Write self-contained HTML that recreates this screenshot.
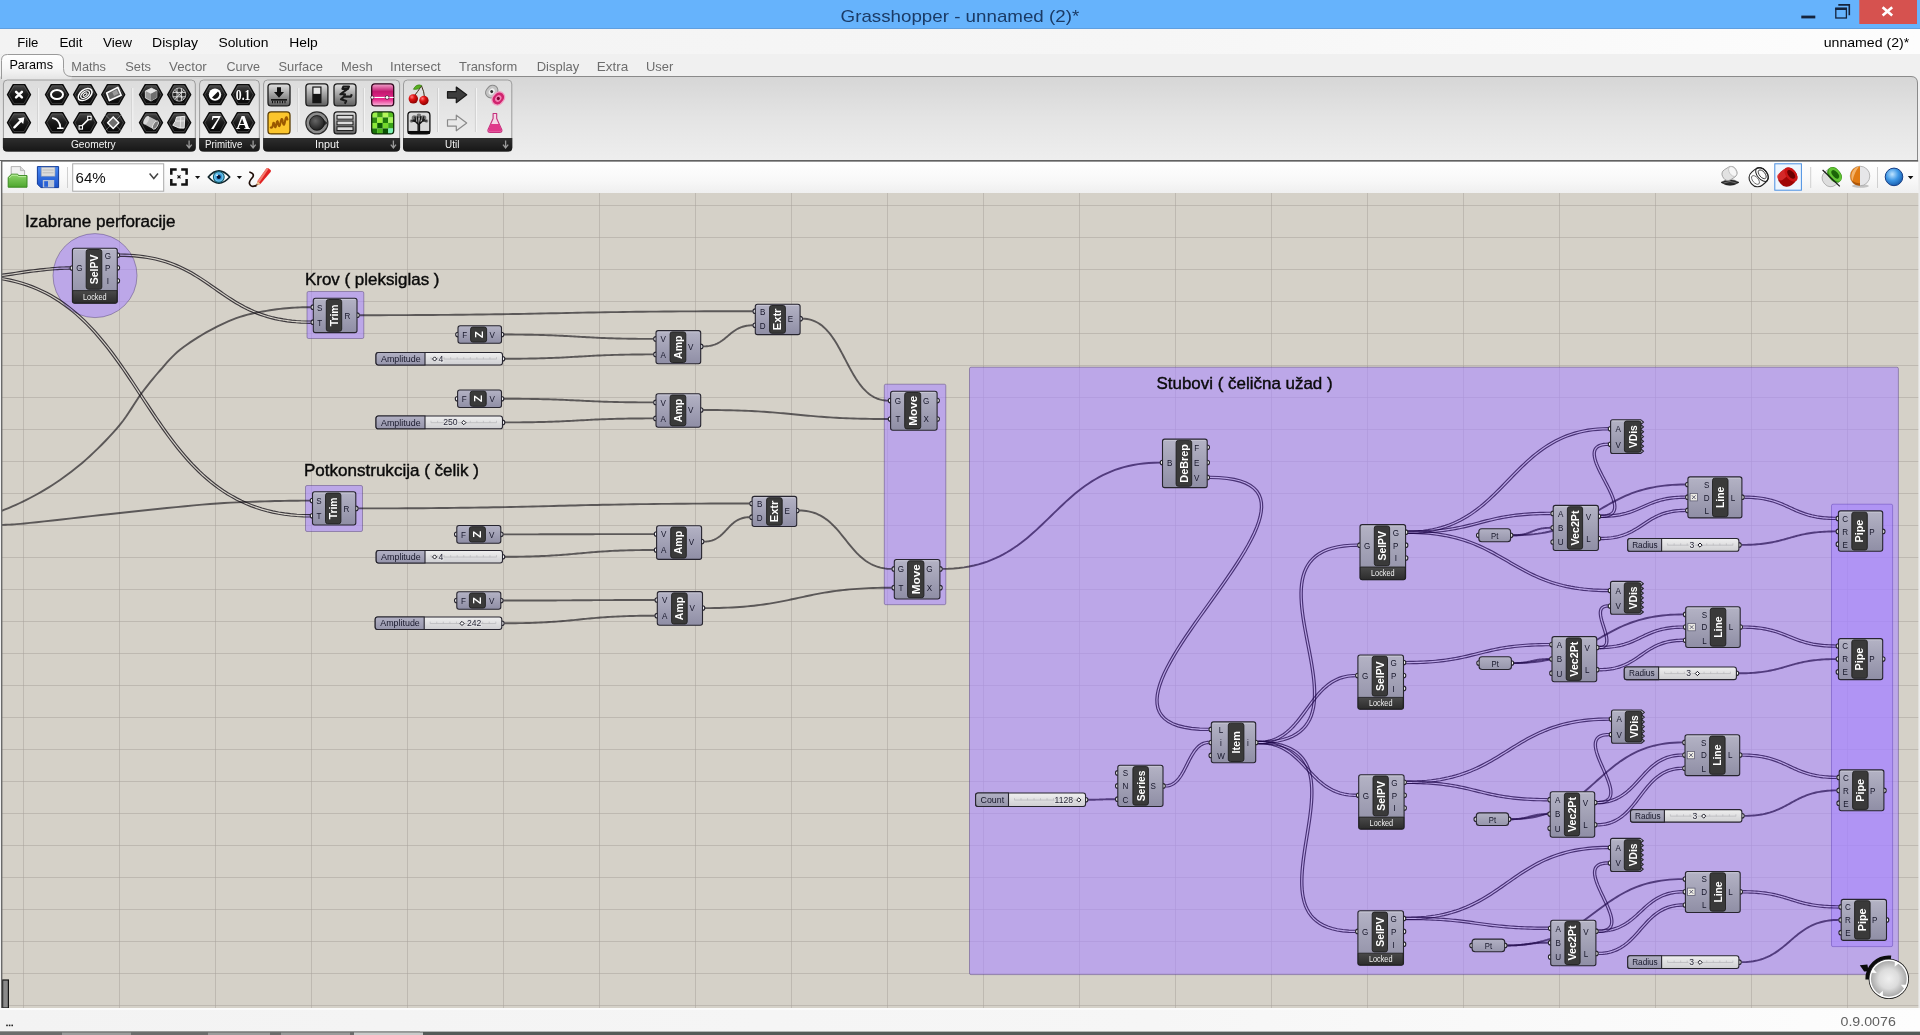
<!DOCTYPE html>
<html><head><meta charset="utf-8"><title>Grasshopper - unnamed (2)*</title>
<style>
html,body{margin:0;padding:0;width:1920px;height:1035px;overflow:hidden;background:#f0f0f0;font-family:"Liberation Sans",sans-serif}
svg text{font-family:"Liberation Sans",sans-serif}
</style></head>
<body>
<svg width="1920" height="1035" viewBox="0 0 1920 1035" style="position:absolute;left:0;top:0;font-family:'Liberation Sans', sans-serif" shape-rendering="auto">
<defs>
<linearGradient id="gComp" x1="0" y1="0" x2="0" y2="1"><stop offset="0" stop-color="#b4b3c5"/><stop offset="1" stop-color="#8f8ea5"/></linearGradient>
<linearGradient id="gLbl" x1="0" y1="0" x2="0" y2="1"><stop offset="0" stop-color="#b2b1c4"/><stop offset="1" stop-color="#9695ab"/></linearGradient>
<linearGradient id="gTrack" x1="0" y1="0" x2="0" y2="1"><stop offset="0" stop-color="#f0f0f0"/><stop offset="1" stop-color="#cfcfd2"/></linearGradient>
<linearGradient id="gLock" x1="0" y1="0" x2="0" y2="1"><stop offset="0" stop-color="#4a4a4a"/><stop offset="1" stop-color="#2c2c2c"/></linearGradient>
<linearGradient id="gRibbon" x1="0" y1="0" x2="0" y2="1"><stop offset="0" stop-color="#d6d6d6"/><stop offset="0.5" stop-color="#e4e4e4"/><stop offset="1" stop-color="#eeeeee"/></linearGradient>
<linearGradient id="gPanel" x1="0" y1="0" x2="0" y2="1"><stop offset="0" stop-color="#dcdcdc"/><stop offset="1" stop-color="#f0f0f0"/></linearGradient>
<linearGradient id="gPanelBar" x1="0" y1="0" x2="0" y2="1"><stop offset="0" stop-color="#2e2e2e"/><stop offset="1" stop-color="#161616"/></linearGradient>
<linearGradient id="gTool" x1="0" y1="0" x2="0" y2="1"><stop offset="0" stop-color="#ffffff"/><stop offset="0.6" stop-color="#f8f8f8"/><stop offset="1" stop-color="#efefef"/></linearGradient>
<linearGradient id="gMenu" x1="0" y1="0" x2="1" y2="0"><stop offset="0" stop-color="#f3f3f3"/><stop offset="0.6" stop-color="#f6f6f6"/><stop offset="1" stop-color="#fdfdfd"/></linearGradient>
<linearGradient id="gHex" x1="0" y1="0" x2="0" y2="1"><stop offset="0" stop-color="#4a4a4a"/><stop offset="0.45" stop-color="#1c1c1c"/><stop offset="1" stop-color="#050505"/></linearGradient>
<linearGradient id="gSq" x1="0" y1="0" x2="0" y2="1"><stop offset="0" stop-color="#e2e2e2"/><stop offset="1" stop-color="#5e5e5e"/></linearGradient>
<linearGradient id="gTab" x1="0" y1="0" x2="0" y2="1"><stop offset="0" stop-color="#ffffff"/><stop offset="0.55" stop-color="#f6f6f6"/><stop offset="1" stop-color="#e3e3e3"/></linearGradient>
<linearGradient id="gPink" x1="0" y1="0" x2="0" y2="1"><stop offset="0" stop-color="#f4a6cf"/><stop offset="0.35" stop-color="#c2186f"/><stop offset="0.7" stop-color="#e8288c"/><stop offset="1" stop-color="#f9b9dd"/></linearGradient>
<radialGradient id="gCompass" cx="0.5" cy="0.5" r="0.5"><stop offset="0" stop-color="#efefef"/><stop offset="0.55" stop-color="#dcdcdc"/><stop offset="1" stop-color="#a9a9a9"/></radialGradient>
<radialGradient id="gCherry" cx="0.35" cy="0.3" r="0.7"><stop offset="0" stop-color="#ff7b7b"/><stop offset="0.4" stop-color="#e01212"/><stop offset="1" stop-color="#8c0000"/></radialGradient>
<radialGradient id="gBlueS" cx="0.4" cy="0.35" r="0.7"><stop offset="0" stop-color="#bfe4ff"/><stop offset="0.5" stop-color="#3f98e6"/><stop offset="1" stop-color="#1458a8"/></radialGradient>
<radialGradient id="gKnob" cx="0.4" cy="0.35" r="0.7"><stop offset="0" stop-color="#666"/><stop offset="1" stop-color="#1a1a1a"/></radialGradient>
<filter id="nf" filterUnits="userSpaceOnUse" x="0" y="0" width="1920" height="1035" color-interpolation-filters="sRGB"><feOffset dx="0" dy="0"/></filter>
<linearGradient id="gWireMix" gradientUnits="userSpaceOnUse" x1="960" y1="0" x2="980" y2="0"><stop offset="0" stop-color="rgb(10,6,14)" stop-opacity="0.6"/><stop offset="1" stop-color="rgb(28,4,72)" stop-opacity="0.66"/></linearGradient>
<clipPath id="clipCanvas"><rect x="0" y="193" width="1920" height="815"/></clipPath>
</defs>
<g filter="url(#nf)">
<rect x="0" y="0" width="1920" height="29" fill="#66b3fc"/>
<rect x="0" y="28" width="1920" height="1" fill="#5f9fe0"/>
<text x="840.6" y="21.7" font-size="17" fill="#1b3b66" text-anchor="start" font-weight="normal" textLength="238.6" lengthAdjust="spacingAndGlyphs" >Grasshopper - unnamed (2)*</text>
<rect x="1801.3" y="15.6" width="14" height="2.8" fill="#15243c"/>
<path d="M1838.3 4.9 H1849.3 V15.2" fill="none" stroke="#15243c" stroke-width="1.6"/>
<rect x="1835.8" y="8.4" width="10.6" height="9.6" fill="none" stroke="#15243c" stroke-width="1.3"/>
<rect x="1835.2" y="7.6" width="11.8" height="2.4" fill="#15243c"/>
<rect x="1859.3" y="0" width="57.7" height="24" fill="#d6524f"/>
<path d="M1882.6 7.2 L1892.2 15.6 M1892.2 7.2 L1882.6 15.6" stroke="#fff" stroke-width="2.6" fill="none"/>
<rect x="0" y="29" width="1920" height="25" fill="url(#gMenu)"/>
<text x="17.25" y="46.6" font-size="13.2" fill="#000" text-anchor="start" font-weight="normal" textLength="21.15" lengthAdjust="spacingAndGlyphs" >File</text>
<text x="59.4" y="46.6" font-size="13.2" fill="#000" text-anchor="start" font-weight="normal" textLength="23.1" lengthAdjust="spacingAndGlyphs" >Edit</text>
<text x="103" y="46.6" font-size="13.2" fill="#000" text-anchor="start" font-weight="normal" textLength="29" lengthAdjust="spacingAndGlyphs" >View</text>
<text x="152" y="46.6" font-size="13.2" fill="#000" text-anchor="start" font-weight="normal" textLength="46" lengthAdjust="spacingAndGlyphs" >Display</text>
<text x="218.4" y="46.6" font-size="13.2" fill="#000" text-anchor="start" font-weight="normal" textLength="50.1" lengthAdjust="spacingAndGlyphs" >Solution</text>
<text x="289.3" y="46.6" font-size="13.2" fill="#000" text-anchor="start" font-weight="normal" textLength="28.5" lengthAdjust="spacingAndGlyphs" >Help</text>
<text x="1823.7" y="46.6" font-size="13.2" fill="#000" text-anchor="start" font-weight="normal" textLength="85.5" lengthAdjust="spacingAndGlyphs" >unnamed (2)*</text>
<rect x="0" y="54" width="1920" height="23" fill="#f0f0f0"/>
<path d="M0 76.5 H1911 Q1917.5 76.5 1917.5 83 V160 H0 Z" fill="url(#gRibbon)"/>
<path d="M62 76.5 H1911 Q1917.5 76.5 1917.5 83 V160" fill="none" stroke="#8a8a8a" stroke-width="1"/>
<rect x="1918" y="77" width="2" height="84" fill="#f0f0f0"/>
<path d="M1.5 80 V60.5 Q1.5 54.5 7.5 54.5 H57 Q63.5 54.5 63.5 61 V68.5 Q63.5 76.5 71.5 76.5 L71.5 80 Z" fill="url(#gTab)"/>
<path d="M1.5 79 V60.5 Q1.5 54.5 7.5 54.5 H57 Q63.5 54.5 63.5 61 V68.5 Q63.5 76.5 71.5 76.5" fill="none" stroke="#9a9a9a" stroke-width="1"/>
<text x="9.4" y="68.75" font-size="12.6" fill="#000" text-anchor="start" font-weight="normal" textLength="43.6" lengthAdjust="spacingAndGlyphs" >Params</text>
<text x="71.25" y="70.9" font-size="12.6" fill="#6d6d6d" text-anchor="start" font-weight="normal" textLength="34.75" lengthAdjust="spacingAndGlyphs" >Maths</text>
<text x="125.25" y="70.9" font-size="12.6" fill="#6d6d6d" text-anchor="start" font-weight="normal" textLength="25.75" lengthAdjust="spacingAndGlyphs" >Sets</text>
<text x="169" y="70.9" font-size="12.6" fill="#6d6d6d" text-anchor="start" font-weight="normal" textLength="37.8" lengthAdjust="spacingAndGlyphs" >Vector</text>
<text x="226.5" y="70.9" font-size="12.6" fill="#6d6d6d" text-anchor="start" font-weight="normal" textLength="33.5" lengthAdjust="spacingAndGlyphs" >Curve</text>
<text x="278.4" y="70.9" font-size="12.6" fill="#6d6d6d" text-anchor="start" font-weight="normal" textLength="44.6" lengthAdjust="spacingAndGlyphs" >Surface</text>
<text x="341" y="70.9" font-size="12.6" fill="#6d6d6d" text-anchor="start" font-weight="normal" textLength="31.7" lengthAdjust="spacingAndGlyphs" >Mesh</text>
<text x="390" y="70.9" font-size="12.6" fill="#6d6d6d" text-anchor="start" font-weight="normal" textLength="50.7" lengthAdjust="spacingAndGlyphs" >Intersect</text>
<text x="459" y="70.9" font-size="12.6" fill="#6d6d6d" text-anchor="start" font-weight="normal" textLength="58.3" lengthAdjust="spacingAndGlyphs" >Transform</text>
<text x="536.7" y="70.9" font-size="12.6" fill="#6d6d6d" text-anchor="start" font-weight="normal" textLength="42.6" lengthAdjust="spacingAndGlyphs" >Display</text>
<text x="596.7" y="70.9" font-size="12.6" fill="#6d6d6d" text-anchor="start" font-weight="normal" textLength="31.6" lengthAdjust="spacingAndGlyphs" >Extra</text>
<text x="646" y="70.9" font-size="12.6" fill="#6d6d6d" text-anchor="start" font-weight="normal" textLength="27.3" lengthAdjust="spacingAndGlyphs" >User</text>
<rect x="3.4" y="80" width="191.9" height="71.5" rx="4" fill="url(#gPanel)" stroke="#9c9c9c" stroke-width="1"/>
<path d="M2.9 138 H195.8 V147.5 Q195.8 151.6 191.8 151.6 H6.9 Q2.9 151.6 2.9 147.5 Z" fill="url(#gPanelBar)"/>
<rect x="37.2" y="88" width="1" height="44" fill="#cfcfcf"/><rect x="38.2" y="88" width="1" height="44" fill="#f6f6f6"/>
<rect x="131.3" y="88" width="1" height="44" fill="#cfcfcf"/><rect x="132.3" y="88" width="1" height="44" fill="#f6f6f6"/>
<text x="70.95" y="148.4" font-size="10.6" fill="#f4f4f4" text-anchor="start" font-weight="normal" textLength="44.7" lengthAdjust="spacingAndGlyphs" >Geometry</text>
<path d="M189.1 140.5 V147.5 M186.5 144.6 L189.1 148 L191.7 144.6" stroke="#9a9a9a" stroke-width="1.3" fill="none"/>
<rect x="199.6" y="80" width="59.7" height="71.5" rx="4" fill="url(#gPanel)" stroke="#9c9c9c" stroke-width="1"/>
<path d="M199.1 138 H259.8 V147.5 Q259.8 151.6 255.8 151.6 H203.1 Q199.1 151.6 199.1 147.5 Z" fill="url(#gPanelBar)"/>
<text x="205.05" y="148.4" font-size="10.6" fill="#f4f4f4" text-anchor="start" font-weight="normal" textLength="37.3" lengthAdjust="spacingAndGlyphs" >Primitive</text>
<path d="M253.1 140.5 V147.5 M250.5 144.6 L253.1 148 L255.7 144.6" stroke="#9a9a9a" stroke-width="1.3" fill="none"/>
<rect x="263.6" y="80" width="136" height="71.5" rx="4" fill="url(#gPanel)" stroke="#9c9c9c" stroke-width="1"/>
<path d="M263.1 138 H400.1 V147.5 Q400.1 151.6 396.1 151.6 H267.1 Q263.1 151.6 263.1 147.5 Z" fill="url(#gPanelBar)"/>
<rect x="297.3" y="88" width="1" height="44" fill="#cfcfcf"/><rect x="298.3" y="88" width="1" height="44" fill="#f6f6f6"/>
<rect x="362.9" y="88" width="1" height="44" fill="#cfcfcf"/><rect x="363.9" y="88" width="1" height="44" fill="#f6f6f6"/>
<text x="315" y="148.4" font-size="10.6" fill="#f4f4f4" text-anchor="start" font-weight="normal" textLength="24" lengthAdjust="spacingAndGlyphs" >Input</text>
<path d="M393.4 140.5 V147.5 M390.8 144.6 L393.4 148 L396 144.6" stroke="#9a9a9a" stroke-width="1.3" fill="none"/>
<rect x="403.5" y="80" width="108.3" height="71.5" rx="4" fill="url(#gPanel)" stroke="#9c9c9c" stroke-width="1"/>
<path d="M403 138 H512.3 V147.5 Q512.3 151.6 508.3 151.6 H407 Q403 151.6 403 147.5 Z" fill="url(#gPanelBar)"/>
<rect x="437.1" y="88" width="1" height="44" fill="#cfcfcf"/><rect x="438.1" y="88" width="1" height="44" fill="#f6f6f6"/>
<rect x="474.9" y="88" width="1" height="44" fill="#cfcfcf"/><rect x="475.9" y="88" width="1" height="44" fill="#f6f6f6"/>
<text x="445.05" y="148.4" font-size="10.6" fill="#f4f4f4" text-anchor="start" font-weight="normal" textLength="14.3" lengthAdjust="spacingAndGlyphs" >Util</text>
<path d="M505.6 140.5 V147.5 M503 144.6 L505.6 148 L508.2 144.6" stroke="#9a9a9a" stroke-width="1.3" fill="none"/>
<polygon points="7.6,94.6 13.3,84.7 24.7,84.7 30.4,94.6 24.7,104.5 13.3,104.5" fill="url(#gHex)" stroke="#0c0c0c" stroke-width="1.6" stroke-linejoin="round"/><polygon points="8.8,94.6 13.9,85.8 24.1,85.8 29.2,94.6 24.1,103.4 13.9,103.4" fill="none" stroke="#8a8a8a" stroke-width="0.7" opacity="0.55"/><g transform="translate(19 94.6)"><path d="M-2.9 -2.8 L2.9 2.8 M2.9 -2.8 L-2.9 2.8" stroke="#fff" fill="none" stroke-linecap="round" stroke-linejoin="round" stroke-width="2.5"/></g>
<polygon points="7.6,122.7 13.3,112.8 24.7,112.8 30.4,122.7 24.7,132.6 13.3,132.6" fill="url(#gHex)" stroke="#0c0c0c" stroke-width="1.6" stroke-linejoin="round"/><polygon points="8.8,122.7 13.9,113.9 24.1,113.9 29.2,122.7 24.1,131.5 13.9,131.5" fill="none" stroke="#8a8a8a" stroke-width="0.7" opacity="0.55"/><g transform="translate(19 122.7)"><path d="M-4.6 4.6 L3 -3" stroke="#fff" fill="none" stroke-linecap="round" stroke-linejoin="round" stroke-width="2.4"/><path d="M5.4 -5.4 L-1.4 -4.2 L4.2 1.4 Z" fill="#fff"/></g>
<polygon points="45.6,94.6 51.3,84.7 62.7,84.7 68.4,94.6 62.7,104.5 51.3,104.5" fill="url(#gHex)" stroke="#0c0c0c" stroke-width="1.6" stroke-linejoin="round"/><polygon points="46.8,94.6 51.9,85.8 62.1,85.8 67.2,94.6 62.1,103.4 51.9,103.4" fill="none" stroke="#8a8a8a" stroke-width="0.7" opacity="0.55"/><g transform="translate(57 94.6)"><ellipse cx="0" cy="0" rx="6" ry="4.5" stroke="#fff" fill="none" stroke-linecap="round" stroke-linejoin="round" stroke-width="2"/></g>
<polygon points="45.6,122.7 51.3,112.8 62.7,112.8 68.4,122.7 62.7,132.6 51.3,132.6" fill="url(#gHex)" stroke="#0c0c0c" stroke-width="1.6" stroke-linejoin="round"/><polygon points="46.8,122.7 51.9,113.9 62.1,113.9 67.2,122.7 62.1,131.5 51.9,131.5" fill="none" stroke="#8a8a8a" stroke-width="0.7" opacity="0.55"/><g transform="translate(57 122.7)"><path d="M-4.2 -4.6 Q2.6 -3.6 3.4 5" stroke="#fff" fill="none" stroke-linecap="round" stroke-linejoin="round" stroke-width="1.8"/><path d="M0.6 5.6 H6" stroke="#fff" fill="none" stroke-linecap="round" stroke-linejoin="round" stroke-width="1.4"/></g>
<polygon points="73.7,94.6 79.4,84.7 90.8,84.7 96.5,94.6 90.8,104.5 79.4,104.5" fill="url(#gHex)" stroke="#0c0c0c" stroke-width="1.6" stroke-linejoin="round"/><polygon points="74.9,94.6 80,85.8 90.2,85.8 95.3,94.6 90.2,103.4 80,103.4" fill="none" stroke="#8a8a8a" stroke-width="0.7" opacity="0.55"/><g transform="translate(85.1 94.6)"><g transform="rotate(-36)"><ellipse rx="7.8" ry="4.8" stroke="#fff" fill="none" stroke-linecap="round" stroke-linejoin="round" stroke-width="1.5"/><ellipse rx="5" ry="2.9" stroke="#fff" fill="none" stroke-linecap="round" stroke-linejoin="round" stroke-width="1.3"/><ellipse rx="2.3" ry="1.2" stroke="#fff" fill="none" stroke-linecap="round" stroke-linejoin="round" stroke-width="1.1"/></g></g>
<polygon points="73.7,122.7 79.4,112.8 90.8,112.8 96.5,122.7 90.8,132.6 79.4,132.6" fill="url(#gHex)" stroke="#0c0c0c" stroke-width="1.6" stroke-linejoin="round"/><polygon points="74.9,122.7 80,113.9 90.2,113.9 95.3,122.7 90.2,131.5 80,131.5" fill="none" stroke="#8a8a8a" stroke-width="0.7" opacity="0.55"/><g transform="translate(85.1 122.7)"><path d="M-3.6 3.6 L3.6 -3.6" stroke="#fff" fill="none" stroke-linecap="round" stroke-linejoin="round" stroke-width="1.5"/><rect x="-6" y="3" width="3.4" height="3.4" fill="#111" stroke="#fff" stroke-width="1.1"/><rect x="2.6" y="-6.4" width="3.4" height="3.4" fill="#111" stroke="#fff" stroke-width="1.1"/></g>
<polygon points="101.8,94.6 107.5,84.7 118.9,84.7 124.6,94.6 118.9,104.5 107.5,104.5" fill="url(#gHex)" stroke="#0c0c0c" stroke-width="1.6" stroke-linejoin="round"/><polygon points="103,94.6 108.1,85.8 118.3,85.8 123.4,94.6 118.3,103.4 108.1,103.4" fill="none" stroke="#8a8a8a" stroke-width="0.7" opacity="0.55"/><g transform="translate(113.2 94.6)"><path d="M-6.6 -1.6 L4.6 -7.2 L8 0.6 L-3.8 6 Z" fill="#6a6a6a" stroke="#fff" stroke-width="1.6" stroke-linejoin="round"/><path d="M-1 -2.6 L3.4 -4.8 L5.2 -0.8 L0.8 1.4 Z" fill="#9c9c9c"/></g>
<polygon points="101.8,122.7 107.5,112.8 118.9,112.8 124.6,122.7 118.9,132.6 107.5,132.6" fill="url(#gHex)" stroke="#0c0c0c" stroke-width="1.6" stroke-linejoin="round"/><polygon points="103,122.7 108.1,113.9 118.3,113.9 123.4,122.7 118.3,131.5 108.1,131.5" fill="none" stroke="#8a8a8a" stroke-width="0.7" opacity="0.55"/><g transform="translate(113.2 122.7)"><path d="M-8.6 -8.6 L8.6 8.6 M-8.6 8.6 L8.6 -8.6" stroke="#bdbdbd" stroke-width="0.9" opacity="0.55"/><path d="M0 -5.8 L5.6 0 L0 5.8 L-5.6 0 Z" fill="#6e6e6e" stroke="#fff" stroke-width="1.5" stroke-linejoin="round"/></g>
<polygon points="139.6,94.6 145.3,84.7 156.7,84.7 162.4,94.6 156.7,104.5 145.3,104.5" fill="url(#gHex)" stroke="#0c0c0c" stroke-width="1.6" stroke-linejoin="round"/><polygon points="140.8,94.6 145.9,85.8 156.1,85.8 161.2,94.6 156.1,103.4 145.9,103.4" fill="none" stroke="#8a8a8a" stroke-width="0.7" opacity="0.55"/><g transform="translate(151 94.6)"><path d="M-5.6 -3.6 L0.4 -6.4 L5.8 -3.8 L5.8 3 L0 6.4 L-5.6 3.4 Z" fill="#9c9c9c" stroke="#e8e8e8" stroke-width="0.8"/><path d="M-5.6 -3.6 L0 -0.8 L5.8 -3.8 L0.4 -6.4 Z" fill="#e4e4e4"/><path d="M0 -0.8 L0 6.4 L5.8 3 L5.8 -3.8 Z" fill="#6e6e6e"/></g>
<polygon points="139.6,122.7 145.3,112.8 156.7,112.8 162.4,122.7 156.7,132.6 145.3,132.6" fill="url(#gHex)" stroke="#0c0c0c" stroke-width="1.6" stroke-linejoin="round"/><polygon points="140.8,122.7 145.9,113.9 156.1,113.9 161.2,122.7 156.1,131.5 145.9,131.5" fill="none" stroke="#8a8a8a" stroke-width="0.7" opacity="0.55"/><g transform="translate(151 122.7)"><g transform="rotate(28)"><rect x="-6" y="-4.6" width="11" height="9.2" rx="2.4" fill="#b8b8b8"/><ellipse cx="5" cy="0" rx="2.2" ry="4.6" fill="#7a7a7a" stroke="#eee" stroke-width="0.8"/><ellipse cx="-5.4" cy="0" rx="2.2" ry="4.6" fill="#d8d8d8"/></g></g>
<polygon points="167.8,94.6 173.5,84.7 184.9,84.7 190.6,94.6 184.9,104.5 173.5,104.5" fill="url(#gHex)" stroke="#0c0c0c" stroke-width="1.6" stroke-linejoin="round"/><polygon points="169,94.6 174.1,85.8 184.3,85.8 189.4,94.6 184.3,103.4 174.1,103.4" fill="none" stroke="#8a8a8a" stroke-width="0.7" opacity="0.55"/><g transform="translate(179.2 94.6)"><circle r="6.6" fill="#2a2a2a" stroke="#cfcfcf" stroke-width="0.8"/><path d="M-6.4 -2.2 H6.4 M-6.4 2.2 H6.4 M-2.2 -6.4 V6.4 M2.2 -6.4 V6.4 M-4.6 -4.6 L4.6 4.6 M4.6 -4.6 L-4.6 4.6" stroke="#e6e6e6" stroke-width="0.9"/></g>
<polygon points="167.8,122.7 173.5,112.8 184.9,112.8 190.6,122.7 184.9,132.6 173.5,132.6" fill="url(#gHex)" stroke="#0c0c0c" stroke-width="1.6" stroke-linejoin="round"/><polygon points="169,122.7 174.1,113.9 184.3,113.9 189.4,122.7 184.3,131.5 174.1,131.5" fill="none" stroke="#8a8a8a" stroke-width="0.7" opacity="0.55"/><g transform="translate(179.2 122.7)"><path d="M-2.6 -5.6 L5.6 -6.4 L5 5.4 Q0 6.4 -6.4 2.6 Q-3.4 -1 -2.6 -5.6 Z" fill="#bdbdbd" stroke="#f4f4f4" stroke-width="0.9"/><path d="M1.6 -5.8 L1 5.6 M-3.4 -1.6 L5.4 -1.8" stroke="#f6f6f6" stroke-width="0.7"/></g>
<polygon points="203.6,94.6 209.3,84.7 220.7,84.7 226.4,94.6 220.7,104.5 209.3,104.5" fill="url(#gHex)" stroke="#0c0c0c" stroke-width="1.6" stroke-linejoin="round"/><polygon points="204.8,94.6 209.9,85.8 220.1,85.8 225.2,94.6 220.1,103.4 209.9,103.4" fill="none" stroke="#8a8a8a" stroke-width="0.7" opacity="0.55"/><g transform="translate(215 94.6)"><circle r="6.2" fill="#fff"/><path d="M-3 3 L3 -3 A4.25 4.25 0 0 1 -3 3 Z" fill="#151515"/></g>
<polygon points="203.6,122.7 209.3,112.8 220.7,112.8 226.4,122.7 220.7,132.6 209.3,132.6" fill="url(#gHex)" stroke="#0c0c0c" stroke-width="1.6" stroke-linejoin="round"/><polygon points="204.8,122.7 209.9,113.9 220.1,113.9 225.2,122.7 220.1,131.5 209.9,131.5" fill="none" stroke="#8a8a8a" stroke-width="0.7" opacity="0.55"/><text x="215" y="129.3" style="font-family:'Liberation Serif',serif" font-weight="bold" font-style="italic" font-size="19.5" fill="#fff" text-anchor="middle">7</text>
<polygon points="231.7,94.6 237.4,84.7 248.8,84.7 254.5,94.6 248.8,104.5 237.4,104.5" fill="url(#gHex)" stroke="#0c0c0c" stroke-width="1.6" stroke-linejoin="round"/><polygon points="232.9,94.6 238,85.8 248.2,85.8 253.3,94.6 248.2,103.4 238,103.4" fill="none" stroke="#8a8a8a" stroke-width="0.7" opacity="0.55"/><text x="243.1" y="99.8" style="font-family:'Liberation Serif',serif" font-weight="bold" font-size="15.4" fill="#fff" text-anchor="middle" textLength="14.6" lengthAdjust="spacingAndGlyphs">0.1</text>
<polygon points="231.7,122.7 237.4,112.8 248.8,112.8 254.5,122.7 248.8,132.6 237.4,132.6" fill="url(#gHex)" stroke="#0c0c0c" stroke-width="1.6" stroke-linejoin="round"/><polygon points="232.9,122.7 238,113.9 248.2,113.9 253.3,122.7 248.2,131.5 238,131.5" fill="none" stroke="#8a8a8a" stroke-width="0.7" opacity="0.55"/><text x="243.1" y="129.3" style="font-family:'Liberation Serif',serif" font-weight="bold" font-size="19.5" fill="#fff" text-anchor="middle">A</text>
<rect x="268" y="83.85" width="22" height="22" rx="3.2" fill="url(#gSq)" stroke="#1a1a1a" stroke-width="1.3"/><g transform="translate(279 94.85)"><path d="M-2 -7.5 H2 V-2.8 H5 L0 2.8 L-5 -2.8 H-2 Z" fill="#111"/><rect x="-8" y="4.2" width="16" height="1.6" fill="#111"/><path d="M-6.5 6 V8.4 M-4 6 V8.4 M-1.5 6 V8.4 M1 6 V8.4 M3.5 6 V8.4 M6 6 V8.4" stroke="#111" stroke-width="1"/></g>
<rect x="268" y="111.95" width="22" height="22" rx="3.2" fill="#fbc52c" stroke="#5a3c00" stroke-width="1.3"/><g transform="translate(279 122.95)"><path d="M-8.2 4.6 Q-6.4 5.4 -5.8 0.6 Q-5.2 -1.6 -4.4 2.4 Q-3.6 6.6 -2.6 1 Q-1.8 -4.4 -0.8 0.6 Q0.4 6.2 1.6 -0.6 Q2.8 -7.2 3.8 -1 Q5 5 6 -1.6 Q7.2 -8.8 8.4 -3.4" fill="none" stroke="#9a5800" stroke-width="2.1" stroke-linecap="round" stroke-linejoin="round"/></g>
<rect x="305.9" y="83.85" width="22" height="22" rx="3.2" fill="url(#gSq)" stroke="#1a1a1a" stroke-width="1.3"/><g transform="translate(316.9 94.85)"><rect x="-4.6" y="-8.4" width="9.2" height="16.8" fill="#151515"/><rect x="-3.4" y="-7.2" width="6.8" height="6.2" fill="#e8e8e8"/></g>
<g transform="translate(316.9 122.95)"><circle r="11" fill="#8c8c8c" stroke="#2a2a2a" stroke-width="1.2"/><path d="M5 -4.6 L10.6 0 L5 4.6 Z" fill="#2a2a2a"/><circle r="7.4" fill="url(#gKnob)" stroke="#111" stroke-width="0.8"/></g>
<rect x="334" y="83.85" width="22" height="22" rx="3.2" fill="url(#gSq)" stroke="#1a1a1a" stroke-width="1.3"/><g transform="translate(345 94.85)"><path d="M-1.6 -8.4 L4 -8.4 L3 -6 L-2.6 -6 Z M2.6 -6 L-4.6 -0.6 L0 -0.6 L-1 1.8 L5.8 1.8 L6.8 -0.6 M-1 1.8 L-4 4.4 L1.2 6.2 L-0.2 8.8" fill="none" stroke="#1a1a1a" stroke-width="2.1" stroke-linejoin="round"/></g>
<rect x="334" y="111.95" width="22" height="22" rx="3.2" fill="url(#gSq)" stroke="#1a1a1a" stroke-width="1.3"/><g transform="translate(345 122.95)"><rect x="-8" y="-7.6" width="16" height="3.8" fill="#dcdcdc" stroke="#1a1a1a" stroke-width="1"/><rect x="-8" y="-1.9" width="16" height="3.8" fill="#dcdcdc" stroke="#1a1a1a" stroke-width="1"/><rect x="-8" y="3.8" width="16" height="3.8" fill="#dcdcdc" stroke="#1a1a1a" stroke-width="1"/></g>
<rect x="371.7" y="83.85" width="22" height="22" rx="3.2" fill="url(#gPink)" stroke="#30061c" stroke-width="1.3"/><g transform="translate(382.7 94.85)"><path d="M-11 2.6 H11" stroke="#fff" stroke-width="1.1"/><circle cx="-10.4" cy="2.6" r="1.6" fill="#fff" stroke="#30061c" stroke-width="0.7"/><circle cx="4.4" cy="2.6" r="1.9" fill="#fff" stroke="#30061c" stroke-width="0.7"/></g>
<clipPath id="ckc"><rect x="371.7" y="111.95" width="22" height="22" rx="3.2"/></clipPath><g clip-path="url(#ckc)"><rect x="371.7" y="111.95" width="5.6" height="5.6" fill="#9af04a"/><rect x="377.2" y="111.95" width="5.6" height="5.6" fill="#3a9a12"/><rect x="382.7" y="111.95" width="5.6" height="5.6" fill="#b4f85a"/><rect x="388.2" y="111.95" width="5.6" height="5.6" fill="#58c020"/><rect x="371.7" y="117.45" width="5.6" height="5.6" fill="#2e8a10"/><rect x="377.2" y="117.45" width="5.6" height="5.6" fill="#9cf03c"/><rect x="382.7" y="117.45" width="5.6" height="5.6" fill="#1e7a0a"/><rect x="388.2" y="117.45" width="5.6" height="5.6" fill="#a6f45c"/><rect x="371.7" y="122.95" width="5.6" height="5.6" fill="#8ae838"/><rect x="377.2" y="122.95" width="5.6" height="5.6" fill="#0c5a04"/><rect x="382.7" y="122.95" width="5.6" height="5.6" fill="#74d82a"/><rect x="388.2" y="122.95" width="5.6" height="5.6" fill="#38a418"/><rect x="371.7" y="128.45" width="5.6" height="5.6" fill="#1a7408"/><rect x="377.2" y="128.45" width="5.6" height="5.6" fill="#4cb81c"/><rect x="382.7" y="128.45" width="5.6" height="5.6" fill="#0a5202"/><rect x="388.2" y="128.45" width="5.6" height="5.6" fill="#7af2b4"/></g><rect x="371.7" y="111.95" width="22" height="22" rx="3.2" fill="none" stroke="#0d2a06" stroke-width="1.3"/>
<g transform="translate(418.9 94.85)"><path d="M2.6 -9 Q-1.4 -3 -5 1.6 M2.6 -9 Q5.4 -3 5.6 2.6" fill="none" stroke="#3a2a14" stroke-width="1"/><path d="M2.8 -9.4 Q-2.4 -11.6 -5.6 -5.6 Q0.2 -4.6 2.8 -9.4 Z" fill="#58b020" stroke="#2c6a0c" stroke-width="0.5"/><circle cx="-5.6" cy="4" r="4.7" fill="url(#gCherry)"/><circle cx="5" cy="5.6" r="4.7" fill="url(#gCherry)"/></g>
<rect x="407.9" y="111.95" width="22" height="22" rx="3.2" fill="#d8d8d8" stroke="#0a0a0a" stroke-width="1.3"/><g transform="translate(418.9 122.95)"><rect x="-11" y="8" width="22" height="3" fill="#0a0a0a"/><path d="M-0.8 8.4 V1.4 L-5.4 -3.4 M-0.8 1.8 L-1.4 -6.6 M0.6 8.4 V1 L5.8 -4 M0.4 1.6 L2 -6.8 M-3.6 -1.4 L-7.6 -2.4 M3.8 -1.8 L8 -2 M-3 -1 L-4 -6.4 M3.4 -1.4 L5 -6.6" stroke="#111" stroke-width="1.3" fill="none"/><circle cx="-4.6" cy="-5" r="2.6" fill="#222" opacity="0.55"/><circle cx="4.6" cy="-5" r="2.8" fill="#222" opacity="0.55"/><circle cx="0" cy="-7" r="2.4" fill="#222" opacity="0.55"/><circle cx="-7.4" cy="-2" r="1.8" fill="#222" opacity="0.5"/><circle cx="7.6" cy="-2" r="1.8" fill="#222" opacity="0.5"/></g>
<g transform="translate(456.9 94.85)"><path d="M-9.4 -3.2 H-0.6 V-7.8 L9.8 0 L-0.6 7.8 V3.2 H-9.4 Z" fill="#3c3c3c" stroke="#1a1a1a" stroke-width="1.2" stroke-linejoin="round"/></g>
<g transform="translate(456.9 122.95)"><path d="M-9.4 -3.2 H-0.6 V-7.8 L9.8 0 L-0.6 7.8 V3.2 H-9.4 Z" fill="#e8e8e8" stroke="#8a8a8a" stroke-width="1.2" stroke-linejoin="round"/></g>
<g transform="translate(494.9 94.85)"><g transform="rotate(-50 -3 -3)"><rect x="-9.6" y="-8.6" width="13.4" height="10.6" rx="5.3" fill="#c4c4c4" stroke="#8a8a8a" stroke-width="1"/><ellipse cx="-2.9" cy="-3.3" rx="3.4" ry="2.6" fill="#efefef"/><circle cx="-2.9" cy="-3.3" r="1.5" fill="#2e2e2e"/></g><g transform="rotate(-50 3.4 3.6)"><rect x="-3.6" y="-1.8" width="14" height="10.8" rx="5.4" fill="#d0246e" stroke="#f0a0c4" stroke-width="1.2"/><ellipse cx="3.4" cy="3.6" rx="3.6" ry="2.8" fill="#f284b4"/><circle cx="3.4" cy="3.6" r="1.6" fill="#7a0434"/></g></g>
<g transform="translate(494.9 122.95)"><path d="M-1.8 -9.4 H1.8 V-4.4 L7 7 Q7.4 9.4 4.6 9.4 H-4.6 Q-7.4 9.4 -7 7 L-1.8 -4.4 Z" fill="#f6d6e6" stroke="#c4307c" stroke-width="1.1" stroke-linejoin="round"/><path d="M-4.2 1 H4.2 L6.6 7 Q7 8.8 4.6 8.8 H-4.6 Q-7 8.8 -6.6 7 Z" fill="#e0388a"/></g>
<rect x="0" y="160" width="1918.4" height="1.8" fill="#626262"/>
<rect x="0" y="161.8" width="1918.4" height="31.2" fill="url(#gTool)"/>
<path d="M11.2 166.6 H20.4 L24.6 170.6 V180 H11.2 Z" fill="#f0f0f0" stroke="#a0a0a0" stroke-width="0.8"/>
<path d="M20.4 166.6 V170.6 H24.6" fill="#d8d8d8" stroke="#a0a0a0" stroke-width="0.6"/>
<linearGradient id="gFold" x1="0" y1="0" x2="0" y2="1"><stop offset="0" stop-color="#8ed66a"/><stop offset="1" stop-color="#4ea62e"/></linearGradient>
<path d="M8.2 177.4 L11.6 174.2 H17.4 L19 175.6 H27 V187.2 H8.2 Z" fill="url(#gFold)" stroke="#3a8a22" stroke-width="1"/>
<path d="M9.2 178 L12 175.2 H17 L18.6 176.6 H26" fill="none" stroke="#c4f0aa" stroke-width="0.9"/>
<linearGradient id="gFlop" x1="0" y1="0" x2="0" y2="1"><stop offset="0" stop-color="#4a8af4"/><stop offset="1" stop-color="#1a50c8"/></linearGradient>
<path d="M37.4 166.6 H58.6 V187.6 H41 L37.4 184.2 Z" fill="url(#gFlop)" stroke="#123c9a" stroke-width="1"/>
<rect x="41.2" y="167.2" width="13.8" height="9" fill="#dcdcdc" stroke="#8e9ab0" stroke-width="0.6"/>
<path d="M42.6 170 H53.6 M42.6 172.8 H53.6" stroke="#b4b4b4" stroke-width="0.8"/>
<rect x="42.8" y="180" width="11.4" height="7.4" fill="#b9c4d6"/><rect x="44.2" y="181.2" width="3.8" height="5.6" fill="#2a62d8"/>
<rect x="67" y="167" width="1" height="21" fill="#d0d0d0"/>
<rect x="72.7" y="163.8" width="91" height="27.4" fill="#fff" stroke="#a9a9a9" stroke-width="1"/>
<text x="75.5" y="182.5" font-size="14.6" fill="#111" textLength="30.2" lengthAdjust="spacingAndGlyphs">64%</text>
<path d="M149.6 173.6 L153.8 178.6 L158 173.6" fill="none" stroke="#444" stroke-width="1.5"/>
<path d="M171.3 174.8 V169.4 H176.7 M181.2 169.4 H186.6 V174.8 M186.6 179 V184.4 H181.2 M176.7 184.4 H171.3 V179" stroke="#111" stroke-width="2.5" fill="none" stroke-linejoin="miter"/>
<path d="M177.5 175.4 L180.5 178.4 M180.5 175.4 L177.5 178.4" stroke="#111" stroke-width="1.3"/>
<path d="M195 175.9 H200.2 L197.6 178.9 Z" fill="#111"/>
<path d="M208.3 177 Q218.9 164.6 229.7 177 Q218.9 189.4 208.3 177 Z" fill="#fbfbfb" stroke="#10242a" stroke-width="1.7" stroke-linejoin="round"/>
<circle cx="218.8" cy="177" r="5.4" fill="#6cc4ee" stroke="#0e5a6e" stroke-width="1.1"/><circle cx="218.8" cy="177" r="3.4" fill="#3a9ad8"/><circle cx="218.8" cy="177" r="2" fill="#06102e"/><circle cx="217" cy="175.2" r="0.9" fill="#e8f8ff"/>
<path d="M236.8 175.9 H242 L239.4 178.9 Z" fill="#111"/>
<path d="M250 172.2 Q254.6 173.6 252.8 177 Q248.6 181.6 249.6 184 Q251 187.8 256 185.6" fill="none" stroke="#1e0c06" stroke-width="1.7" stroke-linecap="round"/>
<path d="M256.2 185.4 L257.6 181 L266.4 168.4 Q267.6 167.4 268.8 168.4 L270.6 170 Q271.4 171 270.6 172 L260.4 184 Z" fill="#e02222"/>
<path d="M257.6 181 L266.4 168.4 Q267.6 167.4 268.8 168.4 L259.4 182.6 Z" fill="#f47c70"/>
<path d="M256.2 185.4 L257.6 181 L260.4 184 Z" fill="#e8c48e"/><path d="M256.2 185.4 L256.7 183.8 L257.8 184.9 Z" fill="#2a1208"/>
<g transform="translate(1730 177)"><path d="M-9 5.4 Q0 0 9 5.4 Q0 11.2 -9 5.4 Z" fill="#2c2c2c" stroke="#111" stroke-width="0.6"/><path d="M-6.4 6 Q0 3 6.4 6" fill="none" stroke="#8a8a8a" stroke-width="0.7"/><g transform="rotate(-32 0 -3)"><rect x="-7.6" y="-9.6" width="15" height="11.8" rx="5" fill="#e2e2e2" stroke="#9a9a9a" stroke-width="0.8"/><ellipse cx="3.6" cy="-3.7" rx="3.4" ry="5.4" fill="#f6f6f6" stroke="#b4b4b4" stroke-width="0.6"/></g></g>
<g transform="translate(1759 177) rotate(-40)"><rect x="-10" y="-8.4" width="19" height="16.8" rx="7.6" fill="#fdfdfd" stroke="#222" stroke-width="1.1"/><ellipse cx="4" cy="0" rx="4.8" ry="8.2" fill="none" stroke="#222" stroke-width="1"/><ellipse cx="4.2" cy="0" rx="2.8" ry="5.2" fill="none" stroke="#222" stroke-width="0.8"/><ellipse cx="-4.6" cy="0" rx="2.8" ry="5.2" fill="none" stroke="#555" stroke-width="0.8"/></g>
<rect x="1774.8" y="163.8" width="26.6" height="26.4" fill="#eef6fe" stroke="#4a90e2" stroke-width="1"/>
<g transform="translate(1788 177) rotate(-40)"><rect x="-10" y="-8.6" width="19" height="17.2" rx="7.8" fill="#a00606"/><rect x="-9" y="-8.6" width="14" height="7.4" rx="4" fill="#e43434" opacity="0.75"/><ellipse cx="4" cy="0" rx="5" ry="8.4" fill="#cc1414"/><ellipse cx="4.2" cy="0" rx="2.9" ry="5.2" fill="#6c0202"/></g>
<rect x="1810.2" y="167" width="1" height="21" fill="#d0d0d0"/>
<g transform="translate(1832 177)"><g transform="rotate(-40)"><rect x="-10" y="-8.4" width="19" height="16.8" rx="7.6" fill="#dedede" stroke="#a0a0a0" stroke-width="0.7"/><rect x="-2.6" y="-8.5" width="11.8" height="17" rx="6.4" fill="#3a981a"/><ellipse cx="4" cy="0" rx="4.8" ry="8.2" fill="#62c434"/><ellipse cx="4.2" cy="0" rx="2.7" ry="5" fill="#1c6408"/></g><path d="M-9.4 -7 L7.8 9.4" stroke="#1a1a1a" stroke-width="1.2"/></g>
<g transform="translate(1860 176)"><ellipse cx="0.4" cy="10" rx="8.4" ry="1.8" fill="#000" opacity="0.2"/><circle r="9.8" fill="#e6e6e8" stroke="#a8a8a8" stroke-width="0.8"/><path d="M0 -9.8 A9.8 9.8 0 0 0 0 9.8 Z" fill="#e07a12"/><path d="M-1 -9.4 A9.8 9.8 0 0 0 -7.4 5 Q-6 -3 -1 -9.4 Z" fill="#f8c080" opacity="0.8"/><path d="M0 9.8 A9.8 9.8 0 0 1 -8.6 4.6 Q-3 8 0 7 Z" fill="#8a3e02" opacity="0.6"/></g>
<rect x="1877" y="167" width="1" height="21" fill="#d0d0d0"/>
<circle cx="1894" cy="176.9" r="8.8" fill="url(#gBlueS)" stroke="#163e86" stroke-width="1"/>
<path d="M1907.8 176 H1913.4 L1910.6 179.2 Z" fill="#111"/>
<g clip-path="url(#clipCanvas)">
<rect x="0" y="193" width="1920" height="815" fill="#d5d1c8"/>
<path d="M23.5 193V1008M119.5 193V1008M215.5 193V1008M311.5 193V1008M407.5 193V1008M503.5 193V1008M599.5 193V1008M695.5 193V1008M791.5 193V1008M887.5 193V1008M983.5 193V1008M1079.5 193V1008M1175.5 193V1008M1271.5 193V1008M1367.5 193V1008M1463.5 193V1008M1559.5 193V1008M1655.5 193V1008M1751.5 193V1008M1847.5 193V1008M0 205.5H1920M0 237.5H1920M0 269.5H1920M0 301.5H1920M0 333.5H1920M0 365.5H1920M0 397.5H1920M0 429.5H1920M0 461.5H1920M0 493.5H1920M0 525.5H1920M0 557.5H1920M0 589.5H1920M0 621.5H1920M0 653.5H1920M0 685.5H1920M0 717.5H1920M0 749.5H1920M0 781.5H1920M0 813.5H1920M0 845.5H1920M0 877.5H1920M0 909.5H1920M0 941.5H1920M0 973.5H1920M0 1005.5H1920" stroke="#a8a39b" stroke-width="1" fill="none" opacity="0.52"/>
<circle cx="95" cy="275.6" r="42" fill="rgba(173,140,252,0.62)" stroke="rgba(70,50,110,0.42)" stroke-width="1"/>
<rect x="307" y="291.5" width="56.8" height="47" rx="1.5" fill="rgba(173,140,252,0.62)" stroke="rgba(70,50,110,0.42)" stroke-width="1"/>
<rect x="305.5" y="485.5" width="57" height="46" rx="1.5" fill="rgba(173,140,252,0.62)" stroke="rgba(70,50,110,0.42)" stroke-width="1"/>
<rect x="884.3" y="384.2" width="61.5" height="220.5" rx="1.5" fill="rgba(173,140,252,0.62)" stroke="rgba(70,50,110,0.42)" stroke-width="1"/>
<rect x="969.5" y="367.2" width="928.9" height="607.4" rx="1.5" fill="rgba(173,140,252,0.62)" stroke="rgba(70,50,110,0.42)" stroke-width="1"/>
<rect x="1831.5" y="504.2" width="61.1" height="442.4" rx="1.5" fill="rgba(164,130,255,0.5)" stroke="rgba(80,50,170,0.4)" stroke-width="1"/>
<path d="M-40.11 278.36 L-36.95 278.06 L-32.68 277.66 L-27.6 277.2 L-21.98 276.67 L-16.14 276.12 L-10.35 275.55 L-4.92 274.99 L-0.13 274.46 L4.11 273.93 L8.16 273.38 L12.03 272.81 L15.76 272.24 L19.38 271.68 L22.92 271.13 L26.4 270.62 L29.85 270.16 L33.29 269.73 L36.7 269.32 L40.05 268.94 L43.31 268.58 L46.46 268.24 L49.46 267.95 L52.28 267.68 L54.91 267.45 L57.38 267.27 L59.75 267.14 L61.97 267.05 L64.03 266.98 L65.89 266.94 L67.52 266.91 L68.88 266.88 L69.97 266.85" fill="none" stroke="rgba(10,6,14,0.74)" stroke-width="1.15"/>
<path d="M-39.89 280.64 L-36.74 280.35 L-32.47 279.95 L-27.38 279.49 L-21.77 278.96 L-15.91 278.41 L-10.12 277.84 L-4.67 277.28 L0.13 276.74 L4.41 276.21 L8.48 275.65 L12.37 275.08 L16.11 274.51 L19.73 273.95 L23.26 273.41 L26.72 272.9 L30.15 272.44 L33.57 272.01 L36.97 271.61 L40.31 271.22 L43.56 270.86 L46.69 270.53 L49.68 270.23 L52.49 269.97 L55.09 269.75 L57.53 269.57 L59.86 269.44 L62.06 269.34 L64.09 269.28 L65.94 269.24 L67.56 269.21 L68.94 269.18 L70.03 269.15" fill="none" stroke="rgba(10,6,14,0.74)" stroke-width="1.15"/>
<path d="M-26.98 275.25 L-20.31 275.36 L-13.8 275.69 L-7.47 276.24 L-1.31 277 L4.67 277.96 L10.49 279.11 L16.15 280.46 L21.65 282 L26.99 283.72 L32.19 285.61 L37.25 287.68 L42.16 289.91 L46.94 292.29 L51.59 294.83 L56.12 297.51 L60.53 300.34 L64.81 303.3 L68.99 306.39 L73.06 309.6 L77.03 312.94 L80.91 316.38 L84.69 319.93 L88.38 323.58 L91.99 327.32 L95.52 331.15 L98.98 335.07 L102.37 339.06 L105.7 343.13 L108.97 347.26 L112.19 351.45 L115.35 355.7 L118.48 360 L121.56 364.34 L124.61 368.72 L127.63 373.13 L130.63 377.56 L133.61 382.02 L136.57 386.5 L139.52 390.98 L142.46 395.47 L145.41 399.96 L148.35 404.44 L151.31 408.9 L154.28 413.35 L157.27 417.78 L160.28 422.18 L163.32 426.54 L166.39 430.86 L169.5 435.14 L172.65 439.36 L175.84 443.52 L179.09 447.63 L182.39 451.66 L185.76 455.62 L189.19 459.5 L192.68 463.3 L196.26 467.01 L199.91 470.62 L203.65 474.12 L207.47 477.52 L211.39 480.81 L215.4 483.98 L219.52 487.03 L223.75 489.95 L228.09 492.73 L232.54 495.37 L237.12 497.87 L241.83 500.22 L246.66 502.41 L251.64 504.44 L256.75 506.3 L262.01 508 L267.43 509.51 L273 510.84 L278.73 511.98 L284.63 512.93 L290.7 513.67 L296.95 514.21 L303.38 514.54 L310.02 514.65" fill="none" stroke="rgba(10,6,14,0.74)" stroke-width="1.15"/>
<path d="M-27.02 277.55 L-20.38 277.66 L-13.95 277.99 L-7.7 278.53 L-1.63 279.27 L4.27 280.22 L10 281.36 L15.57 282.69 L20.99 284.2 L26.25 285.9 L31.36 287.76 L36.34 289.79 L41.17 291.98 L45.88 294.33 L50.46 296.83 L54.91 299.47 L59.25 302.25 L63.48 305.17 L67.6 308.22 L71.61 311.39 L75.53 314.68 L79.35 318.08 L83.09 321.58 L86.74 325.19 L90.32 328.9 L93.81 332.7 L97.24 336.58 L100.61 340.54 L103.91 344.57 L107.16 348.68 L110.35 352.84 L113.5 357.06 L116.61 361.34 L119.68 365.66 L122.72 370.02 L125.73 374.42 L128.72 378.85 L131.69 383.3 L134.65 387.76 L137.59 392.24 L140.54 396.73 L143.48 401.22 L146.43 405.7 L149.39 410.18 L152.37 414.64 L155.37 419.07 L158.39 423.48 L161.44 427.86 L164.52 432.2 L167.65 436.5 L170.81 440.75 L174.03 444.94 L177.3 449.07 L180.63 453.14 L184.02 457.13 L187.48 461.05 L191.01 464.88 L194.62 468.62 L198.31 472.27 L202.09 475.82 L205.97 479.26 L209.94 482.6 L214.01 485.81 L218.19 488.9 L222.47 491.86 L226.88 494.69 L231.41 497.37 L236.06 499.91 L240.84 502.29 L245.75 504.52 L250.81 506.59 L256.01 508.48 L261.35 510.2 L266.85 511.74 L272.51 513.09 L278.33 514.24 L284.31 515.2 L290.47 515.96 L296.8 516.51 L303.31 516.84 L309.98 516.95" fill="none" stroke="rgba(10,6,14,0.74)" stroke-width="1.15"/>
<path d="M-45 528 L-41.43 526.71 L-36.56 524.96 L-30.76 522.89 L-24.38 520.59 L-17.75 518.19 L-11.25 515.8 L-5.21 513.53 L0 511.5 L4.47 509.7 L8.55 508.02 L12.35 506.42 L15.94 504.84 L19.41 503.26 L22.85 501.62 L26.35 499.88 L30 498 L33.75 496.01 L37.5 493.96 L41.25 491.84 L45 489.66 L48.75 487.39 L52.5 485.03 L56.25 482.57 L60 480 L63.75 477.34 L67.5 474.59 L71.25 471.76 L75 468.83 L78.75 465.8 L82.5 462.65 L86.25 459.39 L90 456 L93.81 452.43 L97.71 448.67 L101.65 444.77 L105.56 440.77 L109.41 436.71 L113.13 432.65 L116.68 428.63 L120 424.7 L123.07 420.78 L125.93 416.81 L128.62 412.83 L131.19 408.86 L133.67 404.96 L136.1 401.15 L138.53 397.49 L141 394 L143.46 390.7 L145.87 387.55 L148.23 384.54 L150.56 381.62 L152.89 378.79 L155.23 376.01 L157.59 373.25 L160 370.5 L162.38 367.77 L164.7 365.1 L166.99 362.48 L169.31 359.9 L171.72 357.35 L174.27 354.82 L177.01 352.31 L180 349.8 L183.27 347.26 L186.8 344.7 L190.52 342.13 L194.38 339.59 L198.31 337.11 L202.27 334.72 L206.18 332.44 L210 330.3 L213.75 328.29 L217.5 326.36 L221.25 324.53 L225 322.79 L228.75 321.16 L232.5 319.63 L236.25 318.21 L240 316.9 L243.78 315.72 L247.62 314.68 L251.47 313.76 L255.31 312.93 L259.12 312.19 L262.85 311.52 L266.49 310.89 L270 310.3 L273.43 309.76 L276.82 309.3 L280.15 308.9 L283.39 308.56 L286.52 308.27 L289.51 308.02 L292.35 307.8 L295 307.6 L297.52 307.44 L299.97 307.33 L302.29 307.26 L304.46 307.23 L306.44 307.22 L308.18 307.22 L309.64 307.22 L310.8 307.2" fill="none" stroke="rgba(10,6,14,0.6)" stroke-width="1.9"/>
<path d="M-40 526.4 L-37.57 526.32 L-34.4 526.22 L-30.62 526.1 L-26.4 525.97 L-21.88 525.83 L-17.2 525.68 L-12.53 525.52 L-8 525.35 L-3.77 525.17 L0 525 L3.14 524.85 L5.68 524.75 L7.85 524.67 L9.84 524.58 L11.88 524.48 L14.16 524.34 L16.91 524.13 L20.32 523.83 L24.61 523.43 L30 522.9 L36.57 522.22 L44.16 521.4 L52.59 520.47 L61.68 519.46 L71.25 518.38 L81.12 517.27 L91.11 516.15 L101.04 515.05 L110.73 513.99 L120 513 L129.14 512.04 L138.48 511.04 L147.94 510.04 L157.44 509.04 L166.88 508.06 L176.16 507.11 L185.2 506.22 L193.92 505.39 L202.22 504.64 L210 504 L217.31 503.46 L224.24 503.01 L230.83 502.64 L237.12 502.33 L243.12 502.07 L248.88 501.86 L254.41 501.68 L259.76 501.52 L264.94 501.36 L270 501.2 L274.99 501.05 L279.92 500.93 L284.73 500.84 L289.36 500.77 L293.75 500.73 L297.84 500.69 L301.57 500.67 L304.88 500.65 L307.71 500.63 L310 500.6" fill="none" stroke="rgba(10,6,14,0.6)" stroke-width="1.9"/>
<path d="M119.81 254.05 L124.85 254.11 L129.73 254.3 L134.45 254.61 L138.99 255.03 L143.39 255.57 L147.63 256.21 L151.73 256.95 L155.69 257.79 L159.53 258.72 L163.23 259.74 L166.82 260.85 L170.3 262.03 L173.68 263.28 L176.95 264.61 L180.13 266 L183.22 267.45 L186.24 268.95 L189.18 270.51 L192.05 272.11 L194.87 273.75 L197.63 275.42 L200.34 277.13 L203.01 278.86 L205.64 280.62 L208.25 282.39 L210.83 284.17 L213.4 285.96 L215.96 287.76 L218.52 289.55 L221.08 291.34 L223.65 293.11 L226.24 294.88 L228.86 296.62 L231.5 298.33 L234.18 300.02 L236.91 301.68 L239.68 303.3 L242.52 304.87 L245.41 306.4 L248.38 307.88 L251.42 309.31 L254.54 310.67 L257.76 311.97 L261.07 313.21 L264.48 314.37 L268.01 315.45 L271.65 316.45 L275.42 317.37 L279.31 318.19 L283.35 318.92 L287.52 319.55 L291.85 320.08 L296.34 320.5 L300.98 320.8 L305.8 320.99 L310.81 321.05" fill="none" stroke="rgba(10,6,14,0.74)" stroke-width="1.15"/>
<path d="M119.79 256.35 L124.8 256.41 L129.62 256.6 L134.26 256.9 L138.75 257.32 L143.08 257.85 L147.25 258.48 L151.29 259.21 L155.18 260.03 L158.95 260.95 L162.59 261.95 L166.12 263.03 L169.53 264.19 L172.84 265.43 L176.06 266.73 L179.18 268.09 L182.22 269.52 L185.19 271 L188.08 272.53 L190.92 274.1 L193.69 275.72 L196.42 277.38 L199.1 279.07 L201.74 280.78 L204.36 282.52 L206.95 284.29 L209.52 286.06 L212.08 287.85 L214.64 289.64 L217.2 291.44 L219.77 293.23 L222.35 295.01 L224.96 296.78 L227.59 298.54 L230.26 300.27 L232.97 301.98 L235.73 303.65 L238.55 305.29 L241.42 306.89 L244.36 308.45 L247.38 309.95 L250.47 311.4 L253.65 312.79 L256.92 314.12 L260.3 315.37 L263.78 316.55 L267.37 317.66 L271.07 318.68 L274.91 319.61 L278.87 320.45 L282.97 321.19 L287.21 321.83 L291.61 322.37 L296.15 322.79 L300.87 323.1 L305.75 323.29 L310.79 323.35" fill="none" stroke="rgba(10,6,14,0.74)" stroke-width="1.15"/>
<path d="M359.5 315.2 L369.85 315.2 L379.84 315.19 L389.47 315.17 L398.77 315.14 L407.75 315.11 L416.42 315.07 L424.79 315.03 L432.89 314.98 L440.71 314.92 L448.28 314.86 L455.6 314.8 L462.7 314.73 L469.58 314.65 L476.26 314.57 L482.75 314.49 L489.07 314.41 L495.23 314.32 L501.24 314.23 L507.11 314.13 L512.86 314.03 L518.51 313.93 L524.06 313.83 L529.53 313.73 L534.94 313.63 L540.29 313.52 L545.6 313.41 L550.88 313.31 L556.15 313.2 L561.42 313.09 L566.7 312.99 L572.01 312.88 L577.36 312.77 L582.77 312.67 L588.24 312.57 L593.79 312.47 L599.44 312.37 L605.19 312.27 L611.06 312.17 L617.07 312.08 L623.23 311.99 L629.55 311.91 L636.04 311.82 L642.72 311.75 L649.6 311.67 L656.7 311.6 L664.02 311.54 L671.59 311.48 L679.41 311.42 L687.51 311.37 L695.88 311.33 L704.55 311.29 L713.53 311.26 L722.83 311.23 L732.46 311.21 L742.45 311.2 L752.8 311.2" fill="none" stroke="rgba(10,6,14,0.6)" stroke-width="1.9"/>
<path d="M504 334.55 L507.93 334.55 L511.73 334.57 L515.39 334.59 L518.93 334.61 L522.34 334.65 L525.64 334.69 L528.82 334.74 L531.9 334.79 L534.87 334.85 L537.75 334.92 L540.53 334.99 L543.23 335.06 L545.84 335.14 L548.38 335.23 L550.85 335.32 L553.25 335.41 L555.59 335.51 L557.88 335.61 L560.11 335.71 L562.3 335.82 L564.44 335.93 L566.55 336.04 L568.63 336.15 L570.69 336.26 L572.72 336.38 L574.74 336.49 L576.75 336.61 L578.75 336.73 L580.75 336.84 L582.76 336.96 L584.78 337.07 L586.81 337.19 L588.87 337.3 L590.95 337.41 L593.06 337.52 L595.2 337.63 L597.39 337.74 L599.62 337.84 L601.91 337.94 L604.25 338.04 L606.65 338.13 L609.12 338.22 L611.66 338.31 L614.27 338.39 L616.97 338.46 L619.75 338.53 L622.63 338.6 L625.6 338.66 L628.68 338.71 L631.86 338.76 L635.16 338.8 L638.57 338.84 L642.11 338.86 L645.77 338.88 L649.57 338.9 L653.5 338.9" fill="none" stroke="rgba(10,6,14,0.6)" stroke-width="1.9"/>
<path d="M505 358.75 L508.91 358.75 L512.68 358.73 L516.32 358.71 L519.83 358.69 L523.22 358.65 L526.49 358.61 L529.65 358.56 L532.71 358.51 L535.66 358.45 L538.52 358.38 L541.29 358.31 L543.97 358.24 L546.56 358.16 L549.09 358.07 L551.54 357.98 L553.92 357.89 L556.25 357.79 L558.52 357.69 L560.73 357.59 L562.91 357.48 L565.04 357.37 L567.13 357.26 L569.2 357.15 L571.24 357.04 L573.26 356.92 L575.27 356.81 L577.26 356.69 L579.25 356.57 L581.24 356.46 L583.23 356.34 L585.24 356.23 L587.26 356.11 L589.3 356 L591.37 355.89 L593.46 355.78 L595.59 355.67 L597.77 355.56 L599.98 355.46 L602.25 355.36 L604.58 355.26 L606.96 355.17 L609.41 355.08 L611.94 354.99 L614.53 354.91 L617.21 354.84 L619.98 354.77 L622.84 354.7 L625.79 354.64 L628.85 354.59 L632.01 354.54 L635.28 354.5 L638.67 354.46 L642.18 354.44 L645.82 354.42 L649.59 354.4 L653.5 354.4" fill="none" stroke="rgba(10,6,14,0.6)" stroke-width="1.9"/>
<path d="M703.2 346.4 L704.51 346.38 L705.76 346.32 L706.98 346.22 L708.15 346.09 L709.29 345.93 L710.38 345.73 L711.43 345.49 L712.45 345.23 L713.44 344.94 L714.4 344.62 L715.32 344.28 L716.21 343.91 L717.08 343.52 L717.93 343.1 L718.74 342.67 L719.54 342.22 L720.32 341.75 L721.07 341.26 L721.82 340.76 L722.54 340.25 L723.25 339.72 L723.95 339.19 L724.64 338.65 L725.32 338.1 L726 337.54 L726.67 336.98 L727.34 336.41 L728 335.85 L728.66 335.29 L729.33 334.72 L730 334.16 L730.68 333.6 L731.36 333.05 L732.05 332.51 L732.75 331.98 L733.46 331.45 L734.18 330.94 L734.93 330.44 L735.68 329.95 L736.46 329.48 L737.26 329.03 L738.08 328.6 L738.92 328.18 L739.79 327.79 L740.68 327.42 L741.6 327.08 L742.56 326.76 L743.55 326.47 L744.57 326.21 L745.62 325.97 L746.71 325.77 L747.85 325.61 L749.02 325.48 L750.24 325.38 L751.49 325.32 L752.8 325.3" fill="none" stroke="rgba(10,6,14,0.6)" stroke-width="1.9"/>
<path d="M802.6 318.7 L804.85 318.78 L807.02 319.01 L809.12 319.38 L811.14 319.89 L813.09 320.54 L814.97 321.32 L816.79 322.22 L818.55 323.24 L820.25 324.37 L821.9 325.6 L823.49 326.94 L825.03 328.37 L826.53 329.89 L827.98 331.5 L829.39 333.18 L830.77 334.94 L832.11 336.76 L833.41 338.65 L834.69 340.59 L835.94 342.58 L837.17 344.61 L838.37 346.69 L839.56 348.8 L840.74 350.93 L841.9 353.09 L843.06 355.27 L844.2 357.46 L845.35 359.65 L846.5 361.84 L847.64 364.03 L848.8 366.21 L849.96 368.37 L851.14 370.5 L852.33 372.61 L853.53 374.69 L854.76 376.72 L856.01 378.71 L857.29 380.65 L858.59 382.54 L859.93 384.36 L861.31 386.12 L862.72 387.8 L864.17 389.41 L865.67 390.93 L867.21 392.36 L868.8 393.7 L870.45 394.93 L872.15 396.06 L873.91 397.08 L875.73 397.98 L877.61 398.76 L879.56 399.41 L881.58 399.92 L883.68 400.29 L885.85 400.52 L888.1 400.6" fill="none" stroke="rgba(10,6,14,0.6)" stroke-width="1.9"/>
<path d="M504 398.75 L507.93 398.75 L511.73 398.76 L515.39 398.78 L518.93 398.8 L522.34 398.83 L525.64 398.87 L528.82 398.91 L531.9 398.95 L534.87 399 L537.75 399.06 L540.53 399.12 L543.23 399.18 L545.84 399.25 L548.38 399.32 L550.85 399.4 L553.25 399.47 L555.59 399.55 L557.88 399.64 L560.11 399.73 L562.3 399.81 L564.44 399.9 L566.55 400 L568.63 400.09 L570.69 400.19 L572.72 400.28 L574.74 400.38 L576.75 400.48 L578.75 400.57 L580.75 400.67 L582.76 400.77 L584.78 400.87 L586.81 400.96 L588.87 401.06 L590.95 401.15 L593.06 401.25 L595.2 401.34 L597.39 401.42 L599.62 401.51 L601.91 401.6 L604.25 401.68 L606.65 401.75 L609.12 401.83 L611.66 401.9 L614.27 401.97 L616.97 402.03 L619.75 402.09 L622.63 402.15 L625.6 402.2 L628.68 402.24 L631.86 402.28 L635.16 402.32 L638.57 402.35 L642.11 402.37 L645.77 402.39 L649.57 402.4 L653.5 402.4" fill="none" stroke="rgba(10,6,14,0.6)" stroke-width="1.9"/>
<path d="M505 422.4 L508.91 422.4 L512.68 422.39 L516.32 422.37 L519.83 422.34 L523.22 422.31 L526.49 422.27 L529.65 422.23 L532.71 422.18 L535.66 422.12 L538.52 422.06 L541.29 422 L543.97 421.93 L546.56 421.85 L549.09 421.77 L551.54 421.69 L553.92 421.61 L556.25 421.52 L558.52 421.43 L560.73 421.33 L562.91 421.23 L565.04 421.13 L567.13 421.03 L569.2 420.93 L571.24 420.83 L573.26 420.72 L575.27 420.61 L577.26 420.51 L579.25 420.4 L581.24 420.29 L583.23 420.19 L585.24 420.08 L587.26 419.97 L589.3 419.87 L591.37 419.77 L593.46 419.67 L595.59 419.57 L597.77 419.47 L599.98 419.37 L602.25 419.28 L604.58 419.19 L606.96 419.11 L609.41 419.02 L611.94 418.95 L614.53 418.87 L617.21 418.8 L619.98 418.74 L622.84 418.68 L625.79 418.62 L628.85 418.57 L632.01 418.53 L635.28 418.49 L638.67 418.46 L642.18 418.43 L645.82 418.41 L649.59 418.4 L653.5 418.4" fill="none" stroke="rgba(10,6,14,0.6)" stroke-width="1.9"/>
<path d="M703.2 410 L708.07 410.01 L712.76 410.03 L717.29 410.07 L721.66 410.13 L725.88 410.2 L729.96 410.29 L733.9 410.39 L737.7 410.5 L741.38 410.62 L744.94 410.76 L748.38 410.91 L751.72 411.06 L754.95 411.23 L758.09 411.41 L761.14 411.59 L764.11 411.78 L767.01 411.98 L769.83 412.19 L772.6 412.41 L775.3 412.62 L777.95 412.85 L780.56 413.08 L783.14 413.31 L785.68 413.54 L788.19 413.78 L790.69 414.02 L793.17 414.26 L795.65 414.5 L798.13 414.74 L800.61 414.98 L803.11 415.22 L805.62 415.46 L808.16 415.69 L810.74 415.92 L813.35 416.15 L816 416.38 L818.7 416.59 L821.47 416.81 L824.29 417.02 L827.19 417.22 L830.16 417.41 L833.21 417.59 L836.35 417.77 L839.58 417.94 L842.92 418.09 L846.36 418.24 L849.92 418.38 L853.6 418.5 L857.4 418.61 L861.34 418.71 L865.42 418.8 L869.64 418.87 L874.01 418.93 L878.54 418.97 L883.23 418.99 L888.1 419" fill="none" stroke="rgba(10,6,14,0.6)" stroke-width="1.9"/>
<path d="M358.3 508.4 L368.6 508.4 L378.53 508.38 L388.12 508.36 L397.37 508.33 L406.31 508.29 L414.93 508.24 L423.26 508.19 L431.31 508.13 L439.1 508.06 L446.62 507.99 L453.91 507.91 L460.97 507.82 L467.82 507.73 L474.47 507.63 L480.93 507.53 L487.21 507.43 L493.34 507.32 L499.32 507.21 L505.16 507.09 L510.88 506.97 L516.5 506.85 L522.02 506.73 L527.47 506.6 L532.84 506.47 L538.17 506.34 L543.45 506.21 L548.71 506.08 L553.95 505.95 L559.19 505.82 L564.45 505.69 L569.73 505.56 L575.06 505.43 L580.43 505.3 L585.88 505.17 L591.4 505.05 L597.02 504.93 L602.74 504.81 L608.58 504.69 L614.56 504.58 L620.69 504.47 L626.97 504.37 L633.43 504.27 L640.08 504.17 L646.93 504.08 L653.99 503.99 L661.28 503.91 L668.8 503.84 L676.59 503.77 L684.64 503.71 L692.97 503.66 L701.59 503.61 L710.53 503.57 L719.78 503.54 L729.37 503.52 L739.3 503.5 L749.6 503.5" fill="none" stroke="rgba(10,6,14,0.6)" stroke-width="1.9"/>
<path d="M503.3 534.35 L507.27 534.35 L511.1 534.35 L514.79 534.35 L518.36 534.35 L521.8 534.34 L525.12 534.34 L528.34 534.34 L531.44 534.34 L534.44 534.33 L537.34 534.33 L540.15 534.32 L542.87 534.32 L545.51 534.32 L548.07 534.31 L550.56 534.31 L552.98 534.3 L555.34 534.29 L557.64 534.29 L559.9 534.28 L562.1 534.28 L564.27 534.27 L566.4 534.26 L568.49 534.26 L570.57 534.25 L572.62 534.25 L574.65 534.24 L576.68 534.23 L578.7 534.23 L580.72 534.22 L582.75 534.21 L584.78 534.2 L586.83 534.2 L588.91 534.19 L591 534.19 L593.13 534.18 L595.3 534.17 L597.5 534.17 L599.76 534.16 L602.06 534.16 L604.42 534.15 L606.84 534.14 L609.33 534.14 L611.89 534.13 L614.53 534.13 L617.25 534.13 L620.06 534.12 L622.96 534.12 L625.96 534.11 L629.06 534.11 L632.28 534.11 L635.6 534.11 L639.04 534.1 L642.61 534.1 L646.3 534.1 L650.13 534.1 L654.1 534.1" fill="none" stroke="rgba(10,6,14,0.6)" stroke-width="1.9"/>
<path d="M505 556.75 L508.92 556.74 L512.71 556.72 L516.36 556.69 L519.89 556.65 L523.29 556.6 L526.58 556.53 L529.75 556.46 L532.82 556.38 L535.79 556.28 L538.65 556.18 L541.43 556.07 L544.12 555.95 L546.73 555.83 L549.26 555.7 L551.73 555.56 L554.12 555.41 L556.45 555.26 L558.73 555.11 L560.96 554.95 L563.14 554.78 L565.28 554.61 L567.39 554.44 L569.46 554.27 L571.51 554.09 L573.54 553.92 L575.55 553.74 L577.55 553.56 L579.55 553.38 L581.55 553.19 L583.55 553.01 L585.56 552.83 L587.59 552.66 L589.64 552.48 L591.71 552.31 L593.82 552.14 L595.96 551.97 L598.14 551.8 L600.37 551.64 L602.65 551.49 L604.98 551.34 L607.37 551.19 L609.84 551.05 L612.37 550.92 L614.98 550.8 L617.67 550.68 L620.45 550.57 L623.31 550.47 L626.28 550.37 L629.35 550.29 L632.52 550.22 L635.81 550.15 L639.21 550.1 L642.74 550.06 L646.39 550.03 L650.18 550.01 L654.1 550" fill="none" stroke="rgba(10,6,14,0.6)" stroke-width="1.9"/>
<path d="M704.1 541.6 L705.3 541.58 L706.45 541.51 L707.57 541.4 L708.64 541.24 L709.68 541.05 L710.68 540.82 L711.65 540.55 L712.59 540.25 L713.49 539.91 L714.37 539.54 L715.22 539.15 L716.04 538.72 L716.83 538.27 L717.61 537.79 L718.36 537.29 L719.09 536.76 L719.8 536.22 L720.5 535.66 L721.18 535.08 L721.84 534.49 L722.5 533.88 L723.14 533.26 L723.77 532.63 L724.4 532 L725.01 531.35 L725.63 530.7 L726.24 530.05 L726.85 529.4 L727.46 528.75 L728.07 528.1 L728.69 527.45 L729.3 526.8 L729.93 526.17 L730.56 525.54 L731.2 524.92 L731.86 524.31 L732.52 523.72 L733.2 523.14 L733.9 522.58 L734.61 522.04 L735.34 521.51 L736.09 521.01 L736.87 520.53 L737.66 520.08 L738.48 519.65 L739.33 519.26 L740.21 518.89 L741.11 518.55 L742.05 518.25 L743.02 517.98 L744.02 517.75 L745.06 517.56 L746.13 517.4 L747.25 517.29 L748.4 517.22 L749.6 517.2" fill="none" stroke="rgba(10,6,14,0.6)" stroke-width="1.9"/>
<path d="M799.2 510.5 L801.64 510.56 L803.99 510.72 L806.26 510.98 L808.45 511.35 L810.56 511.81 L812.6 512.37 L814.57 513.01 L816.48 513.73 L818.32 514.54 L820.1 515.42 L821.83 516.37 L823.5 517.4 L825.12 518.48 L826.69 519.62 L828.22 520.83 L829.71 522.08 L831.16 523.38 L832.57 524.72 L833.95 526.11 L835.31 527.53 L836.64 528.98 L837.95 530.46 L839.23 531.96 L840.51 533.49 L841.77 535.03 L843.02 536.58 L844.26 538.14 L845.5 539.7 L846.74 541.26 L847.98 542.82 L849.23 544.37 L850.49 545.91 L851.77 547.44 L853.05 548.94 L854.36 550.42 L855.69 551.87 L857.05 553.29 L858.43 554.68 L859.84 556.02 L861.29 557.32 L862.78 558.57 L864.31 559.77 L865.88 560.92 L867.5 562 L869.17 563.03 L870.9 563.98 L872.68 564.86 L874.52 565.67 L876.43 566.39 L878.4 567.03 L880.44 567.59 L882.55 568.05 L884.74 568.42 L887.01 568.68 L889.36 568.84 L891.8 568.9" fill="none" stroke="rgba(10,6,14,0.6)" stroke-width="1.9"/>
<path d="M503.3 600.55 L507.29 600.55 L511.13 600.55 L514.85 600.55 L518.43 600.54 L521.89 600.54 L525.23 600.53 L528.45 600.53 L531.57 600.52 L534.58 600.51 L537.5 600.5 L540.32 600.49 L543.05 600.49 L545.7 600.47 L548.28 600.46 L550.78 600.45 L553.21 600.44 L555.58 600.43 L557.9 600.42 L560.16 600.4 L562.38 600.39 L564.55 600.38 L566.69 600.36 L568.8 600.35 L570.88 600.33 L572.94 600.32 L574.99 600.3 L577.02 600.29 L579.05 600.27 L581.08 600.26 L583.11 600.25 L585.16 600.23 L587.22 600.22 L589.3 600.2 L591.41 600.19 L593.55 600.17 L595.72 600.16 L597.94 600.15 L600.2 600.13 L602.52 600.12 L604.89 600.11 L607.32 600.1 L609.82 600.09 L612.4 600.08 L615.05 600.06 L617.78 600.06 L620.6 600.05 L623.52 600.04 L626.53 600.03 L629.65 600.02 L632.87 600.02 L636.21 600.01 L639.67 600.01 L643.25 600 L646.97 600 L650.81 600 L654.8 600" fill="none" stroke="rgba(10,6,14,0.6)" stroke-width="1.9"/>
<path d="M504.3 623.25 L508.26 623.24 L512.08 623.22 L515.77 623.19 L519.33 623.14 L522.76 623.08 L526.08 623.01 L529.29 622.93 L532.38 622.83 L535.38 622.73 L538.27 622.61 L541.07 622.49 L543.79 622.36 L546.42 622.22 L548.98 622.07 L551.46 621.92 L553.88 621.75 L556.24 621.59 L558.54 621.41 L560.78 621.23 L562.99 621.05 L565.15 620.86 L567.27 620.67 L569.36 620.48 L571.43 620.28 L573.48 620.08 L575.51 619.88 L577.53 619.68 L579.55 619.48 L581.57 619.27 L583.59 619.07 L585.62 618.87 L587.67 618.67 L589.74 618.47 L591.83 618.28 L593.95 618.09 L596.11 617.9 L598.32 617.72 L600.56 617.54 L602.86 617.36 L605.22 617.2 L607.64 617.03 L610.12 616.88 L612.68 616.73 L615.31 616.59 L618.03 616.46 L620.83 616.34 L623.72 616.22 L626.72 616.12 L629.81 616.02 L633.02 615.94 L636.34 615.87 L639.77 615.81 L643.33 615.76 L647.02 615.73 L650.84 615.71 L654.8 615.7" fill="none" stroke="rgba(10,6,14,0.6)" stroke-width="1.9"/>
<path d="M705 608.1 L709.92 608.08 L714.66 608.02 L719.24 607.93 L723.65 607.8 L727.92 607.64 L732.03 607.45 L736.01 607.22 L739.85 606.97 L743.57 606.69 L747.16 606.38 L750.64 606.05 L754.01 605.69 L757.28 605.31 L760.46 604.91 L763.54 604.49 L766.54 604.06 L769.46 603.6 L772.32 603.13 L775.11 602.65 L777.84 602.15 L780.52 601.65 L783.16 601.13 L785.76 600.6 L788.32 600.07 L790.87 599.53 L793.39 598.99 L795.9 598.45 L798.4 597.9 L800.9 597.35 L803.41 596.81 L805.93 596.27 L808.48 595.73 L811.04 595.2 L813.64 594.67 L816.28 594.15 L818.96 593.65 L821.69 593.15 L824.48 592.67 L827.34 592.2 L830.26 591.74 L833.26 591.31 L836.34 590.89 L839.52 590.49 L842.79 590.11 L846.16 589.75 L849.64 589.42 L853.23 589.11 L856.95 588.83 L860.79 588.58 L864.77 588.35 L868.88 588.16 L873.15 588 L877.56 587.87 L882.14 587.78 L886.88 587.72 L891.8 587.7" fill="none" stroke="rgba(10,6,14,0.6)" stroke-width="1.9"/>
<path d="M942.4 568.9 L948.13 568.8 L953.65 568.5 L958.98 568.02 L964.13 567.35 L969.1 566.51 L973.89 565.5 L978.52 564.33 L983 563.01 L987.33 561.55 L991.52 559.94 L995.57 558.21 L999.5 556.35 L1003.3 554.37 L1007 552.29 L1010.59 550.11 L1014.09 547.83 L1017.49 545.46 L1020.82 543.01 L1024.07 540.49 L1027.25 537.91 L1030.38 535.27 L1033.45 532.57 L1036.47 529.84 L1039.46 527.06 L1042.42 524.26 L1045.36 521.43 L1048.28 518.6 L1051.2 515.75 L1054.12 512.9 L1057.04 510.07 L1059.98 507.24 L1062.94 504.44 L1065.93 501.66 L1068.95 498.93 L1072.03 496.23 L1075.15 493.59 L1078.33 491.01 L1081.58 488.49 L1084.91 486.04 L1088.31 483.67 L1091.81 481.39 L1095.4 479.21 L1099.1 477.13 L1102.9 475.15 L1106.83 473.29 L1110.88 471.56 L1115.07 469.95 L1119.4 468.49 L1123.88 467.17 L1128.51 466 L1133.3 464.99 L1138.27 464.15 L1143.42 463.48 L1148.75 463 L1154.27 462.7 L1160 462.6" fill="none" stroke="url(#gWireMix)" stroke-width="1.9"/>
<path d="M1209.73 476.25 L1218.89 476.49 L1227.1 477.2 L1234.37 478.37 L1240.73 479.97 L1246.22 482.02 L1250.87 484.49 L1254.72 487.37 L1257.79 490.66 L1260.09 494.32 L1261.65 498.32 L1262.5 502.62 L1262.7 507.18 L1262.28 512 L1261.3 517.04 L1259.8 522.31 L1257.82 527.78 L1255.4 533.45 L1252.57 539.29 L1249.38 545.3 L1245.85 551.45 L1242.03 557.74 L1237.96 564.15 L1233.66 570.65 L1229.19 577.24 L1224.56 583.89 L1219.83 590.59 L1215.02 597.32 L1210.18 604.07 L1205.35 610.82 L1200.55 617.54 L1195.82 624.23 L1191.21 630.87 L1186.75 637.43 L1182.47 643.91 L1178.42 650.27 L1174.63 656.52 L1171.14 662.61 L1167.98 668.55 L1165.19 674.31 L1162.82 679.86 L1160.89 685.2 L1159.43 690.29 L1158.5 695.13 L1158.1 699.67 L1158.28 703.92 L1159.06 707.84 L1160.46 711.45 L1162.53 714.74 L1165.31 717.71 L1168.85 720.37 L1173.22 722.68 L1178.45 724.63 L1184.59 726.18 L1191.67 727.32 L1199.73 728.01 L1208.83 728.25" fill="none" stroke="rgba(28,4,72,0.72)" stroke-width="1.15"/>
<path d="M1209.67 478.55 L1218.77 478.79 L1226.83 479.48 L1233.91 480.62 L1240.05 482.17 L1245.28 484.12 L1249.65 486.43 L1253.19 489.09 L1255.97 492.06 L1258.04 495.35 L1259.44 498.96 L1260.22 502.88 L1260.4 507.13 L1260 511.67 L1259.07 516.51 L1257.61 521.6 L1255.68 526.94 L1253.31 532.49 L1250.52 538.25 L1247.36 544.19 L1243.87 550.28 L1240.08 556.53 L1236.03 562.89 L1231.75 569.37 L1227.29 575.93 L1222.68 582.57 L1217.95 589.26 L1213.15 595.98 L1208.32 602.73 L1203.48 609.48 L1198.67 616.21 L1193.94 622.91 L1189.31 629.56 L1184.84 636.15 L1180.54 642.65 L1176.47 649.06 L1172.65 655.35 L1169.12 661.5 L1165.93 667.51 L1163.1 673.35 L1160.68 679.02 L1158.7 684.49 L1157.2 689.76 L1156.22 694.8 L1155.8 699.62 L1156 704.18 L1156.85 708.48 L1158.41 712.48 L1160.71 716.14 L1163.78 719.43 L1167.63 722.31 L1172.28 724.78 L1177.77 726.83 L1184.13 728.43 L1191.4 729.6 L1199.61 730.31 L1208.77 730.55" fill="none" stroke="rgba(28,4,72,0.72)" stroke-width="1.15"/>
<path d="M1088.1 799.75 L1088.82 799.75 L1089.51 799.75 L1090.17 799.75 L1090.82 799.74 L1091.44 799.74 L1092.04 799.73 L1092.62 799.73 L1093.18 799.72 L1093.72 799.71 L1094.24 799.7 L1094.75 799.69 L1095.24 799.69 L1095.71 799.67 L1096.17 799.66 L1096.62 799.65 L1097.06 799.64 L1097.49 799.63 L1097.9 799.62 L1098.31 799.6 L1098.71 799.59 L1099.1 799.58 L1099.48 799.56 L1099.86 799.55 L1100.23 799.53 L1100.6 799.52 L1100.97 799.5 L1101.34 799.49 L1101.7 799.48 L1102.06 799.46 L1102.43 799.45 L1102.8 799.43 L1103.17 799.42 L1103.54 799.4 L1103.92 799.39 L1104.3 799.37 L1104.69 799.36 L1105.09 799.35 L1105.5 799.33 L1105.91 799.32 L1106.34 799.31 L1106.78 799.3 L1107.22 799.29 L1107.69 799.28 L1108.16 799.26 L1108.65 799.26 L1109.16 799.25 L1109.68 799.24 L1110.22 799.23 L1110.78 799.22 L1111.36 799.22 L1111.96 799.21 L1112.58 799.21 L1113.23 799.2 L1113.89 799.2 L1114.58 799.2 L1115.3 799.2" fill="none" stroke="rgba(28,4,72,0.66)" stroke-width="1.9"/>
<path d="M1165.46 784.75 L1166.56 784.71 L1167.57 784.6 L1168.55 784.42 L1169.49 784.17 L1170.4 783.85 L1171.28 783.47 L1172.13 783.03 L1172.95 782.53 L1173.76 781.97 L1174.54 781.36 L1175.3 780.69 L1176.04 779.97 L1176.77 779.2 L1177.47 778.38 L1178.16 777.52 L1178.83 776.62 L1179.49 775.68 L1180.14 774.71 L1180.77 773.7 L1181.39 772.66 L1182.01 771.6 L1182.61 770.52 L1183.2 769.41 L1183.79 768.29 L1184.38 767.15 L1184.96 766 L1185.54 764.85 L1186.12 763.69 L1186.7 762.52 L1187.28 761.36 L1187.87 760.2 L1188.46 759.05 L1189.06 757.91 L1189.67 756.78 L1190.29 755.67 L1190.92 754.57 L1191.57 753.5 L1192.23 752.45 L1192.91 751.42 L1193.6 750.43 L1194.32 749.47 L1195.06 748.55 L1195.83 747.66 L1196.62 746.82 L1197.44 746.02 L1198.29 745.27 L1199.17 744.58 L1200.09 743.94 L1201.05 743.36 L1202.04 742.85 L1203.07 742.4 L1204.14 742.03 L1205.25 741.74 L1206.39 741.52 L1207.58 741.39 L1208.76 741.35" fill="none" stroke="rgba(28,4,72,0.72)" stroke-width="1.15"/>
<path d="M1165.54 787.05 L1166.72 787.01 L1167.91 786.88 L1169.05 786.66 L1170.16 786.37 L1171.23 786 L1172.26 785.55 L1173.25 785.04 L1174.21 784.46 L1175.13 783.82 L1176.01 783.13 L1176.86 782.38 L1177.68 781.58 L1178.47 780.74 L1179.24 779.85 L1179.98 778.93 L1180.7 777.97 L1181.39 776.98 L1182.07 775.95 L1182.73 774.9 L1183.38 773.83 L1184.01 772.73 L1184.63 771.62 L1185.24 770.49 L1185.84 769.35 L1186.43 768.2 L1187.02 767.04 L1187.6 765.88 L1188.18 764.71 L1188.76 763.55 L1189.34 762.4 L1189.92 761.25 L1190.51 760.11 L1191.1 758.99 L1191.69 757.88 L1192.29 756.8 L1192.91 755.74 L1193.53 754.7 L1194.16 753.69 L1194.81 752.72 L1195.47 751.78 L1196.14 750.88 L1196.83 750.02 L1197.53 749.2 L1198.26 748.43 L1199 747.71 L1199.76 747.04 L1200.54 746.43 L1201.35 745.87 L1202.17 745.37 L1203.02 744.93 L1203.9 744.55 L1204.81 744.23 L1205.75 743.98 L1206.73 743.8 L1207.74 743.69 L1208.84 743.65" fill="none" stroke="rgba(28,4,72,0.72)" stroke-width="1.15"/>
<path d="M1258.17 741.35 L1265.22 741.17 L1271.66 740.62 L1277.53 739.73 L1282.85 738.51 L1287.65 736.98 L1291.95 735.16 L1295.77 733.05 L1299.15 730.67 L1302.1 728.04 L1304.65 725.16 L1306.83 722.05 L1308.66 718.7 L1310.17 715.14 L1311.36 711.37 L1312.27 707.4 L1312.9 703.25 L1313.29 698.92 L1313.44 694.44 L1313.38 689.81 L1313.12 685.06 L1312.7 680.19 L1312.12 675.22 L1311.42 670.16 L1310.61 665.03 L1309.72 659.85 L1308.75 654.61 L1307.75 649.35 L1306.72 644.07 L1305.69 638.79 L1304.69 633.51 L1303.72 628.26 L1302.82 623.04 L1302 617.88 L1301.29 612.77 L1300.71 607.74 L1300.28 602.8 L1300.03 597.96 L1299.96 593.24 L1300.12 588.64 L1300.51 584.18 L1301.17 579.87 L1302.12 575.73 L1303.37 571.76 L1304.96 568 L1306.91 564.44 L1309.25 561.11 L1311.98 558.04 L1315.13 555.23 L1318.71 552.7 L1322.75 550.47 L1327.25 548.56 L1332.25 546.97 L1337.75 545.71 L1343.78 544.79 L1350.35 544.24 L1357.47 544.05" fill="none" stroke="rgba(28,4,72,0.72)" stroke-width="1.15"/>
<path d="M1258.23 743.65 L1265.35 743.46 L1271.92 742.91 L1277.95 741.99 L1283.45 740.73 L1288.45 739.14 L1292.95 737.23 L1296.99 735 L1300.57 732.47 L1303.72 729.66 L1306.45 726.59 L1308.79 723.26 L1310.74 719.7 L1312.33 715.94 L1313.58 711.97 L1314.53 707.83 L1315.19 703.52 L1315.58 699.06 L1315.74 694.46 L1315.67 689.74 L1315.42 684.9 L1314.99 679.96 L1314.41 674.93 L1313.7 669.82 L1312.88 664.66 L1311.98 659.44 L1311.01 654.19 L1310.01 648.91 L1308.98 643.63 L1307.95 638.35 L1306.95 633.09 L1305.98 627.85 L1305.09 622.67 L1304.28 617.54 L1303.58 612.48 L1303 607.51 L1302.58 602.64 L1302.32 597.89 L1302.26 593.26 L1302.41 588.78 L1302.8 584.45 L1303.43 580.3 L1304.34 576.33 L1305.53 572.56 L1307.04 569 L1308.87 565.65 L1311.05 562.54 L1313.6 559.66 L1316.55 557.03 L1319.93 554.65 L1323.75 552.54 L1328.05 550.72 L1332.85 549.19 L1338.17 547.97 L1344.04 547.08 L1350.48 546.53 L1357.53 546.35" fill="none" stroke="rgba(28,4,72,0.72)" stroke-width="1.15"/>
<path d="M1408.09 531.05 L1411.84 531.03 L1415.45 530.98 L1418.93 530.89 L1422.29 530.78 L1425.54 530.63 L1428.67 530.45 L1431.69 530.25 L1434.61 530.01 L1437.43 529.75 L1440.16 529.47 L1442.8 529.17 L1445.36 528.84 L1447.85 528.49 L1450.25 528.13 L1452.6 527.74 L1454.87 527.34 L1457.09 526.93 L1459.26 526.49 L1461.38 526.05 L1463.45 525.6 L1465.49 525.13 L1467.5 524.66 L1469.47 524.17 L1471.43 523.69 L1473.36 523.19 L1475.28 522.69 L1477.2 522.19 L1479.11 521.69 L1481.02 521.18 L1482.94 520.68 L1484.86 520.18 L1486.81 519.68 L1488.77 519.19 L1490.77 518.71 L1492.79 518.23 L1494.84 517.76 L1496.94 517.3 L1499.08 516.85 L1501.27 516.42 L1503.52 516 L1505.82 515.59 L1508.19 515.2 L1510.62 514.83 L1513.13 514.48 L1515.72 514.15 L1518.39 513.84 L1521.14 513.56 L1523.99 513.3 L1526.94 513.06 L1529.99 512.85 L1533.15 512.67 L1536.41 512.52 L1539.8 512.41 L1543.3 512.32 L1546.94 512.27 L1550.69 512.25" fill="none" stroke="rgba(28,4,72,0.72)" stroke-width="1.15"/>
<path d="M1408.11 533.35 L1411.86 533.33 L1415.5 533.28 L1419 533.19 L1422.39 533.08 L1425.65 532.93 L1428.81 532.75 L1431.86 532.54 L1434.81 532.3 L1437.66 532.04 L1440.41 531.76 L1443.08 531.45 L1445.67 531.12 L1448.18 530.77 L1450.61 530.4 L1452.98 530.01 L1455.28 529.6 L1457.53 529.18 L1459.72 528.75 L1461.86 528.3 L1463.96 527.84 L1466.01 527.37 L1468.03 526.89 L1470.03 526.41 L1471.99 525.92 L1473.94 525.42 L1475.86 524.92 L1477.78 524.42 L1479.69 523.91 L1481.6 523.41 L1483.52 522.91 L1485.44 522.41 L1487.37 521.91 L1489.33 521.43 L1491.3 520.94 L1493.31 520.47 L1495.35 520 L1497.42 519.55 L1499.54 519.11 L1501.71 518.67 L1503.93 518.26 L1506.2 517.86 L1508.55 517.47 L1510.95 517.11 L1513.44 516.76 L1516 516.43 L1518.64 516.13 L1521.37 515.85 L1524.19 515.59 L1527.11 515.35 L1530.13 515.15 L1533.26 514.97 L1536.51 514.82 L1539.87 514.71 L1543.35 514.62 L1546.96 514.57 L1550.71 514.55" fill="none" stroke="rgba(28,4,72,0.72)" stroke-width="1.15"/>
<path d="M1513.1 535.3 L1514.09 535.29 L1515.04 535.27 L1515.97 535.24 L1516.85 535.19 L1517.71 535.13 L1518.54 535.06 L1519.34 534.98 L1520.12 534.88 L1520.86 534.78 L1521.59 534.67 L1522.29 534.55 L1522.97 534.41 L1523.62 534.28 L1524.26 534.13 L1524.88 533.97 L1525.49 533.81 L1526.08 533.65 L1526.65 533.47 L1527.21 533.3 L1527.76 533.11 L1528.3 532.93 L1528.83 532.74 L1529.36 532.54 L1529.87 532.35 L1530.38 532.15 L1530.89 531.95 L1531.4 531.75 L1531.9 531.55 L1532.4 531.35 L1532.91 531.15 L1533.42 530.95 L1533.93 530.75 L1534.44 530.56 L1534.97 530.36 L1535.5 530.17 L1536.04 529.99 L1536.59 529.8 L1537.15 529.63 L1537.72 529.45 L1538.31 529.29 L1538.92 529.13 L1539.54 528.97 L1540.18 528.82 L1540.83 528.69 L1541.51 528.55 L1542.21 528.43 L1542.94 528.32 L1543.68 528.22 L1544.46 528.12 L1545.26 528.04 L1546.09 527.97 L1546.95 527.91 L1547.83 527.86 L1548.76 527.83 L1549.71 527.81 L1550.7 527.8" fill="none" stroke="rgba(28,4,72,0.66)" stroke-width="1.9"/>
<path d="M1513.1 535.3 L1517.63 535.25 L1522.01 535.11 L1526.23 534.88 L1530.3 534.56 L1534.24 534.16 L1538.04 533.68 L1541.7 533.12 L1545.25 532.49 L1548.68 531.79 L1551.99 531.02 L1555.2 530.19 L1558.31 529.3 L1561.32 528.36 L1564.25 527.36 L1567.1 526.32 L1569.86 525.23 L1572.56 524.1 L1575.19 522.93 L1577.77 521.72 L1580.29 520.49 L1582.76 519.23 L1585.19 517.94 L1587.59 516.63 L1589.96 515.31 L1592.3 513.97 L1594.63 512.62 L1596.94 511.26 L1599.25 509.9 L1601.56 508.54 L1603.87 507.18 L1606.2 505.83 L1608.54 504.49 L1610.91 503.17 L1613.31 501.86 L1615.74 500.57 L1618.21 499.31 L1620.73 498.08 L1623.31 496.87 L1625.94 495.7 L1628.64 494.57 L1631.4 493.48 L1634.25 492.44 L1637.18 491.44 L1640.19 490.5 L1643.3 489.61 L1646.51 488.78 L1649.82 488.01 L1653.25 487.31 L1656.8 486.68 L1660.46 486.12 L1664.26 485.64 L1668.2 485.24 L1672.27 484.92 L1676.49 484.69 L1680.87 484.55 L1685.4 484.5" fill="none" stroke="rgba(28,4,72,0.66)" stroke-width="1.9"/>
<path d="M1600.87 515.15 L1603.12 515.08 L1605.09 514.89 L1606.82 514.58 L1608.31 514.16 L1609.58 513.64 L1610.64 513.04 L1611.5 512.36 L1612.2 511.6 L1612.74 510.77 L1613.15 509.85 L1613.44 508.83 L1613.59 507.7 L1613.63 506.49 L1613.54 505.17 L1613.33 503.77 L1613.02 502.3 L1612.6 500.75 L1612.08 499.14 L1611.48 497.47 L1610.79 495.75 L1610.04 493.98 L1609.22 492.18 L1608.35 490.34 L1607.43 488.47 L1606.47 486.59 L1605.49 484.68 L1604.49 482.76 L1603.48 480.83 L1602.47 478.91 L1601.47 476.98 L1600.48 475.06 L1599.51 473.15 L1598.58 471.26 L1597.7 469.39 L1596.86 467.55 L1596.08 465.73 L1595.37 463.95 L1594.74 462.21 L1594.2 460.5 L1593.75 458.85 L1593.4 457.23 L1593.18 455.67 L1593.07 454.16 L1593.12 452.71 L1593.31 451.31 L1593.68 449.98 L1594.24 448.73 L1594.99 447.58 L1595.94 446.55 L1597.08 445.65 L1598.42 444.88 L1599.95 444.26 L1601.67 443.78 L1603.6 443.43 L1605.74 443.22 L1608.07 443.15" fill="none" stroke="rgba(28,4,72,0.72)" stroke-width="1.15"/>
<path d="M1600.93 517.45 L1603.26 517.38 L1605.4 517.17 L1607.33 516.82 L1609.05 516.34 L1610.58 515.72 L1611.92 514.95 L1613.06 514.05 L1614.01 513.02 L1614.76 511.87 L1615.32 510.62 L1615.69 509.29 L1615.88 507.89 L1615.93 506.44 L1615.82 504.93 L1615.6 503.37 L1615.25 501.75 L1614.8 500.1 L1614.26 498.39 L1613.63 496.65 L1612.92 494.87 L1612.14 493.05 L1611.3 491.21 L1610.42 489.34 L1609.49 487.45 L1608.52 485.54 L1607.53 483.62 L1606.53 481.69 L1605.52 479.77 L1604.51 477.84 L1603.51 475.92 L1602.53 474.01 L1601.57 472.13 L1600.65 470.26 L1599.78 468.42 L1598.96 466.62 L1598.21 464.85 L1597.52 463.13 L1596.92 461.46 L1596.4 459.85 L1595.98 458.3 L1595.67 456.83 L1595.46 455.43 L1595.37 454.11 L1595.41 452.9 L1595.56 451.77 L1595.85 450.75 L1596.26 449.83 L1596.8 449 L1597.5 448.24 L1598.36 447.56 L1599.42 446.96 L1600.69 446.44 L1602.18 446.02 L1603.91 445.71 L1605.88 445.52 L1608.13 445.45" fill="none" stroke="rgba(28,4,72,0.72)" stroke-width="1.15"/>
<path d="M1600.89 515.15 L1603.1 515.13 L1605.23 515.08 L1607.28 514.99 L1609.26 514.87 L1611.17 514.72 L1613.01 514.55 L1614.78 514.34 L1616.5 514.1 L1618.16 513.84 L1619.76 513.56 L1621.31 513.25 L1622.81 512.92 L1624.27 512.57 L1625.69 512.21 L1627.06 511.82 L1628.4 511.42 L1629.7 511 L1630.97 510.56 L1632.22 510.12 L1633.44 509.66 L1634.64 509.19 L1635.82 508.71 L1636.98 508.22 L1638.13 507.73 L1639.28 507.23 L1640.41 506.72 L1641.55 506.21 L1642.68 505.7 L1643.81 505.19 L1644.95 504.68 L1646.09 504.17 L1647.25 503.66 L1648.42 503.16 L1649.61 502.66 L1650.81 502.18 L1652.04 501.69 L1653.29 501.22 L1654.57 500.77 L1655.88 500.32 L1657.22 499.89 L1658.6 499.47 L1660.01 499.07 L1661.47 498.69 L1662.97 498.33 L1664.52 498 L1666.11 497.68 L1667.76 497.39 L1669.47 497.12 L1671.23 496.88 L1673.05 496.67 L1674.93 496.48 L1676.88 496.33 L1678.9 496.21 L1680.99 496.12 L1683.16 496.07 L1685.39 496.05" fill="none" stroke="rgba(28,4,72,0.72)" stroke-width="1.15"/>
<path d="M1600.91 517.45 L1603.14 517.43 L1605.31 517.38 L1607.4 517.29 L1609.42 517.17 L1611.37 517.02 L1613.25 516.83 L1615.07 516.62 L1616.83 516.38 L1618.54 516.11 L1620.19 515.82 L1621.78 515.5 L1623.33 515.17 L1624.83 514.81 L1626.29 514.43 L1627.7 514.03 L1629.08 513.61 L1630.42 513.18 L1631.73 512.73 L1633.01 512.28 L1634.26 511.81 L1635.49 511.32 L1636.69 510.84 L1637.88 510.34 L1639.05 509.84 L1640.21 509.33 L1641.35 508.82 L1642.49 508.31 L1643.62 507.8 L1644.75 507.29 L1645.89 506.78 L1647.02 506.27 L1648.17 505.77 L1649.32 505.28 L1650.48 504.79 L1651.66 504.31 L1652.86 503.84 L1654.08 503.38 L1655.33 502.94 L1656.6 502.5 L1657.9 502.08 L1659.24 501.68 L1660.61 501.29 L1662.03 500.93 L1663.49 500.58 L1664.99 500.25 L1666.54 499.94 L1668.14 499.66 L1669.8 499.4 L1671.52 499.16 L1673.29 498.95 L1675.13 498.78 L1677.04 498.63 L1679.02 498.51 L1681.07 498.42 L1683.2 498.37 L1685.41 498.35" fill="none" stroke="rgba(28,4,72,0.72)" stroke-width="1.15"/>
<path d="M1600.89 537.35 L1603.1 537.32 L1605.21 537.25 L1607.25 537.12 L1609.22 536.95 L1611.12 536.73 L1612.95 536.47 L1614.72 536.16 L1616.42 535.82 L1618.07 535.44 L1619.67 535.02 L1621.21 534.57 L1622.7 534.09 L1624.15 533.58 L1625.56 533.04 L1626.93 532.47 L1628.26 531.88 L1629.56 531.27 L1630.83 530.63 L1632.07 529.98 L1633.28 529.31 L1634.48 528.62 L1635.66 527.91 L1636.82 527.2 L1637.97 526.47 L1639.12 525.73 L1640.25 524.99 L1641.38 524.24 L1642.51 523.49 L1643.65 522.74 L1644.79 521.99 L1645.93 521.24 L1647.09 520.49 L1648.26 519.75 L1649.45 519.02 L1650.66 518.3 L1651.88 517.59 L1653.14 516.9 L1654.42 516.22 L1655.74 515.56 L1657.08 514.93 L1658.47 514.31 L1659.89 513.72 L1661.35 513.16 L1662.86 512.63 L1664.42 512.13 L1666.02 511.66 L1667.68 511.23 L1669.39 510.83 L1671.16 510.48 L1672.99 510.16 L1674.89 509.89 L1676.85 509.67 L1678.87 509.49 L1680.97 509.36 L1683.15 509.28 L1685.39 509.25" fill="none" stroke="rgba(28,4,72,0.72)" stroke-width="1.15"/>
<path d="M1600.91 539.65 L1603.15 539.62 L1605.33 539.54 L1607.43 539.41 L1609.45 539.23 L1611.41 539.01 L1613.31 538.74 L1615.14 538.42 L1616.91 538.07 L1618.62 537.67 L1620.28 537.24 L1621.88 536.77 L1623.44 536.27 L1624.95 535.74 L1626.41 535.18 L1627.83 534.59 L1629.22 533.97 L1630.56 533.34 L1631.88 532.68 L1633.16 532 L1634.42 531.31 L1635.64 530.6 L1636.85 529.88 L1638.04 529.15 L1639.21 528.41 L1640.37 527.66 L1641.51 526.91 L1642.65 526.16 L1643.79 525.41 L1644.92 524.66 L1646.05 523.91 L1647.18 523.17 L1648.33 522.43 L1649.48 521.7 L1650.64 520.99 L1651.82 520.28 L1653.02 519.59 L1654.23 518.92 L1655.47 518.27 L1656.74 517.63 L1658.04 517.02 L1659.37 516.43 L1660.74 515.86 L1662.15 515.32 L1663.6 514.81 L1665.09 514.33 L1666.63 513.88 L1668.23 513.46 L1669.88 513.08 L1671.58 512.74 L1673.35 512.43 L1675.18 512.17 L1677.08 511.95 L1679.05 511.78 L1681.09 511.65 L1683.2 511.58 L1685.41 511.55" fill="none" stroke="rgba(28,4,72,0.72)" stroke-width="1.15"/>
<path d="M1744.41 496.05 L1746.83 496.07 L1749.17 496.13 L1751.43 496.23 L1753.62 496.36 L1755.73 496.53 L1757.77 496.73 L1759.74 496.97 L1761.64 497.24 L1763.49 497.53 L1765.27 497.86 L1767 498.21 L1768.67 498.58 L1770.3 498.98 L1771.87 499.4 L1773.4 499.85 L1774.89 500.31 L1776.35 500.79 L1777.76 501.28 L1779.15 501.79 L1780.5 502.31 L1781.83 502.84 L1783.13 503.39 L1784.42 503.94 L1785.68 504.49 L1786.93 505.06 L1788.17 505.62 L1789.41 506.19 L1790.63 506.76 L1791.86 507.32 L1793.08 507.89 L1794.31 508.45 L1795.55 509.01 L1796.8 509.55 L1798.06 510.1 L1799.34 510.63 L1800.64 511.15 L1801.96 511.66 L1803.31 512.15 L1804.69 512.64 L1806.11 513.1 L1807.55 513.55 L1809.04 513.98 L1810.58 514.39 L1812.15 514.78 L1813.78 515.14 L1815.46 515.48 L1817.2 515.8 L1819 516.09 L1820.86 516.35 L1822.78 516.58 L1824.78 516.78 L1826.84 516.94 L1828.99 517.08 L1831.21 517.17 L1833.51 517.23 L1835.91 517.25" fill="none" stroke="rgba(28,4,72,0.72)" stroke-width="1.15"/>
<path d="M1744.39 498.35 L1746.79 498.37 L1749.09 498.43 L1751.31 498.52 L1753.46 498.66 L1755.52 498.82 L1757.52 499.02 L1759.44 499.25 L1761.3 499.51 L1763.1 499.8 L1764.84 500.12 L1766.52 500.46 L1768.15 500.82 L1769.72 501.21 L1771.26 501.62 L1772.75 502.05 L1774.19 502.5 L1775.61 502.96 L1776.99 503.45 L1778.34 503.94 L1779.66 504.45 L1780.96 504.97 L1782.24 505.5 L1783.5 506.05 L1784.75 506.59 L1785.99 507.15 L1787.22 507.71 L1788.44 508.28 L1789.67 508.84 L1790.89 509.41 L1792.13 509.98 L1793.37 510.54 L1794.62 511.11 L1795.88 511.66 L1797.17 512.21 L1798.47 512.76 L1799.8 513.29 L1801.15 513.81 L1802.54 514.32 L1803.95 514.81 L1805.41 515.29 L1806.9 515.75 L1808.43 516.2 L1810 516.62 L1811.63 517.02 L1813.3 517.39 L1815.03 517.74 L1816.81 518.07 L1818.66 518.36 L1820.56 518.63 L1822.53 518.87 L1824.57 519.07 L1826.68 519.24 L1828.87 519.37 L1831.13 519.47 L1833.47 519.53 L1835.89 519.55" fill="none" stroke="rgba(28,4,72,0.72)" stroke-width="1.15"/>
<path d="M1741.4 544.9 L1743.89 544.89 L1746.29 544.85 L1748.6 544.79 L1750.84 544.7 L1752.99 544.6 L1755.08 544.47 L1757.09 544.32 L1759.03 544.15 L1760.91 543.97 L1762.73 543.76 L1764.49 543.54 L1766.2 543.31 L1767.85 543.06 L1769.45 542.79 L1771.01 542.51 L1772.53 542.22 L1774.01 541.92 L1775.46 541.61 L1776.87 541.29 L1778.25 540.96 L1779.61 540.63 L1780.94 540.29 L1782.25 539.94 L1783.55 539.59 L1784.84 539.23 L1786.11 538.87 L1787.38 538.51 L1788.65 538.15 L1789.92 537.79 L1791.19 537.43 L1792.46 537.07 L1793.75 536.71 L1795.05 536.36 L1796.36 536.01 L1797.69 535.67 L1799.05 535.34 L1800.43 535.01 L1801.84 534.69 L1803.29 534.38 L1804.77 534.08 L1806.29 533.79 L1807.85 533.51 L1809.45 533.24 L1811.1 532.99 L1812.81 532.76 L1814.57 532.54 L1816.39 532.33 L1818.27 532.15 L1820.21 531.98 L1822.22 531.83 L1824.31 531.7 L1826.46 531.6 L1828.7 531.51 L1831.01 531.45 L1833.41 531.41 L1835.9 531.4" fill="none" stroke="rgba(28,4,72,0.66)" stroke-width="1.9"/>
<path d="M1258.17 741.35 L1260.7 741.29 L1263.11 741.11 L1265.43 740.81 L1267.67 740.4 L1269.83 739.88 L1271.91 739.27 L1273.92 738.55 L1275.87 737.74 L1277.75 736.85 L1279.57 735.86 L1281.33 734.8 L1283.05 733.66 L1284.71 732.44 L1286.32 731.16 L1287.9 729.81 L1289.43 728.4 L1290.93 726.94 L1292.39 725.42 L1293.82 723.86 L1295.23 722.25 L1296.61 720.6 L1297.97 718.92 L1299.31 717.21 L1300.64 715.47 L1301.96 713.72 L1303.27 711.95 L1304.57 710.16 L1305.87 708.37 L1307.17 706.58 L1308.48 704.79 L1309.8 703.01 L1311.13 701.24 L1312.47 699.48 L1313.83 697.75 L1315.21 696.04 L1316.62 694.36 L1318.06 692.71 L1319.53 691.1 L1321.04 689.54 L1322.59 688.03 L1324.18 686.57 L1325.81 685.17 L1327.5 683.83 L1329.24 682.56 L1331.03 681.36 L1332.89 680.24 L1334.81 679.2 L1336.8 678.26 L1338.85 677.4 L1340.98 676.65 L1343.18 675.99 L1345.46 675.45 L1347.82 675.02 L1350.26 674.71 L1352.79 674.51 L1355.37 674.45" fill="none" stroke="rgba(28,4,72,0.72)" stroke-width="1.15"/>
<path d="M1258.23 743.65 L1260.81 743.59 L1263.34 743.39 L1265.78 743.08 L1268.14 742.65 L1270.42 742.11 L1272.62 741.45 L1274.75 740.7 L1276.8 739.84 L1278.79 738.9 L1280.71 737.86 L1282.57 736.74 L1284.36 735.54 L1286.1 734.27 L1287.79 732.93 L1289.42 731.53 L1291.01 730.07 L1292.56 728.56 L1294.07 727 L1295.54 725.39 L1296.98 723.74 L1298.39 722.06 L1299.77 720.35 L1301.13 718.62 L1302.47 716.86 L1303.8 715.09 L1305.12 713.31 L1306.43 711.52 L1307.73 709.73 L1309.03 707.94 L1310.33 706.15 L1311.64 704.38 L1312.96 702.63 L1314.29 700.89 L1315.63 699.18 L1316.99 697.5 L1318.37 695.85 L1319.78 694.24 L1321.21 692.68 L1322.67 691.16 L1324.17 689.7 L1325.7 688.29 L1327.28 686.94 L1328.89 685.66 L1330.55 684.44 L1332.27 683.3 L1334.03 682.24 L1335.85 681.25 L1337.73 680.36 L1339.68 679.55 L1341.69 678.83 L1343.77 678.22 L1345.93 677.7 L1348.17 677.29 L1350.49 676.99 L1352.9 676.81 L1355.43 676.75" fill="none" stroke="rgba(28,4,72,0.72)" stroke-width="1.15"/>
<path d="M1405.99 661.45 L1409.77 661.43 L1413.4 661.38 L1416.9 661.3 L1420.29 661.19 L1423.55 661.05 L1426.7 660.88 L1429.74 660.68 L1432.68 660.46 L1435.52 660.21 L1438.27 659.94 L1440.93 659.65 L1443.51 659.33 L1446.01 659 L1448.43 658.65 L1450.79 658.28 L1453.08 657.9 L1455.31 657.5 L1457.5 657.09 L1459.63 656.66 L1461.72 656.23 L1463.77 655.78 L1465.79 655.33 L1467.78 654.87 L1469.74 654.4 L1471.69 653.92 L1473.62 653.45 L1475.55 652.97 L1477.47 652.48 L1479.39 652 L1481.32 651.52 L1483.26 651.04 L1485.22 650.57 L1487.2 650.1 L1489.2 649.63 L1491.24 649.17 L1493.3 648.72 L1495.41 648.28 L1497.57 647.85 L1499.77 647.44 L1502.03 647.04 L1504.35 646.65 L1506.73 646.28 L1509.18 645.92 L1511.7 645.58 L1514.3 645.27 L1516.99 644.97 L1519.76 644.7 L1522.63 644.45 L1525.6 644.23 L1528.66 644.03 L1531.84 643.86 L1535.13 643.71 L1538.53 643.6 L1542.06 643.52 L1545.71 643.47 L1549.49 643.45" fill="none" stroke="rgba(28,4,72,0.72)" stroke-width="1.15"/>
<path d="M1406.01 663.75 L1409.79 663.73 L1413.44 663.68 L1416.97 663.6 L1420.37 663.49 L1423.66 663.34 L1426.84 663.17 L1429.9 662.97 L1432.87 662.75 L1435.74 662.5 L1438.51 662.23 L1441.2 661.93 L1443.8 661.62 L1446.32 661.28 L1448.77 660.92 L1451.15 660.55 L1453.47 660.16 L1455.73 659.76 L1457.93 659.35 L1460.09 658.92 L1462.2 658.48 L1464.26 658.03 L1466.3 657.57 L1468.3 657.1 L1470.28 656.63 L1472.24 656.16 L1474.18 655.68 L1476.11 655.2 L1478.03 654.72 L1479.95 654.23 L1481.88 653.75 L1483.81 653.28 L1485.76 652.8 L1487.72 652.33 L1489.71 651.87 L1491.73 651.42 L1493.78 650.97 L1495.87 650.54 L1498 650.11 L1500.19 649.7 L1502.42 649.3 L1504.71 648.92 L1507.07 648.55 L1509.49 648.2 L1511.99 647.87 L1514.57 647.55 L1517.23 647.26 L1519.98 646.99 L1522.82 646.74 L1525.76 646.52 L1528.8 646.32 L1531.95 646.15 L1535.21 646.01 L1538.6 645.9 L1542.1 645.82 L1545.73 645.77 L1549.51 645.75" fill="none" stroke="rgba(28,4,72,0.72)" stroke-width="1.15"/>
<path d="M1513.9 663.1 L1514.84 663.1 L1515.74 663.08 L1516.61 663.07 L1517.45 663.04 L1518.27 663.01 L1519.05 662.97 L1519.81 662.92 L1520.54 662.87 L1521.25 662.82 L1521.94 662.75 L1522.6 662.69 L1523.24 662.62 L1523.86 662.54 L1524.47 662.46 L1525.06 662.38 L1525.63 662.29 L1526.19 662.2 L1526.73 662.1 L1527.26 662 L1527.78 661.9 L1528.29 661.8 L1528.8 661.7 L1529.29 661.59 L1529.78 661.49 L1530.26 661.38 L1530.74 661.27 L1531.22 661.16 L1531.7 661.05 L1532.18 660.94 L1532.66 660.83 L1533.14 660.72 L1533.62 660.61 L1534.11 660.51 L1534.6 660.4 L1535.11 660.3 L1535.62 660.2 L1536.14 660.1 L1536.67 660 L1537.21 659.9 L1537.77 659.81 L1538.34 659.72 L1538.93 659.64 L1539.54 659.56 L1540.16 659.48 L1540.8 659.41 L1541.46 659.35 L1542.15 659.28 L1542.86 659.23 L1543.59 659.18 L1544.35 659.13 L1545.13 659.09 L1545.95 659.06 L1546.79 659.03 L1547.66 659.02 L1548.56 659 L1549.5 659" fill="none" stroke="rgba(28,4,72,0.66)" stroke-width="1.9"/>
<path d="M1513.9 663.1 L1518.35 663.05 L1522.65 662.92 L1526.8 662.7 L1530.81 662.39 L1534.67 662 L1538.4 661.54 L1542.01 661.01 L1545.49 660.4 L1548.86 659.73 L1552.11 659 L1555.27 658.2 L1558.32 657.35 L1561.29 656.45 L1564.16 655.49 L1566.96 654.49 L1569.68 653.45 L1572.33 652.36 L1574.91 651.24 L1577.44 650.09 L1579.92 648.9 L1582.35 647.69 L1584.74 646.46 L1587.09 645.2 L1589.42 643.93 L1591.72 642.65 L1594.01 641.35 L1596.28 640.05 L1598.55 638.75 L1600.82 637.45 L1603.09 636.15 L1605.38 634.85 L1607.68 633.57 L1610.01 632.3 L1612.36 631.04 L1614.75 629.81 L1617.18 628.6 L1619.66 627.41 L1622.19 626.26 L1624.77 625.14 L1627.42 624.05 L1630.14 623.01 L1632.94 622.01 L1635.81 621.05 L1638.78 620.15 L1641.83 619.3 L1644.99 618.5 L1648.24 617.77 L1651.61 617.1 L1655.09 616.49 L1658.7 615.96 L1662.43 615.5 L1666.29 615.11 L1670.3 614.8 L1674.45 614.58 L1678.75 614.45 L1683.2 614.4" fill="none" stroke="rgba(28,4,72,0.66)" stroke-width="1.9"/>
<path d="M1599.16 646.35 L1600.25 646.31 L1601.18 646.21 L1601.99 646.04 L1602.69 645.82 L1603.29 645.55 L1603.8 645.24 L1604.23 644.88 L1604.59 644.49 L1604.89 644.04 L1605.14 643.55 L1605.35 642.99 L1605.5 642.38 L1605.6 641.7 L1605.65 640.98 L1605.65 640.19 L1605.6 639.36 L1605.51 638.49 L1605.38 637.58 L1605.21 636.63 L1605 635.65 L1604.76 634.65 L1604.49 633.62 L1604.2 632.56 L1603.88 631.5 L1603.55 630.41 L1603.21 629.32 L1602.86 628.21 L1602.5 627.1 L1602.15 625.99 L1601.79 624.88 L1601.45 623.77 L1601.11 622.66 L1600.79 621.57 L1600.49 620.48 L1600.21 619.41 L1599.96 618.35 L1599.74 617.31 L1599.55 616.29 L1599.41 615.29 L1599.3 614.32 L1599.25 613.37 L1599.25 612.44 L1599.32 611.55 L1599.45 610.68 L1599.65 609.84 L1599.94 609.04 L1600.33 608.29 L1600.81 607.59 L1601.38 606.95 L1602.06 606.39 L1602.83 605.92 L1603.69 605.53 L1604.64 605.23 L1605.67 605.02 L1606.79 604.89 L1607.96 604.85" fill="none" stroke="rgba(28,4,72,0.72)" stroke-width="1.15"/>
<path d="M1599.24 648.65 L1600.41 648.61 L1601.53 648.48 L1602.56 648.27 L1603.51 647.97 L1604.37 647.58 L1605.14 647.11 L1605.82 646.55 L1606.39 645.91 L1606.87 645.21 L1607.26 644.46 L1607.55 643.66 L1607.75 642.82 L1607.88 641.95 L1607.95 641.06 L1607.95 640.13 L1607.9 639.18 L1607.79 638.21 L1607.65 637.21 L1607.46 636.19 L1607.24 635.15 L1606.99 634.09 L1606.71 633.02 L1606.41 631.93 L1606.09 630.84 L1605.75 629.73 L1605.41 628.62 L1605.05 627.51 L1604.7 626.4 L1604.34 625.29 L1603.99 624.18 L1603.65 623.09 L1603.32 622 L1603 620.94 L1602.71 619.88 L1602.44 618.85 L1602.2 617.85 L1601.99 616.87 L1601.82 615.92 L1601.69 615.01 L1601.6 614.14 L1601.55 613.31 L1601.55 612.52 L1601.6 611.8 L1601.7 611.12 L1601.85 610.51 L1602.06 609.95 L1602.31 609.46 L1602.61 609.01 L1602.97 608.62 L1603.4 608.26 L1603.91 607.95 L1604.51 607.68 L1605.21 607.46 L1606.02 607.29 L1606.95 607.19 L1608.04 607.15" fill="none" stroke="rgba(28,4,72,0.72)" stroke-width="1.15"/>
<path d="M1599.19 646.35 L1601.39 646.33 L1603.5 646.27 L1605.54 646.18 L1607.5 646.06 L1609.4 645.9 L1611.23 645.71 L1612.99 645.48 L1614.69 645.23 L1616.34 644.96 L1617.93 644.65 L1619.47 644.33 L1620.97 643.97 L1622.41 643.6 L1623.82 643.21 L1625.18 642.8 L1626.51 642.37 L1627.8 641.92 L1629.07 641.46 L1630.3 640.98 L1631.52 640.49 L1632.71 639.99 L1633.88 639.48 L1635.04 638.96 L1636.18 638.43 L1637.32 637.89 L1638.45 637.35 L1639.57 636.81 L1640.7 636.27 L1641.82 635.72 L1642.96 635.17 L1644.1 634.63 L1645.24 634.09 L1646.41 633.55 L1647.59 633.02 L1648.79 632.5 L1650.01 631.98 L1651.25 631.48 L1652.52 630.99 L1653.83 630.51 L1655.16 630.05 L1656.53 629.61 L1657.94 629.18 L1659.39 628.78 L1660.88 628.39 L1662.42 628.03 L1664.01 627.69 L1665.65 627.38 L1667.35 627.09 L1669.1 626.84 L1670.91 626.61 L1672.79 626.41 L1674.73 626.25 L1676.74 626.12 L1678.82 626.03 L1680.97 625.97 L1683.19 625.95" fill="none" stroke="rgba(28,4,72,0.72)" stroke-width="1.15"/>
<path d="M1599.21 648.65 L1601.43 648.63 L1603.58 648.57 L1605.66 648.48 L1607.67 648.35 L1609.61 648.19 L1611.49 647.99 L1613.3 647.76 L1615.05 647.51 L1616.75 647.22 L1618.39 646.91 L1619.98 646.57 L1621.52 646.21 L1623.01 645.82 L1624.46 645.42 L1625.87 644.99 L1627.24 644.55 L1628.57 644.09 L1629.88 643.61 L1631.15 643.12 L1632.39 642.62 L1633.61 642.1 L1634.81 641.58 L1635.99 641.05 L1637.16 640.51 L1638.3 639.97 L1639.44 639.43 L1640.58 638.88 L1641.7 638.33 L1642.83 637.79 L1643.95 637.25 L1645.08 636.71 L1646.22 636.17 L1647.36 635.64 L1648.52 635.12 L1649.69 634.61 L1650.88 634.11 L1652.1 633.62 L1653.33 633.14 L1654.6 632.68 L1655.89 632.23 L1657.22 631.8 L1658.58 631.39 L1659.99 631 L1661.43 630.63 L1662.93 630.27 L1664.47 629.95 L1666.06 629.64 L1667.71 629.37 L1669.41 629.12 L1671.17 628.89 L1673 628.7 L1674.9 628.54 L1676.86 628.42 L1678.9 628.33 L1681.01 628.27 L1683.21 628.25" fill="none" stroke="rgba(28,4,72,0.72)" stroke-width="1.15"/>
<path d="M1599.19 668.55 L1601.38 668.52 L1603.48 668.44 L1605.51 668.31 L1607.47 668.13 L1609.35 667.9 L1611.17 667.63 L1612.92 667.31 L1614.62 666.95 L1616.26 666.55 L1617.84 666.12 L1619.37 665.65 L1620.86 665.14 L1622.3 664.61 L1623.69 664.05 L1625.05 663.45 L1626.37 662.84 L1627.66 662.19 L1628.92 661.53 L1630.16 660.84 L1631.37 660.14 L1632.56 659.42 L1633.73 658.68 L1634.88 657.93 L1636.03 657.17 L1637.16 656.4 L1638.29 655.63 L1639.42 654.84 L1640.54 654.06 L1641.67 653.27 L1642.8 652.48 L1643.94 651.7 L1645.09 650.92 L1646.25 650.14 L1647.43 649.38 L1648.64 648.62 L1649.86 647.88 L1651.11 647.16 L1652.38 646.45 L1653.69 645.76 L1655.03 645.09 L1656.4 644.45 L1657.82 643.83 L1659.27 643.25 L1660.77 642.69 L1662.32 642.16 L1663.92 641.67 L1665.57 641.22 L1667.27 640.81 L1669.03 640.43 L1670.86 640.11 L1672.74 639.82 L1674.69 639.59 L1676.71 639.4 L1678.8 639.26 L1680.96 639.18 L1683.19 639.15" fill="none" stroke="rgba(28,4,72,0.72)" stroke-width="1.15"/>
<path d="M1599.21 670.85 L1601.44 670.82 L1603.6 670.74 L1605.69 670.6 L1607.71 670.41 L1609.66 670.18 L1611.54 669.89 L1613.37 669.57 L1615.13 669.19 L1616.83 668.78 L1618.48 668.33 L1620.08 667.84 L1621.63 667.31 L1623.13 666.75 L1624.58 666.17 L1626 665.55 L1627.37 664.91 L1628.71 664.24 L1630.02 663.55 L1631.29 662.84 L1632.54 662.12 L1633.76 661.38 L1634.97 660.62 L1636.15 659.86 L1637.31 659.08 L1638.46 658.3 L1639.6 657.52 L1640.73 656.73 L1641.86 655.94 L1642.98 655.16 L1644.11 654.37 L1645.24 653.6 L1646.37 652.83 L1647.52 652.07 L1648.67 651.32 L1649.84 650.58 L1651.03 649.86 L1652.24 649.16 L1653.48 648.47 L1654.74 647.81 L1656.03 647.16 L1657.35 646.55 L1658.71 645.95 L1660.1 645.39 L1661.54 644.86 L1663.03 644.35 L1664.56 643.88 L1666.14 643.45 L1667.78 643.05 L1669.48 642.69 L1671.23 642.37 L1673.05 642.1 L1674.93 641.87 L1676.89 641.69 L1678.92 641.56 L1681.02 641.48 L1683.21 641.45" fill="none" stroke="rgba(28,4,72,0.72)" stroke-width="1.15"/>
<path d="M1742.71 625.95 L1745.17 625.97 L1747.55 626.02 L1749.86 626.11 L1752.08 626.23 L1754.22 626.38 L1756.3 626.56 L1758.3 626.77 L1760.24 627.01 L1762.11 627.28 L1763.93 627.57 L1765.69 627.88 L1767.39 628.22 L1769.04 628.57 L1770.64 628.95 L1772.2 629.35 L1773.72 629.76 L1775.19 630.19 L1776.63 630.63 L1778.04 631.09 L1779.42 631.55 L1780.77 632.03 L1782.1 632.52 L1783.4 633.01 L1784.69 633.51 L1785.97 634.01 L1787.23 634.52 L1788.48 635.03 L1789.73 635.53 L1790.98 636.04 L1792.23 636.55 L1793.48 637.05 L1794.75 637.55 L1796.02 638.04 L1797.3 638.53 L1798.61 639.01 L1799.93 639.47 L1801.28 639.93 L1802.66 640.38 L1804.07 640.81 L1805.51 641.23 L1806.99 641.63 L1808.5 642.01 L1810.07 642.38 L1811.68 642.73 L1813.34 643.06 L1815.05 643.36 L1816.83 643.65 L1818.66 643.91 L1820.56 644.14 L1822.52 644.35 L1824.56 644.53 L1826.67 644.68 L1828.85 644.79 L1831.12 644.88 L1833.46 644.93 L1835.91 644.95" fill="none" stroke="rgba(28,4,72,0.72)" stroke-width="1.15"/>
<path d="M1742.69 628.25 L1745.14 628.27 L1747.48 628.32 L1749.75 628.41 L1751.93 628.52 L1754.04 628.67 L1756.08 628.85 L1758.04 629.06 L1759.94 629.29 L1761.77 629.55 L1763.55 629.84 L1765.26 630.14 L1766.92 630.47 L1768.53 630.82 L1770.1 631.19 L1771.61 631.57 L1773.09 631.97 L1774.53 632.39 L1775.94 632.82 L1777.32 633.27 L1778.67 633.73 L1779.99 634.19 L1781.3 634.67 L1782.58 635.16 L1783.85 635.65 L1785.12 636.15 L1786.37 636.65 L1787.62 637.16 L1788.87 637.67 L1790.12 638.17 L1791.37 638.68 L1792.63 639.19 L1793.91 639.69 L1795.2 640.19 L1796.5 640.68 L1797.83 641.17 L1799.18 641.65 L1800.56 642.11 L1801.97 642.57 L1803.41 643.01 L1804.88 643.44 L1806.4 643.85 L1807.96 644.25 L1809.56 644.63 L1811.21 644.98 L1812.91 645.32 L1814.67 645.63 L1816.49 645.92 L1818.36 646.19 L1820.3 646.43 L1822.3 646.64 L1824.38 646.82 L1826.52 646.97 L1828.74 647.09 L1831.05 647.18 L1833.43 647.23 L1835.89 647.25" fill="none" stroke="rgba(28,4,72,0.72)" stroke-width="1.15"/>
<path d="M1738.9 673.3 L1741.45 673.29 L1743.92 673.25 L1746.29 673.18 L1748.59 673.09 L1750.8 672.98 L1752.94 672.85 L1755 672.69 L1757 672.51 L1758.93 672.32 L1760.79 672.1 L1762.6 671.87 L1764.35 671.62 L1766.05 671.36 L1767.7 671.08 L1769.3 670.79 L1770.86 670.48 L1772.37 670.17 L1773.86 669.84 L1775.31 669.51 L1776.72 669.16 L1778.12 668.81 L1779.49 668.45 L1780.84 668.08 L1782.17 667.71 L1783.49 667.34 L1784.8 666.96 L1786.1 666.58 L1787.4 666.2 L1788.7 665.82 L1790 665.44 L1791.31 665.06 L1792.63 664.69 L1793.96 664.32 L1795.31 663.95 L1796.68 663.59 L1798.08 663.24 L1799.49 662.89 L1800.94 662.56 L1802.43 662.23 L1803.94 661.92 L1805.5 661.61 L1807.1 661.32 L1808.75 661.04 L1810.45 660.78 L1812.2 660.53 L1814.01 660.3 L1815.87 660.08 L1817.8 659.89 L1819.8 659.71 L1821.86 659.55 L1824 659.42 L1826.21 659.31 L1828.51 659.22 L1830.88 659.15 L1833.35 659.11 L1835.9 659.1" fill="none" stroke="rgba(28,4,72,0.66)" stroke-width="1.9"/>
<path d="M1258.22 741.35 L1260.82 741.4 L1263.36 741.55 L1265.81 741.8 L1268.17 742.13 L1270.46 742.56 L1272.67 743.07 L1274.8 743.67 L1276.86 744.34 L1278.86 745.08 L1280.79 745.9 L1282.66 746.78 L1284.47 747.73 L1286.22 748.73 L1287.92 749.78 L1289.57 750.89 L1291.17 752.04 L1292.73 753.24 L1294.25 754.47 L1295.74 755.74 L1297.19 757.04 L1298.61 758.37 L1300.01 759.72 L1301.38 761.09 L1302.74 762.48 L1304.08 763.88 L1305.41 765.29 L1306.73 766.7 L1308.04 768.12 L1309.35 769.53 L1310.67 770.94 L1311.99 772.33 L1313.31 773.72 L1314.65 775.09 L1316 776.44 L1317.37 777.76 L1318.76 779.06 L1320.18 780.32 L1321.62 781.56 L1323.09 782.75 L1324.6 783.91 L1326.14 785.02 L1327.73 786.08 L1329.36 787.1 L1331.04 788.06 L1332.77 788.96 L1334.55 789.8 L1336.39 790.58 L1338.29 791.29 L1340.26 791.93 L1342.3 792.5 L1344.41 792.99 L1346.6 793.4 L1348.87 793.72 L1351.22 793.96 L1353.67 794.1 L1356.22 794.15" fill="none" stroke="rgba(28,4,72,0.72)" stroke-width="1.15"/>
<path d="M1258.18 743.65 L1260.73 743.7 L1263.18 743.84 L1265.53 744.08 L1267.8 744.4 L1269.99 744.81 L1272.1 745.3 L1274.14 745.87 L1276.11 746.51 L1278.01 747.22 L1279.85 748 L1281.63 748.84 L1283.36 749.74 L1285.04 750.7 L1286.67 751.72 L1288.26 752.78 L1289.8 753.89 L1291.31 755.05 L1292.78 756.24 L1294.22 757.48 L1295.64 758.74 L1297.03 760.04 L1298.4 761.36 L1299.75 762.71 L1301.09 764.08 L1302.41 765.47 L1303.73 766.86 L1305.05 768.27 L1306.36 769.68 L1307.67 771.1 L1308.99 772.51 L1310.32 773.92 L1311.66 775.32 L1313.02 776.71 L1314.39 778.08 L1315.79 779.43 L1317.21 780.76 L1318.66 782.06 L1320.15 783.33 L1321.67 784.56 L1323.23 785.76 L1324.83 786.91 L1326.48 788.02 L1328.18 789.07 L1329.93 790.07 L1331.74 791.02 L1333.61 791.9 L1335.54 792.72 L1337.54 793.46 L1339.6 794.13 L1341.73 794.73 L1343.94 795.24 L1346.23 795.67 L1348.59 796 L1351.04 796.25 L1353.58 796.4 L1356.18 796.45" fill="none" stroke="rgba(28,4,72,0.72)" stroke-width="1.15"/>
<path d="M1406.61 781.15 L1410.32 781.17 L1413.92 781.22 L1417.38 781.29 L1420.73 781.4 L1423.97 781.54 L1427.09 781.71 L1430.1 781.9 L1433.02 782.12 L1435.84 782.36 L1438.57 782.62 L1441.21 782.91 L1443.77 783.21 L1446.25 783.54 L1448.66 783.88 L1451 784.24 L1453.28 784.62 L1455.5 785.01 L1457.66 785.41 L1459.78 785.82 L1461.86 786.25 L1463.89 786.68 L1465.89 787.12 L1467.86 787.57 L1469.8 788.03 L1471.73 788.49 L1473.64 788.95 L1475.53 789.42 L1477.43 789.88 L1479.32 790.35 L1481.21 790.81 L1483.11 791.27 L1485.03 791.73 L1486.96 792.19 L1488.91 792.63 L1490.9 793.07 L1492.91 793.5 L1494.97 793.92 L1497.07 794.33 L1499.21 794.73 L1501.41 795.12 L1503.66 795.49 L1505.98 795.84 L1508.36 796.18 L1510.82 796.5 L1513.35 796.81 L1515.97 797.09 L1518.67 797.35 L1521.46 797.59 L1524.35 797.81 L1527.35 798 L1530.44 798.16 L1533.65 798.3 L1536.98 798.41 L1540.43 798.49 L1544 798.53 L1547.71 798.55" fill="none" stroke="rgba(28,4,72,0.72)" stroke-width="1.15"/>
<path d="M1406.59 783.45 L1410.3 783.47 L1413.87 783.51 L1417.32 783.59 L1420.65 783.7 L1423.86 783.84 L1426.95 784 L1429.95 784.19 L1432.84 784.41 L1435.63 784.65 L1438.33 784.91 L1440.95 785.19 L1443.48 785.5 L1445.94 785.82 L1448.32 786.16 L1450.64 786.51 L1452.89 786.88 L1455.09 787.27 L1457.23 787.67 L1459.33 788.08 L1461.39 788.5 L1463.4 788.93 L1465.39 789.37 L1467.34 789.81 L1469.27 790.27 L1471.19 790.73 L1473.09 791.19 L1474.98 791.65 L1476.87 792.12 L1478.77 792.58 L1480.66 793.05 L1482.57 793.51 L1484.5 793.97 L1486.44 794.43 L1488.41 794.88 L1490.41 795.32 L1492.44 795.75 L1494.52 796.18 L1496.64 796.59 L1498.8 796.99 L1501.02 797.38 L1503.3 797.76 L1505.64 798.12 L1508.05 798.46 L1510.53 798.79 L1513.09 799.09 L1515.73 799.38 L1518.46 799.64 L1521.28 799.88 L1524.2 800.1 L1527.21 800.29 L1530.33 800.46 L1533.57 800.6 L1536.92 800.71 L1540.38 800.78 L1543.98 800.83 L1547.69 800.85" fill="none" stroke="rgba(28,4,72,0.72)" stroke-width="1.15"/>
<path d="M1511.1 819.2 L1512.06 819.2 L1512.99 819.18 L1513.89 819.16 L1514.75 819.13 L1515.59 819.09 L1516.4 819.04 L1517.18 818.98 L1517.93 818.92 L1518.66 818.85 L1519.36 818.77 L1520.04 818.69 L1520.7 818.6 L1521.34 818.5 L1521.97 818.4 L1522.57 818.3 L1523.16 818.19 L1523.73 818.08 L1524.29 817.96 L1524.84 817.84 L1525.37 817.71 L1525.9 817.59 L1526.41 817.46 L1526.92 817.33 L1527.43 817.19 L1527.92 817.06 L1528.42 816.92 L1528.91 816.79 L1529.4 816.65 L1529.89 816.51 L1530.38 816.38 L1530.88 816.24 L1531.37 816.11 L1531.88 815.97 L1532.39 815.84 L1532.9 815.71 L1533.43 815.59 L1533.96 815.46 L1534.51 815.34 L1535.07 815.22 L1535.64 815.11 L1536.23 815 L1536.83 814.9 L1537.46 814.8 L1538.1 814.7 L1538.76 814.61 L1539.44 814.53 L1540.14 814.45 L1540.87 814.38 L1541.62 814.32 L1542.4 814.26 L1543.21 814.21 L1544.05 814.17 L1544.91 814.14 L1545.81 814.12 L1546.74 814.1 L1547.7 814.1" fill="none" stroke="rgba(28,4,72,0.66)" stroke-width="1.9"/>
<path d="M1511.1 819.2 L1515.61 819.13 L1519.96 818.91 L1524.16 818.56 L1528.22 818.08 L1532.13 817.47 L1535.91 816.74 L1539.56 815.9 L1543.08 814.95 L1546.49 813.89 L1549.79 812.73 L1552.98 811.47 L1556.07 810.13 L1559.07 808.71 L1561.98 807.2 L1564.81 805.62 L1567.57 803.97 L1570.25 802.26 L1572.87 800.5 L1575.43 798.68 L1577.94 796.81 L1580.4 794.9 L1582.82 792.95 L1585.2 790.98 L1587.56 788.97 L1589.89 786.95 L1592.2 784.91 L1594.5 782.86 L1596.8 780.8 L1599.1 778.74 L1601.4 776.69 L1603.71 774.65 L1606.04 772.63 L1608.4 770.62 L1610.78 768.65 L1613.2 766.7 L1615.66 764.79 L1618.17 762.92 L1620.73 761.1 L1623.35 759.34 L1626.03 757.63 L1628.79 755.98 L1631.62 754.4 L1634.53 752.89 L1637.53 751.47 L1640.62 750.13 L1643.81 748.87 L1647.11 747.71 L1650.52 746.65 L1654.04 745.7 L1657.69 744.86 L1661.47 744.13 L1665.38 743.52 L1669.44 743.04 L1673.64 742.69 L1677.99 742.47 L1682.5 742.4" fill="none" stroke="rgba(28,4,72,0.66)" stroke-width="1.9"/>
<path d="M1597.17 801.45 L1599.27 801.39 L1601.12 801.21 L1602.75 800.91 L1604.17 800.52 L1605.39 800.03 L1606.43 799.46 L1607.29 798.81 L1608 798.09 L1608.57 797.3 L1609.02 796.42 L1609.35 795.45 L1609.58 794.39 L1609.7 793.25 L1609.71 792.01 L1609.61 790.7 L1609.43 789.31 L1609.14 787.85 L1608.78 786.33 L1608.33 784.76 L1607.81 783.14 L1607.23 781.48 L1606.6 779.77 L1605.92 778.04 L1605.19 776.28 L1604.43 774.5 L1603.65 772.7 L1602.86 770.89 L1602.05 769.07 L1601.24 767.24 L1600.44 765.42 L1599.65 763.61 L1598.89 761.81 L1598.15 760.02 L1597.45 758.25 L1596.8 756.51 L1596.2 754.79 L1595.67 753.1 L1595.2 751.45 L1594.81 749.84 L1594.51 748.27 L1594.3 746.74 L1594.19 745.26 L1594.21 743.83 L1594.35 742.45 L1594.63 741.13 L1595.07 739.88 L1595.67 738.7 L1596.45 737.62 L1597.4 736.66 L1598.53 735.81 L1599.83 735.09 L1601.3 734.5 L1602.94 734.04 L1604.77 733.71 L1606.79 733.52 L1608.97 733.45" fill="none" stroke="rgba(28,4,72,0.72)" stroke-width="1.15"/>
<path d="M1597.23 803.75 L1599.41 803.68 L1601.43 803.49 L1603.26 803.16 L1604.9 802.7 L1606.37 802.11 L1607.67 801.39 L1608.8 800.54 L1609.75 799.58 L1610.53 798.5 L1611.13 797.32 L1611.57 796.07 L1611.85 794.75 L1611.99 793.37 L1612.01 791.94 L1611.9 790.46 L1611.69 788.93 L1611.39 787.36 L1611 785.75 L1610.53 784.1 L1610 782.41 L1609.4 780.69 L1608.75 778.95 L1608.05 777.18 L1607.31 775.39 L1606.55 773.59 L1605.76 771.78 L1604.96 769.96 L1604.15 768.13 L1603.34 766.31 L1602.55 764.5 L1601.77 762.7 L1601.01 760.92 L1600.28 759.16 L1599.6 757.43 L1598.97 755.72 L1598.39 754.06 L1597.87 752.44 L1597.42 750.87 L1597.06 749.35 L1596.77 747.89 L1596.59 746.5 L1596.49 745.19 L1596.5 743.95 L1596.62 742.81 L1596.85 741.75 L1597.18 740.78 L1597.63 739.9 L1598.2 739.11 L1598.91 738.39 L1599.77 737.74 L1600.81 737.17 L1602.03 736.68 L1603.45 736.29 L1605.08 735.99 L1606.93 735.81 L1609.03 735.75" fill="none" stroke="rgba(28,4,72,0.72)" stroke-width="1.15"/>
<path d="M1597.18 801.45 L1599.4 801.41 L1601.52 801.28 L1603.56 801.06 L1605.52 800.77 L1607.42 800.41 L1609.25 799.97 L1611.02 799.46 L1612.73 798.89 L1614.38 798.25 L1615.97 797.55 L1617.52 796.8 L1619.02 795.99 L1620.47 795.13 L1621.88 794.22 L1623.26 793.27 L1624.6 792.27 L1625.91 791.23 L1627.19 790.16 L1628.44 789.05 L1629.67 787.92 L1630.88 786.75 L1632.07 785.56 L1633.25 784.35 L1634.41 783.12 L1635.56 781.87 L1636.71 780.62 L1637.85 779.35 L1638.99 778.08 L1640.14 776.81 L1641.29 775.54 L1642.44 774.27 L1643.61 773.01 L1644.79 771.76 L1645.99 770.53 L1647.21 769.31 L1648.45 768.11 L1649.71 766.94 L1651.01 765.8 L1652.34 764.68 L1653.7 763.6 L1655.1 762.56 L1656.54 761.57 L1658.02 760.61 L1659.55 759.71 L1661.13 758.86 L1662.76 758.06 L1664.45 757.32 L1666.19 756.65 L1668 756.04 L1669.86 755.51 L1671.79 755.04 L1673.79 754.66 L1675.86 754.35 L1678 754.13 L1680.21 754 L1682.48 753.95" fill="none" stroke="rgba(28,4,72,0.72)" stroke-width="1.15"/>
<path d="M1597.22 803.75 L1599.49 803.7 L1601.7 803.57 L1603.84 803.35 L1605.91 803.04 L1607.91 802.66 L1609.84 802.19 L1611.7 801.66 L1613.51 801.05 L1615.25 800.38 L1616.94 799.64 L1618.57 798.84 L1620.15 797.99 L1621.68 797.09 L1623.16 796.13 L1624.6 795.14 L1626 794.1 L1627.36 793.02 L1628.69 791.9 L1629.99 790.76 L1631.25 789.59 L1632.49 788.39 L1633.71 787.17 L1634.91 785.94 L1636.09 784.69 L1637.26 783.43 L1638.41 782.16 L1639.56 780.89 L1640.71 779.62 L1641.85 778.35 L1642.99 777.08 L1644.14 775.83 L1645.29 774.58 L1646.45 773.35 L1647.63 772.14 L1648.82 770.95 L1650.03 769.78 L1651.26 768.65 L1652.51 767.54 L1653.79 766.47 L1655.1 765.43 L1656.44 764.43 L1657.82 763.48 L1659.23 762.57 L1660.68 761.71 L1662.18 760.9 L1663.73 760.15 L1665.32 759.45 L1666.97 758.81 L1668.68 758.24 L1670.45 757.73 L1672.28 757.29 L1674.18 756.93 L1676.14 756.64 L1678.18 756.42 L1680.3 756.29 L1682.52 756.25" fill="none" stroke="rgba(28,4,72,0.72)" stroke-width="1.15"/>
<path d="M1597.17 823.65 L1599.39 823.6 L1601.5 823.44 L1603.53 823.19 L1605.49 822.85 L1607.38 822.42 L1609.2 821.9 L1610.96 821.29 L1612.66 820.61 L1614.31 819.86 L1615.9 819.03 L1617.44 818.13 L1618.94 817.17 L1620.39 816.15 L1621.81 815.07 L1623.18 813.94 L1624.53 812.75 L1625.84 811.52 L1627.12 810.24 L1628.37 808.92 L1629.6 807.56 L1630.81 806.18 L1632 804.76 L1633.18 803.32 L1634.35 801.85 L1635.5 800.37 L1636.65 798.87 L1637.79 797.37 L1638.93 795.86 L1640.08 794.34 L1641.22 792.83 L1642.38 791.32 L1643.55 789.83 L1644.73 788.34 L1645.92 786.88 L1647.14 785.43 L1648.38 784.01 L1649.64 782.62 L1650.94 781.26 L1652.26 779.93 L1653.62 778.65 L1655.02 777.42 L1656.46 776.23 L1657.95 775.09 L1659.48 774.02 L1661.06 773 L1662.69 772.05 L1664.38 771.18 L1666.13 770.37 L1667.94 769.65 L1669.81 769.01 L1671.75 768.46 L1673.75 768 L1675.83 767.63 L1677.98 767.37 L1680.2 767.2 L1682.47 767.15" fill="none" stroke="rgba(28,4,72,0.72)" stroke-width="1.15"/>
<path d="M1597.23 825.95 L1599.5 825.9 L1601.72 825.73 L1603.87 825.47 L1605.95 825.1 L1607.95 824.64 L1609.89 824.09 L1611.76 823.45 L1613.57 822.73 L1615.32 821.92 L1617.01 821.05 L1618.64 820.1 L1620.22 819.08 L1621.75 818.01 L1623.24 816.87 L1624.68 815.68 L1626.08 814.45 L1627.44 813.17 L1628.76 811.84 L1630.06 810.48 L1631.32 809.09 L1632.56 807.67 L1633.78 806.22 L1634.97 804.76 L1636.15 803.27 L1637.32 801.78 L1638.48 800.27 L1639.62 798.76 L1640.77 797.24 L1641.91 795.73 L1643.05 794.23 L1644.2 792.73 L1645.35 791.25 L1646.52 789.78 L1647.7 788.34 L1648.89 786.92 L1650.1 785.54 L1651.33 784.18 L1652.58 782.86 L1653.86 781.58 L1655.17 780.35 L1656.52 779.16 L1657.89 778.03 L1659.31 776.95 L1660.76 775.93 L1662.26 774.97 L1663.8 774.07 L1665.39 773.24 L1667.04 772.49 L1668.74 771.81 L1670.5 771.2 L1672.32 770.68 L1674.21 770.25 L1676.17 769.91 L1678.2 769.66 L1680.31 769.5 L1682.53 769.45" fill="none" stroke="rgba(28,4,72,0.72)" stroke-width="1.15"/>
<path d="M1742.21 753.95 L1744.71 753.97 L1747.13 754.03 L1749.46 754.14 L1751.72 754.28 L1753.9 754.46 L1756 754.67 L1758.04 754.92 L1760.01 755.2 L1761.91 755.51 L1763.75 755.85 L1765.54 756.22 L1767.26 756.61 L1768.94 757.03 L1770.57 757.48 L1772.15 757.94 L1773.69 758.43 L1775.19 758.93 L1776.65 759.45 L1778.08 759.99 L1779.48 760.53 L1780.85 761.09 L1782.19 761.66 L1783.52 762.24 L1784.83 762.83 L1786.12 763.42 L1787.4 764.02 L1788.67 764.61 L1789.94 765.21 L1791.21 765.81 L1792.47 766.4 L1793.74 766.99 L1795.02 767.58 L1796.31 768.15 L1797.61 768.72 L1798.94 769.28 L1800.28 769.83 L1801.64 770.37 L1803.04 770.89 L1804.46 771.4 L1805.92 771.89 L1807.42 772.36 L1808.96 772.81 L1810.54 773.24 L1812.17 773.65 L1813.85 774.03 L1815.59 774.39 L1817.39 774.72 L1819.24 775.03 L1821.16 775.3 L1823.15 775.54 L1825.21 775.75 L1827.35 775.93 L1829.56 776.07 L1831.85 776.17 L1834.23 776.23 L1836.71 776.25" fill="none" stroke="rgba(28,4,72,0.72)" stroke-width="1.15"/>
<path d="M1742.19 756.25 L1744.67 756.27 L1747.05 756.33 L1749.34 756.43 L1751.55 756.57 L1753.69 756.75 L1755.75 756.96 L1757.74 757.2 L1759.66 757.47 L1761.51 757.78 L1763.31 758.11 L1765.05 758.47 L1766.73 758.85 L1768.36 759.26 L1769.94 759.69 L1771.48 760.14 L1772.98 760.61 L1774.44 761.1 L1775.86 761.61 L1777.26 762.13 L1778.62 762.67 L1779.96 763.22 L1781.29 763.78 L1782.59 764.35 L1783.88 764.92 L1785.16 765.51 L1786.43 766.1 L1787.69 766.69 L1788.96 767.29 L1790.23 767.89 L1791.5 768.48 L1792.78 769.08 L1794.07 769.67 L1795.38 770.26 L1796.71 770.84 L1798.05 771.41 L1799.42 771.97 L1800.82 772.51 L1802.25 773.05 L1803.71 773.57 L1805.21 774.07 L1806.75 774.56 L1808.33 775.02 L1809.96 775.47 L1811.64 775.89 L1813.36 776.28 L1815.15 776.65 L1816.99 776.99 L1818.89 777.3 L1820.86 777.58 L1822.9 777.83 L1825 778.04 L1827.18 778.22 L1829.44 778.36 L1831.77 778.47 L1834.19 778.53 L1836.69 778.55" fill="none" stroke="rgba(28,4,72,0.72)" stroke-width="1.15"/>
<path d="M1744.4 815.85 L1746.83 815.83 L1749.17 815.75 L1751.43 815.64 L1753.62 815.48 L1755.72 815.28 L1757.76 815.04 L1759.72 814.76 L1761.62 814.44 L1763.46 814.09 L1765.23 813.71 L1766.95 813.29 L1768.62 812.84 L1770.23 812.37 L1771.8 811.87 L1773.33 811.35 L1774.81 810.8 L1776.25 810.24 L1777.66 809.65 L1779.04 809.05 L1780.39 808.43 L1781.72 807.8 L1783.02 807.15 L1784.3 806.5 L1785.57 805.83 L1786.83 805.16 L1788.07 804.49 L1789.31 803.81 L1790.55 803.12 L1791.79 802.44 L1793.03 801.76 L1794.27 801.09 L1795.53 800.42 L1796.8 799.75 L1798.08 799.1 L1799.38 798.45 L1800.71 797.82 L1802.06 797.2 L1803.44 796.6 L1804.85 796.01 L1806.29 795.45 L1807.77 794.9 L1809.3 794.38 L1810.87 793.88 L1812.48 793.41 L1814.15 792.96 L1815.87 792.54 L1817.64 792.16 L1819.48 791.81 L1821.38 791.49 L1823.34 791.21 L1825.38 790.97 L1827.48 790.77 L1829.67 790.61 L1831.93 790.5 L1834.27 790.42 L1836.7 790.4" fill="none" stroke="rgba(28,4,72,0.66)" stroke-width="1.9"/>
<path d="M1258.23 741.35 L1264.85 741.53 L1270.97 742.06 L1276.6 742.94 L1281.74 744.15 L1286.42 745.67 L1290.66 747.51 L1294.47 749.64 L1297.87 752.07 L1300.86 754.76 L1303.48 757.7 L1305.73 760.89 L1307.63 764.29 L1309.2 767.9 L1310.47 771.7 L1311.45 775.66 L1312.17 779.79 L1312.65 784.06 L1312.91 788.46 L1312.98 792.99 L1312.86 797.62 L1312.59 802.35 L1312.18 807.17 L1311.65 812.05 L1311.02 817 L1310.32 822 L1309.56 827.02 L1308.76 832.07 L1307.94 837.13 L1307.12 842.19 L1306.32 847.23 L1305.56 852.24 L1304.86 857.2 L1304.24 862.11 L1303.71 866.96 L1303.31 871.71 L1303.04 876.37 L1302.92 880.93 L1302.98 885.36 L1303.24 889.65 L1303.7 893.79 L1304.4 897.76 L1305.34 901.56 L1306.55 905.17 L1308.03 908.59 L1309.82 911.79 L1311.92 914.77 L1314.37 917.52 L1317.17 920.04 L1320.36 922.31 L1323.96 924.33 L1327.99 926.08 L1332.47 927.54 L1337.44 928.7 L1342.9 929.55 L1348.88 930.07 L1355.43 930.25" fill="none" stroke="rgba(28,4,72,0.72)" stroke-width="1.15"/>
<path d="M1258.17 743.65 L1264.72 743.83 L1270.7 744.35 L1276.16 745.2 L1281.13 746.36 L1285.61 747.82 L1289.64 749.57 L1293.24 751.59 L1296.43 753.86 L1299.23 756.38 L1301.68 759.13 L1303.78 762.11 L1305.57 765.31 L1307.05 768.73 L1308.26 772.34 L1309.2 776.14 L1309.9 780.11 L1310.36 784.25 L1310.62 788.54 L1310.68 792.97 L1310.56 797.53 L1310.29 802.19 L1309.89 806.94 L1309.36 811.79 L1308.74 816.7 L1308.04 821.66 L1307.28 826.67 L1306.48 831.71 L1305.66 836.77 L1304.84 841.83 L1304.04 846.88 L1303.28 851.9 L1302.58 856.9 L1301.95 861.85 L1301.42 866.73 L1301.01 871.55 L1300.74 876.28 L1300.62 880.91 L1300.69 885.44 L1300.95 889.84 L1301.43 894.11 L1302.15 898.24 L1303.13 902.2 L1304.4 906 L1305.97 909.61 L1307.87 913.01 L1310.12 916.2 L1312.74 919.14 L1315.73 921.83 L1319.13 924.26 L1322.94 926.39 L1327.18 928.23 L1331.86 929.75 L1337 930.96 L1342.63 931.84 L1348.75 932.37 L1355.37 932.55" fill="none" stroke="rgba(28,4,72,0.72)" stroke-width="1.15"/>
<path d="M1406 917.25 L1409.75 917.26 L1413.36 917.29 L1416.85 917.33 L1420.22 917.39 L1423.48 917.47 L1426.62 917.57 L1429.65 917.68 L1432.58 917.8 L1435.42 917.94 L1438.16 918.09 L1440.82 918.25 L1443.39 918.42 L1445.89 918.61 L1448.31 918.8 L1450.67 919 L1452.96 919.22 L1455.19 919.44 L1457.37 919.67 L1459.5 919.9 L1461.58 920.14 L1463.63 920.39 L1465.64 920.64 L1467.63 920.9 L1469.58 921.16 L1471.52 921.42 L1473.44 921.68 L1475.35 921.95 L1477.26 922.21 L1479.16 922.48 L1481.07 922.74 L1482.99 923 L1484.92 923.26 L1486.87 923.52 L1488.85 923.78 L1490.85 924.03 L1492.89 924.27 L1494.96 924.51 L1497.08 924.75 L1499.24 924.97 L1501.46 925.19 L1503.74 925.4 L1506.08 925.61 L1508.49 925.8 L1510.97 925.98 L1513.53 926.16 L1516.17 926.32 L1518.9 926.47 L1521.72 926.6 L1524.64 926.73 L1527.66 926.83 L1530.79 926.93 L1534.03 927.01 L1537.38 927.07 L1540.86 927.11 L1544.46 927.14 L1548.2 927.15" fill="none" stroke="rgba(28,4,72,0.72)" stroke-width="1.15"/>
<path d="M1406 919.55 L1409.74 919.56 L1413.34 919.59 L1416.82 919.63 L1420.17 919.69 L1423.41 919.77 L1426.54 919.87 L1429.56 919.97 L1432.48 920.1 L1435.3 920.23 L1438.03 920.38 L1440.67 920.54 L1443.23 920.72 L1445.71 920.9 L1448.12 921.09 L1450.46 921.3 L1452.74 921.51 L1454.96 921.73 L1457.12 921.95 L1459.24 922.19 L1461.31 922.43 L1463.35 922.67 L1465.35 922.92 L1467.33 923.18 L1469.28 923.44 L1471.21 923.7 L1473.13 923.96 L1475.04 924.22 L1476.94 924.49 L1478.85 924.75 L1480.76 925.02 L1482.68 925.28 L1484.62 925.54 L1486.57 925.8 L1488.56 926.06 L1490.57 926.31 L1492.62 926.56 L1494.7 926.8 L1496.83 927.03 L1499.01 927.26 L1501.24 927.48 L1503.53 927.7 L1505.89 927.9 L1508.31 928.09 L1510.81 928.28 L1513.38 928.45 L1516.04 928.61 L1518.78 928.76 L1521.62 928.9 L1524.55 929.02 L1527.58 929.13 L1530.72 929.23 L1533.98 929.31 L1537.35 929.37 L1540.84 929.41 L1544.45 929.44 L1548.2 929.45" fill="none" stroke="rgba(28,4,72,0.72)" stroke-width="1.15"/>
<path d="M1507.2 945.45 L1508.28 945.45 L1509.32 945.44 L1510.32 945.43 L1511.29 945.41 L1512.23 945.39 L1513.13 945.36 L1514.01 945.33 L1514.85 945.3 L1515.67 945.26 L1516.45 945.22 L1517.22 945.17 L1517.96 945.13 L1518.68 945.07 L1519.37 945.02 L1520.05 944.96 L1520.71 944.9 L1521.35 944.84 L1521.98 944.78 L1522.59 944.72 L1523.19 944.65 L1523.78 944.58 L1524.35 944.51 L1524.93 944.44 L1525.49 944.37 L1526.05 944.3 L1526.6 944.22 L1527.15 944.15 L1527.7 944.07 L1528.25 944 L1528.8 943.93 L1529.35 943.85 L1529.91 943.78 L1530.47 943.71 L1531.05 943.64 L1531.62 943.57 L1532.21 943.5 L1532.81 943.43 L1533.42 943.37 L1534.05 943.31 L1534.69 943.25 L1535.35 943.19 L1536.03 943.13 L1536.72 943.08 L1537.44 943.02 L1538.18 942.98 L1538.95 942.93 L1539.73 942.89 L1540.55 942.85 L1541.39 942.82 L1542.27 942.79 L1543.17 942.76 L1544.11 942.74 L1545.08 942.72 L1546.08 942.71 L1547.12 942.7 L1548.2 942.7" fill="none" stroke="rgba(28,4,72,0.66)" stroke-width="1.9"/>
<path d="M1507.2 945.45 L1511.82 945.39 L1516.28 945.2 L1520.59 944.9 L1524.74 944.48 L1528.76 943.96 L1532.63 943.33 L1536.37 942.6 L1539.98 941.77 L1543.48 940.86 L1546.86 939.86 L1550.13 938.78 L1553.3 937.62 L1556.38 936.38 L1559.36 935.08 L1562.26 933.72 L1565.08 932.3 L1567.83 930.82 L1570.52 929.29 L1573.14 927.72 L1575.71 926.11 L1578.23 924.46 L1580.72 922.78 L1583.16 921.07 L1585.57 919.34 L1587.96 917.59 L1590.34 915.82 L1592.7 914.05 L1595.05 912.28 L1597.4 910.5 L1599.76 908.73 L1602.14 906.96 L1604.53 905.21 L1606.94 903.48 L1609.38 901.77 L1611.87 900.09 L1614.39 898.44 L1616.96 896.83 L1619.58 895.26 L1622.27 893.73 L1625.02 892.25 L1627.84 890.83 L1630.74 889.47 L1633.72 888.17 L1636.8 886.93 L1639.97 885.77 L1643.24 884.69 L1646.62 883.69 L1650.12 882.78 L1653.73 881.95 L1657.47 881.22 L1661.34 880.59 L1665.36 880.07 L1669.51 879.65 L1673.82 879.35 L1678.28 879.16 L1682.9 879.1" fill="none" stroke="rgba(28,4,72,0.66)" stroke-width="1.9"/>
<path d="M1598.37 930.05 L1600.48 929.99 L1602.32 929.81 L1603.95 929.51 L1605.36 929.12 L1606.57 928.63 L1607.58 928.06 L1608.42 927.41 L1609.1 926.7 L1609.64 925.91 L1610.06 925.03 L1610.37 924.07 L1610.56 923.01 L1610.64 921.86 L1610.61 920.62 L1610.47 919.3 L1610.23 917.9 L1609.9 916.44 L1609.49 914.92 L1608.99 913.34 L1608.41 911.71 L1607.78 910.04 L1607.08 908.34 L1606.34 906.6 L1605.55 904.83 L1604.74 903.04 L1603.89 901.24 L1603.03 899.42 L1602.16 897.59 L1601.29 895.77 L1600.43 893.94 L1599.58 892.12 L1598.75 890.32 L1597.95 888.52 L1597.19 886.75 L1596.48 885 L1595.83 883.28 L1595.23 881.59 L1594.71 879.94 L1594.27 878.32 L1593.91 876.74 L1593.65 875.21 L1593.5 873.73 L1593.46 872.3 L1593.56 870.91 L1593.8 869.59 L1594.2 868.33 L1594.77 867.14 L1595.52 866.05 L1596.45 865.07 L1597.56 864.22 L1598.84 863.5 L1600.3 862.9 L1601.94 862.44 L1603.76 862.12 L1605.78 861.92 L1607.97 861.85" fill="none" stroke="rgba(28,4,72,0.72)" stroke-width="1.15"/>
<path d="M1598.43 932.35 L1600.62 932.28 L1602.64 932.08 L1604.46 931.76 L1606.1 931.3 L1607.56 930.7 L1608.84 929.98 L1609.95 929.13 L1610.88 928.15 L1611.63 927.06 L1612.2 925.87 L1612.6 924.61 L1612.84 923.29 L1612.94 921.9 L1612.9 920.47 L1612.75 918.99 L1612.49 917.46 L1612.13 915.88 L1611.69 914.26 L1611.17 912.61 L1610.57 910.92 L1609.92 909.2 L1609.21 907.45 L1608.45 905.68 L1607.65 903.88 L1606.82 902.08 L1605.97 900.26 L1605.11 898.43 L1604.24 896.61 L1603.37 894.78 L1602.51 892.96 L1601.66 891.16 L1600.85 889.37 L1600.06 887.6 L1599.32 885.86 L1598.62 884.16 L1597.99 882.49 L1597.41 880.86 L1596.91 879.28 L1596.5 877.76 L1596.17 876.3 L1595.93 874.9 L1595.79 873.58 L1595.76 872.34 L1595.84 871.19 L1596.03 870.13 L1596.34 869.17 L1596.76 868.29 L1597.3 867.5 L1597.98 866.79 L1598.82 866.14 L1599.83 865.57 L1601.04 865.08 L1602.45 864.69 L1604.08 864.39 L1605.92 864.21 L1608.03 864.15" fill="none" stroke="rgba(28,4,72,0.72)" stroke-width="1.15"/>
<path d="M1598.38 930.05 L1600.58 930.01 L1602.69 929.91 L1604.72 929.73 L1606.68 929.49 L1608.56 929.18 L1610.38 928.82 L1612.14 928.39 L1613.83 927.92 L1615.47 927.39 L1617.06 926.81 L1618.59 926.18 L1620.08 925.51 L1621.52 924.79 L1622.92 924.04 L1624.29 923.25 L1625.62 922.42 L1626.91 921.56 L1628.18 920.67 L1629.42 919.75 L1630.64 918.81 L1631.83 917.85 L1633.01 916.86 L1634.17 915.85 L1635.33 914.84 L1636.47 913.8 L1637.6 912.76 L1638.73 911.71 L1639.87 910.66 L1641 909.6 L1642.14 908.55 L1643.28 907.5 L1644.44 906.45 L1645.61 905.41 L1646.8 904.39 L1648.01 903.38 L1649.24 902.38 L1650.49 901.41 L1651.78 900.46 L1653.09 899.54 L1654.44 898.64 L1655.83 897.78 L1657.25 896.95 L1658.72 896.16 L1660.24 895.41 L1661.8 894.71 L1663.41 894.05 L1665.08 893.44 L1666.8 892.88 L1668.58 892.38 L1670.42 891.94 L1672.33 891.55 L1674.3 891.24 L1676.34 890.98 L1678.45 890.8 L1680.64 890.69 L1682.88 890.65" fill="none" stroke="rgba(28,4,72,0.72)" stroke-width="1.15"/>
<path d="M1598.42 932.35 L1600.66 932.31 L1602.85 932.2 L1604.96 932.02 L1607 931.76 L1608.97 931.45 L1610.88 931.06 L1612.72 930.62 L1614.5 930.12 L1616.22 929.56 L1617.89 928.95 L1619.5 928.29 L1621.06 927.59 L1622.58 926.84 L1624.05 926.05 L1625.47 925.22 L1626.86 924.36 L1628.21 923.46 L1629.52 922.54 L1630.81 921.59 L1632.06 920.62 L1633.29 919.62 L1634.5 918.61 L1635.69 917.59 L1636.86 916.55 L1638.02 915.5 L1639.16 914.45 L1640.3 913.4 L1641.43 912.34 L1642.57 911.29 L1643.7 910.24 L1644.83 909.2 L1645.97 908.16 L1647.13 907.15 L1648.29 906.14 L1649.47 905.15 L1650.66 904.19 L1651.88 903.25 L1653.12 902.33 L1654.39 901.44 L1655.68 900.58 L1657.01 899.75 L1658.38 898.96 L1659.78 898.21 L1661.22 897.49 L1662.71 896.82 L1664.24 896.19 L1665.83 895.61 L1667.47 895.08 L1669.16 894.61 L1670.92 894.18 L1672.74 893.82 L1674.62 893.51 L1676.58 893.27 L1678.61 893.09 L1680.72 892.99 L1682.92 892.95" fill="none" stroke="rgba(28,4,72,0.72)" stroke-width="1.15"/>
<path d="M1598.38 952.25 L1600.58 952.21 L1602.67 952.07 L1604.69 951.86 L1606.64 951.56 L1608.52 951.19 L1610.33 950.74 L1612.08 950.23 L1613.77 949.64 L1615.4 948.99 L1616.98 948.28 L1618.51 947.51 L1619.99 946.69 L1621.43 945.81 L1622.83 944.89 L1624.2 943.92 L1625.53 942.9 L1626.82 941.85 L1628.09 940.75 L1629.33 939.62 L1630.55 938.46 L1631.75 937.28 L1632.93 936.06 L1634.09 934.83 L1635.24 933.58 L1636.38 932.31 L1637.52 931.03 L1638.65 929.74 L1639.78 928.44 L1640.92 927.15 L1642.06 925.85 L1643.2 924.56 L1644.36 923.28 L1645.53 922 L1646.71 920.75 L1647.92 919.5 L1649.15 918.29 L1650.4 917.09 L1651.69 915.93 L1653 914.79 L1654.35 913.69 L1655.74 912.63 L1657.16 911.61 L1658.63 910.64 L1660.15 909.72 L1661.72 908.85 L1663.33 908.04 L1665 907.29 L1666.73 906.6 L1668.52 905.98 L1670.37 905.44 L1672.28 904.97 L1674.26 904.57 L1676.31 904.26 L1678.43 904.03 L1680.63 903.9 L1682.88 903.85" fill="none" stroke="rgba(28,4,72,0.72)" stroke-width="1.15"/>
<path d="M1598.42 954.55 L1600.67 954.5 L1602.87 954.37 L1604.99 954.14 L1607.04 953.83 L1609.02 953.43 L1610.93 952.96 L1612.78 952.42 L1614.57 951.8 L1616.3 951.11 L1617.97 950.36 L1619.58 949.55 L1621.15 948.68 L1622.67 947.76 L1624.14 946.79 L1625.56 945.77 L1626.95 944.71 L1628.3 943.61 L1629.61 942.47 L1630.9 941.31 L1632.15 940.11 L1633.38 938.9 L1634.59 937.65 L1635.77 936.4 L1636.94 935.12 L1638.1 933.84 L1639.24 932.55 L1640.38 931.25 L1641.52 929.96 L1642.65 928.66 L1643.78 927.37 L1644.92 926.09 L1646.06 924.82 L1647.21 923.57 L1648.37 922.34 L1649.55 921.12 L1650.75 919.94 L1651.97 918.78 L1653.21 917.65 L1654.48 916.55 L1655.77 915.5 L1657.1 914.48 L1658.47 913.51 L1659.87 912.59 L1661.31 911.71 L1662.79 910.89 L1664.32 910.12 L1665.9 909.41 L1667.53 908.76 L1669.22 908.17 L1670.97 907.66 L1672.78 907.21 L1674.66 906.84 L1676.61 906.54 L1678.63 906.33 L1680.72 906.19 L1682.92 906.15" fill="none" stroke="rgba(28,4,72,0.72)" stroke-width="1.15"/>
<path d="M1742.71 890.65 L1745.24 890.66 L1747.69 890.71 L1750.06 890.78 L1752.34 890.87 L1754.55 890.99 L1756.68 891.14 L1758.74 891.3 L1760.73 891.49 L1762.65 891.7 L1764.52 891.93 L1766.32 892.18 L1768.07 892.45 L1769.77 892.73 L1771.41 893.03 L1773.01 893.34 L1774.57 893.67 L1776.09 894.01 L1777.57 894.36 L1779.01 894.72 L1780.43 895.09 L1781.82 895.47 L1783.18 895.85 L1784.53 896.25 L1785.85 896.64 L1787.17 897.04 L1788.47 897.44 L1789.76 897.85 L1791.04 898.25 L1792.33 898.66 L1793.62 899.06 L1794.91 899.46 L1796.21 899.86 L1797.52 900.25 L1798.85 900.63 L1800.19 901.01 L1801.56 901.39 L1802.95 901.75 L1804.38 902.11 L1805.83 902.45 L1807.32 902.78 L1808.84 903.1 L1810.41 903.41 L1812.03 903.7 L1813.69 903.98 L1815.41 904.24 L1817.18 904.49 L1819.01 904.71 L1820.9 904.92 L1822.86 905.11 L1824.89 905.27 L1826.99 905.41 L1829.17 905.53 L1831.42 905.63 L1833.76 905.69 L1836.19 905.74 L1838.71 905.75" fill="none" stroke="rgba(28,4,72,0.72)" stroke-width="1.15"/>
<path d="M1742.69 892.95 L1745.21 892.96 L1747.64 893.01 L1749.98 893.07 L1752.23 893.17 L1754.41 893.29 L1756.51 893.43 L1758.54 893.59 L1760.5 893.78 L1762.39 893.99 L1764.22 894.21 L1765.99 894.46 L1767.71 894.72 L1769.37 895 L1770.99 895.29 L1772.56 895.6 L1774.08 895.92 L1775.57 896.25 L1777.02 896.59 L1778.45 896.95 L1779.84 897.31 L1781.21 897.69 L1782.55 898.07 L1783.88 898.45 L1785.19 898.84 L1786.49 899.24 L1787.78 899.64 L1789.07 900.04 L1790.36 900.45 L1791.64 900.85 L1792.93 901.26 L1794.23 901.66 L1795.55 902.06 L1796.87 902.45 L1798.22 902.85 L1799.58 903.23 L1800.97 903.61 L1802.39 903.98 L1803.83 904.34 L1805.31 904.69 L1806.83 905.03 L1808.39 905.36 L1809.99 905.67 L1811.63 905.97 L1813.33 906.25 L1815.08 906.52 L1816.88 906.77 L1818.75 907 L1820.67 907.21 L1822.66 907.4 L1824.72 907.56 L1826.85 907.71 L1829.06 907.83 L1831.34 907.92 L1833.71 907.99 L1836.16 908.04 L1838.69 908.05" fill="none" stroke="rgba(28,4,72,0.72)" stroke-width="1.15"/>
<path d="M1741.4 962.15 L1743.96 962.11 L1746.43 961.99 L1748.81 961.8 L1751.12 961.53 L1753.34 961.2 L1755.48 960.8 L1757.55 960.33 L1759.56 959.81 L1761.49 959.23 L1763.36 958.59 L1765.17 957.9 L1766.93 957.16 L1768.63 956.38 L1770.29 955.55 L1771.89 954.68 L1773.46 953.77 L1774.98 952.83 L1776.46 951.86 L1777.92 950.86 L1779.34 949.83 L1780.74 948.78 L1782.11 947.71 L1783.47 946.62 L1784.8 945.52 L1786.13 944.41 L1787.44 943.28 L1788.75 942.16 L1790.05 941.02 L1791.35 939.89 L1792.66 938.77 L1793.97 937.64 L1795.3 936.53 L1796.63 935.43 L1797.99 934.34 L1799.36 933.27 L1800.76 932.22 L1802.18 931.19 L1803.64 930.19 L1805.12 929.22 L1806.64 928.28 L1808.21 927.37 L1809.81 926.5 L1811.47 925.67 L1813.17 924.89 L1814.93 924.15 L1816.74 923.46 L1818.61 922.82 L1820.54 922.24 L1822.55 921.72 L1824.62 921.25 L1826.76 920.85 L1828.98 920.52 L1831.29 920.25 L1833.67 920.06 L1836.14 919.94 L1838.7 919.9" fill="none" stroke="rgba(28,4,72,0.66)" stroke-width="1.9"/>
<path d="M1408.08 531.05 L1413.32 530.95 L1418.35 530.67 L1423.21 530.2 L1427.89 529.56 L1432.41 528.75 L1436.77 527.78 L1440.98 526.65 L1445.05 525.38 L1448.99 523.97 L1452.79 522.43 L1456.47 520.76 L1460.04 518.97 L1463.51 517.07 L1466.87 515.07 L1470.14 512.96 L1473.32 510.76 L1476.43 508.48 L1479.46 506.12 L1482.42 503.69 L1485.33 501.19 L1488.18 498.63 L1490.99 496.03 L1493.76 493.38 L1496.5 490.69 L1499.22 487.97 L1501.91 485.23 L1504.59 482.47 L1507.27 479.7 L1509.95 476.93 L1512.64 474.17 L1515.35 471.41 L1518.08 468.68 L1520.83 465.97 L1523.63 463.3 L1526.47 460.67 L1529.35 458.08 L1532.3 455.55 L1535.31 453.08 L1538.39 450.68 L1541.54 448.36 L1544.79 446.12 L1548.12 443.98 L1551.55 441.93 L1555.09 439.99 L1558.74 438.16 L1562.5 436.46 L1566.39 434.88 L1570.42 433.44 L1574.58 432.14 L1578.88 430.99 L1583.34 430 L1587.95 429.17 L1592.73 428.52 L1597.67 428.04 L1602.79 427.75 L1608.08 427.65" fill="none" stroke="rgba(28,4,72,0.72)" stroke-width="1.15"/>
<path d="M1408.12 533.35 L1413.41 533.25 L1418.53 532.96 L1423.47 532.48 L1428.25 531.83 L1432.86 531 L1437.32 530.01 L1441.62 528.86 L1445.78 527.56 L1449.81 526.12 L1453.7 524.54 L1457.46 522.84 L1461.11 521.01 L1464.65 519.07 L1468.08 517.02 L1471.41 514.88 L1474.66 512.64 L1477.81 510.32 L1480.89 507.92 L1483.9 505.45 L1486.85 502.92 L1489.73 500.33 L1492.57 497.7 L1495.37 495.03 L1498.12 492.32 L1500.85 489.59 L1503.56 486.83 L1506.25 484.07 L1508.93 481.3 L1511.61 478.53 L1514.29 475.77 L1516.98 473.03 L1519.7 470.31 L1522.44 467.62 L1525.21 464.97 L1528.02 462.37 L1530.87 459.81 L1533.78 457.31 L1536.74 454.88 L1539.77 452.52 L1542.88 450.24 L1546.06 448.04 L1549.33 445.93 L1552.69 443.93 L1556.16 442.03 L1559.73 440.24 L1563.41 438.57 L1567.21 437.03 L1571.15 435.62 L1575.22 434.35 L1579.43 433.22 L1583.79 432.25 L1588.31 431.44 L1592.99 430.8 L1597.85 430.33 L1602.88 430.05 L1608.12 429.95" fill="none" stroke="rgba(28,4,72,0.72)" stroke-width="1.15"/>
<path d="M1408.11 531.05 L1413.38 531.11 L1418.48 531.27 L1423.41 531.54 L1428.16 531.9 L1432.75 532.37 L1437.19 532.93 L1441.47 533.57 L1445.61 534.3 L1449.62 535.11 L1453.49 536 L1457.24 536.95 L1460.88 537.98 L1464.4 539.07 L1467.82 540.22 L1471.15 541.43 L1474.39 542.69 L1477.54 544 L1480.61 545.35 L1483.62 546.74 L1486.56 548.17 L1489.44 549.62 L1492.28 551.11 L1495.07 552.62 L1497.83 554.14 L1500.56 555.68 L1503.26 557.24 L1505.95 558.79 L1508.63 560.36 L1511.31 561.92 L1513.99 563.47 L1516.68 565.02 L1519.39 566.55 L1522.13 568.07 L1524.9 569.56 L1527.71 571.03 L1530.56 572.47 L1533.47 573.88 L1536.43 575.25 L1539.47 576.59 L1542.57 577.87 L1545.76 579.12 L1549.03 580.31 L1552.4 581.44 L1555.87 582.51 L1559.45 583.52 L1563.15 584.47 L1566.97 585.34 L1570.91 586.14 L1575 586.86 L1579.23 587.5 L1583.61 588.05 L1588.14 588.5 L1592.84 588.87 L1597.71 589.13 L1602.76 589.3 L1608.01 589.35" fill="none" stroke="rgba(28,4,72,0.72)" stroke-width="1.15"/>
<path d="M1408.09 533.35 L1413.34 533.4 L1418.39 533.57 L1423.26 533.83 L1427.96 534.2 L1432.49 534.65 L1436.87 535.2 L1441.1 535.84 L1445.19 536.56 L1449.13 537.36 L1452.95 538.23 L1456.65 539.18 L1460.23 540.19 L1463.7 541.26 L1467.07 542.39 L1470.34 543.58 L1473.53 544.83 L1476.63 546.11 L1479.67 547.45 L1482.63 548.82 L1485.54 550.23 L1488.39 551.67 L1491.2 553.14 L1493.97 554.63 L1496.71 556.15 L1499.42 557.68 L1502.11 559.23 L1504.79 560.78 L1507.47 562.34 L1510.15 563.91 L1512.84 565.46 L1515.54 567.02 L1518.27 568.56 L1521.03 570.08 L1523.82 571.59 L1526.66 573.08 L1529.54 574.53 L1532.48 575.96 L1535.49 577.35 L1538.56 578.7 L1541.71 580.01 L1544.95 581.27 L1548.28 582.48 L1551.7 583.63 L1555.22 584.72 L1558.86 585.75 L1562.61 586.7 L1566.48 587.59 L1570.49 588.4 L1574.63 589.13 L1578.91 589.77 L1583.35 590.33 L1587.94 590.8 L1592.69 591.16 L1597.62 591.43 L1602.72 591.59 L1607.99 591.65" fill="none" stroke="rgba(28,4,72,0.72)" stroke-width="1.15"/>
<path d="M1406.59 781.15 L1411.9 781.09 L1417.01 780.92 L1421.94 780.63 L1426.7 780.23 L1431.29 779.74 L1435.72 779.14 L1440 778.45 L1444.14 777.67 L1448.13 776.81 L1452 775.86 L1455.74 774.84 L1459.36 773.74 L1462.87 772.58 L1466.28 771.35 L1469.6 770.06 L1472.83 768.71 L1475.97 767.32 L1479.04 765.87 L1482.04 764.39 L1484.99 762.86 L1487.88 761.3 L1490.72 759.7 L1493.52 758.08 L1496.29 756.44 L1499.04 754.78 L1501.77 753.1 L1504.48 751.42 L1507.19 749.72 L1509.9 748.03 L1512.63 746.34 L1515.36 744.66 L1518.13 742.99 L1520.92 741.33 L1523.74 739.7 L1526.62 738.09 L1529.54 736.51 L1532.52 734.96 L1535.56 733.46 L1538.67 731.99 L1541.87 730.57 L1545.14 729.21 L1548.51 727.9 L1551.97 726.65 L1555.54 725.47 L1559.23 724.35 L1563.03 723.31 L1566.95 722.35 L1571.01 721.47 L1575.2 720.68 L1579.54 719.98 L1584.03 719.38 L1588.68 718.88 L1593.5 718.48 L1598.48 718.19 L1603.65 718.01 L1608.99 717.95" fill="none" stroke="rgba(28,4,72,0.72)" stroke-width="1.15"/>
<path d="M1406.61 783.45 L1411.95 783.39 L1417.12 783.21 L1422.1 782.92 L1426.92 782.52 L1431.57 782.02 L1436.06 781.42 L1440.4 780.72 L1444.59 779.93 L1448.65 779.05 L1452.57 778.09 L1456.37 777.05 L1460.06 775.93 L1463.63 774.75 L1467.09 773.5 L1470.46 772.19 L1473.73 770.83 L1476.93 769.41 L1480.04 767.94 L1483.08 766.44 L1486.06 764.89 L1488.98 763.31 L1491.86 761.7 L1494.68 760.07 L1497.47 758.41 L1500.24 756.74 L1502.97 755.06 L1505.7 753.37 L1508.41 751.68 L1511.12 749.98 L1513.83 748.3 L1516.56 746.62 L1519.31 744.96 L1522.08 743.32 L1524.88 741.7 L1527.72 740.1 L1530.61 738.54 L1533.56 737.01 L1536.56 735.53 L1539.63 734.08 L1542.77 732.69 L1546 731.34 L1549.32 730.05 L1552.73 728.82 L1556.24 727.66 L1559.86 726.56 L1563.6 725.54 L1567.47 724.59 L1571.46 723.73 L1575.6 722.95 L1579.88 722.26 L1584.31 721.66 L1588.9 721.17 L1593.66 720.77 L1598.59 720.48 L1603.7 720.31 L1609.01 720.25" fill="none" stroke="rgba(28,4,72,0.72)" stroke-width="1.15"/>
<path d="M1405.99 917.25 L1411.29 917.18 L1416.38 916.99 L1421.3 916.66 L1426.05 916.22 L1430.63 915.67 L1435.05 915 L1439.31 914.23 L1443.44 913.35 L1447.42 912.38 L1451.27 911.32 L1455 910.17 L1458.62 908.95 L1462.12 907.64 L1465.52 906.26 L1468.83 904.82 L1472.05 903.31 L1475.18 901.74 L1478.25 900.12 L1481.24 898.45 L1484.18 896.74 L1487.06 894.99 L1489.9 893.2 L1492.7 891.38 L1495.46 889.54 L1498.2 887.68 L1500.92 885.8 L1503.63 883.91 L1506.34 882.01 L1509.05 880.11 L1511.76 878.21 L1514.5 876.33 L1517.25 874.45 L1520.04 872.59 L1522.86 870.76 L1525.73 868.96 L1528.64 867.18 L1531.62 865.45 L1534.66 863.76 L1537.76 862.11 L1540.95 860.52 L1544.22 858.99 L1547.59 857.52 L1551.05 856.12 L1554.61 854.79 L1558.29 853.54 L1562.08 852.37 L1566 851.29 L1570.05 850.31 L1574.24 849.42 L1578.58 848.63 L1583.06 847.96 L1587.71 847.39 L1592.52 846.94 L1597.5 846.62 L1602.66 846.42 L1607.99 846.35" fill="none" stroke="rgba(28,4,72,0.72)" stroke-width="1.15"/>
<path d="M1406.01 919.55 L1411.34 919.48 L1416.5 919.28 L1421.48 918.96 L1426.29 918.51 L1430.94 917.94 L1435.42 917.27 L1439.76 916.48 L1443.95 915.59 L1448 914.61 L1451.92 913.53 L1455.71 912.36 L1459.39 911.11 L1462.95 909.78 L1466.41 908.38 L1469.78 906.91 L1473.05 905.38 L1476.24 903.79 L1479.34 902.14 L1482.38 900.45 L1485.36 898.72 L1488.27 896.94 L1491.14 895.14 L1493.96 893.31 L1496.75 891.45 L1499.5 889.57 L1502.24 887.69 L1504.95 885.79 L1507.66 883.89 L1510.37 881.99 L1513.08 880.1 L1515.8 878.22 L1518.54 876.36 L1521.3 874.52 L1524.1 872.7 L1526.94 870.91 L1529.82 869.16 L1532.76 867.45 L1535.75 865.78 L1538.82 864.16 L1541.95 862.59 L1545.17 861.08 L1548.48 859.64 L1551.88 858.26 L1555.38 856.95 L1559 855.73 L1562.73 854.58 L1566.58 853.52 L1570.56 852.55 L1574.69 851.67 L1578.95 850.9 L1583.37 850.23 L1587.95 849.68 L1592.7 849.24 L1597.62 848.91 L1602.71 848.72 L1608.01 848.65" fill="none" stroke="rgba(28,4,72,0.72)" stroke-width="1.15"/>
<circle cx="72.4" cy="268" r="2.3" fill="#fff" stroke="#27252f" stroke-width="1.1"/><circle cx="117.3" cy="255.2" r="2.3" fill="#fff" stroke="#27252f" stroke-width="1.1"/><circle cx="117.3" cy="267.8" r="2.3" fill="#fff" stroke="#27252f" stroke-width="1.1"/><circle cx="117.3" cy="280.8" r="2.3" fill="#fff" stroke="#27252f" stroke-width="1.1"/><rect x="72.4" y="248.2" width="44.9" height="55.1" rx="2.2" fill="url(#gComp)" stroke="#27252f" stroke-width="1.1"/><path d="M72.7 290.6 H117 V301.3 Q117 303.1 115.1 303.1 H74.6 Q72.7 303.1 72.7 301.3 Z" fill="url(#gLock)" stroke="#1c1c1c" stroke-width="0.8"/><text x="94.85" y="299.7" text-anchor="middle" font-size="8.6" fill="#f2f2f2" textLength="23.6" lengthAdjust="spacingAndGlyphs">Locked</text><rect x="73.9" y="249" width="41.9" height="1" fill="#fff" opacity="0.25"/><rect x="86.2" y="249.5" width="15.6" height="39.8" rx="2.2" fill="#3a3a3a" stroke="#1f1f1f" stroke-width="0.9"/><text transform="translate(97.91 269.4) rotate(-90)" text-anchor="middle" font-weight="bold" font-size="11" fill="#fff" textLength="29.5" lengthAdjust="spacingAndGlyphs">SelPV</text><text transform="translate(79.4 271.38) scale(0.86 1)" text-anchor="middle" font-size="9.4" fill="#17172a">G</text><text transform="translate(107.8 258.58) scale(0.86 1)" text-anchor="middle" font-size="9.4" fill="#17172a">G</text><text transform="translate(107.8 271.18) scale(0.86 1)" text-anchor="middle" font-size="9.4" fill="#17172a">P</text><text transform="translate(107.8 284.18) scale(0.86 1)" text-anchor="middle" font-size="9.4" fill="#17172a">I</text>
<circle cx="313.3" cy="307.2" r="2.3" fill="#fff" stroke="#27252f" stroke-width="1.1"/><circle cx="313.3" cy="322.2" r="2.3" fill="#fff" stroke="#27252f" stroke-width="1.1"/><circle cx="357" cy="315.2" r="2.3" fill="#fff" stroke="#27252f" stroke-width="1.1"/><rect x="313.3" y="298.2" width="43.7" height="34.4" rx="2.2" fill="url(#gComp)" stroke="#27252f" stroke-width="1.1"/><rect x="314.8" y="299" width="40.7" height="1" fill="#fff" opacity="0.25"/><rect x="326.3" y="299.5" width="15.4" height="31.8" rx="2.2" fill="#3a3a3a" stroke="#1f1f1f" stroke-width="0.9"/><text transform="translate(337.9 315.4) rotate(-90)" text-anchor="middle" font-weight="bold" font-size="11" fill="#fff" textLength="21.8" lengthAdjust="spacingAndGlyphs">Trim</text><text transform="translate(319.8 310.58) scale(0.86 1)" text-anchor="middle" font-size="9.4" fill="#17172a">S</text><text transform="translate(319.8 325.58) scale(0.86 1)" text-anchor="middle" font-size="9.4" fill="#17172a">T</text><text transform="translate(347.4 318.58) scale(0.86 1)" text-anchor="middle" font-size="9.4" fill="#17172a">R</text>
<circle cx="312.5" cy="500.6" r="2.3" fill="#fff" stroke="#27252f" stroke-width="1.1"/><circle cx="312.5" cy="515.8" r="2.3" fill="#fff" stroke="#27252f" stroke-width="1.1"/><circle cx="355.8" cy="508.4" r="2.3" fill="#fff" stroke="#27252f" stroke-width="1.1"/><rect x="312.5" y="491.8" width="43.3" height="33.2" rx="2.2" fill="url(#gComp)" stroke="#27252f" stroke-width="1.1"/><rect x="314" y="492.6" width="40.3" height="1" fill="#fff" opacity="0.25"/><rect x="325.5" y="493.1" width="15.4" height="30.6" rx="2.2" fill="#3a3a3a" stroke="#1f1f1f" stroke-width="0.9"/><text transform="translate(337.1 508.4) rotate(-90)" text-anchor="middle" font-weight="bold" font-size="11" fill="#fff" textLength="21.8" lengthAdjust="spacingAndGlyphs">Trim</text><text transform="translate(319 503.98) scale(0.86 1)" text-anchor="middle" font-size="9.4" fill="#17172a">S</text><text transform="translate(319 519.18) scale(0.86 1)" text-anchor="middle" font-size="9.4" fill="#17172a">T</text><text transform="translate(346.4 511.78) scale(0.86 1)" text-anchor="middle" font-size="9.4" fill="#17172a">R</text>
<circle cx="458" cy="334.55" r="2.3" fill="#fff" stroke="#27252f" stroke-width="1.1"/><circle cx="501.5" cy="334.55" r="2.3" fill="#fff" stroke="#27252f" stroke-width="1.1"/><rect x="458" y="325.8" width="43.5" height="17.5" rx="2.2" fill="url(#gComp)" stroke="#27252f" stroke-width="1.1"/><rect x="470.6" y="327" width="16" height="15.1" rx="2.2" fill="#3a3a3a" stroke="#1f1f1f" stroke-width="0.9"/><text transform="translate(482.5 334.55) rotate(-90)" text-anchor="middle" font-weight="bold" font-size="11" fill="#fff">Z</text><text transform="translate(464.6 337.93) scale(0.86 1)" text-anchor="middle" font-size="9.4" fill="#17172a">F</text><text transform="translate(492.3 337.93) scale(0.86 1)" text-anchor="middle" font-size="9.4" fill="#17172a">V</text>
<circle cx="457.6" cy="398.75" r="2.3" fill="#fff" stroke="#27252f" stroke-width="1.1"/><circle cx="501.5" cy="398.75" r="2.3" fill="#fff" stroke="#27252f" stroke-width="1.1"/><rect x="457.6" y="390" width="43.9" height="17.5" rx="2.2" fill="url(#gComp)" stroke="#27252f" stroke-width="1.1"/><rect x="470.2" y="391.2" width="16" height="15.1" rx="2.2" fill="#3a3a3a" stroke="#1f1f1f" stroke-width="0.9"/><text transform="translate(482.1 398.75) rotate(-90)" text-anchor="middle" font-weight="bold" font-size="11" fill="#fff">Z</text><text transform="translate(464.2 402.13) scale(0.86 1)" text-anchor="middle" font-size="9.4" fill="#17172a">F</text><text transform="translate(492.3 402.13) scale(0.86 1)" text-anchor="middle" font-size="9.4" fill="#17172a">V</text>
<circle cx="456.8" cy="534.35" r="2.3" fill="#fff" stroke="#27252f" stroke-width="1.1"/><circle cx="500.8" cy="534.35" r="2.3" fill="#fff" stroke="#27252f" stroke-width="1.1"/><rect x="456.8" y="525.5" width="44" height="17.7" rx="2.2" fill="url(#gComp)" stroke="#27252f" stroke-width="1.1"/><rect x="469.4" y="526.7" width="16" height="15.3" rx="2.2" fill="#3a3a3a" stroke="#1f1f1f" stroke-width="0.9"/><text transform="translate(481.3 534.35) rotate(-90)" text-anchor="middle" font-weight="bold" font-size="11" fill="#fff">Z</text><text transform="translate(463.4 537.73) scale(0.86 1)" text-anchor="middle" font-size="9.4" fill="#17172a">F</text><text transform="translate(491.6 537.73) scale(0.86 1)" text-anchor="middle" font-size="9.4" fill="#17172a">V</text>
<circle cx="456.8" cy="600.55" r="2.3" fill="#fff" stroke="#27252f" stroke-width="1.1"/><circle cx="500.8" cy="600.55" r="2.3" fill="#fff" stroke="#27252f" stroke-width="1.1"/><rect x="456.8" y="591.8" width="44" height="17.5" rx="2.2" fill="url(#gComp)" stroke="#27252f" stroke-width="1.1"/><rect x="469.4" y="593" width="16" height="15.1" rx="2.2" fill="#3a3a3a" stroke="#1f1f1f" stroke-width="0.9"/><text transform="translate(481.3 600.55) rotate(-90)" text-anchor="middle" font-weight="bold" font-size="11" fill="#fff">Z</text><text transform="translate(463.4 603.93) scale(0.86 1)" text-anchor="middle" font-size="9.4" fill="#17172a">F</text><text transform="translate(491.6 603.93) scale(0.86 1)" text-anchor="middle" font-size="9.4" fill="#17172a">V</text>
<circle cx="502.5" cy="358.75" r="2.3" fill="#fff" stroke="#27252f" stroke-width="1.1"/><rect x="376" y="352.5" width="126.5" height="12.5" rx="2.4" fill="url(#gTrack)" stroke="#27252f" stroke-width="1.1"/><path d="M378.4 352.5 H425 V365 H378.4 Q376 365 376 362.6 V354.9 Q376 352.5 378.4 352.5 Z" fill="url(#gLbl)" stroke="#27252f" stroke-width="1.1"/><text x="400.8" y="361.85" text-anchor="middle" font-size="9.2" fill="#17172a" textLength="39.6" lengthAdjust="spacingAndGlyphs">Amplitude</text><path d="M431 359.05 H496.5" stroke="#b9b9bd" stroke-width="0.8"/><path d="M431 357.15 V359.15M437.55 357.15 V359.15M444.1 357.15 V359.15M450.65 357.15 V359.15M457.2 357.15 V359.15M463.75 357.15 V359.15M470.3 357.15 V359.15M476.85 357.15 V359.15M483.4 357.15 V359.15M489.95 357.15 V359.15M496.5 357.15 V359.15" stroke="#b9b9bd" stroke-width="0.7"/><text x="441" y="361.75" text-anchor="middle" font-size="8.6" fill="#2a2a3a" stroke="#e2e2e4" stroke-width="2" paint-order="stroke">4</text><path d="M432.5 358.95 l2.1 -2.1 l2.1 2.1 l-2.1 2.1 Z" fill="#fff" stroke="#15151f" stroke-width="1"/>
<circle cx="502.5" cy="422.4" r="2.3" fill="#fff" stroke="#27252f" stroke-width="1.1"/><rect x="376" y="416" width="126.5" height="12.8" rx="2.4" fill="url(#gTrack)" stroke="#27252f" stroke-width="1.1"/><path d="M378.4 416 H425 V428.8 H378.4 Q376 428.8 376 426.4 V418.4 Q376 416 378.4 416 Z" fill="url(#gLbl)" stroke="#27252f" stroke-width="1.1"/><text x="400.8" y="425.5" text-anchor="middle" font-size="9.2" fill="#17172a" textLength="39.6" lengthAdjust="spacingAndGlyphs">Amplitude</text><path d="M431 422.7 H496.5" stroke="#b9b9bd" stroke-width="0.8"/><path d="M431 420.8 V422.8M437.55 420.8 V422.8M444.1 420.8 V422.8M450.65 420.8 V422.8M457.2 420.8 V422.8M463.75 420.8 V422.8M470.3 420.8 V422.8M476.85 420.8 V422.8M483.4 420.8 V422.8M489.95 420.8 V422.8M496.5 420.8 V422.8" stroke="#b9b9bd" stroke-width="0.7"/><text x="450.4" y="425.4" text-anchor="middle" font-size="8.6" fill="#2a2a3a" stroke="#e2e2e4" stroke-width="2" paint-order="stroke">250</text><path d="M461.7 422.6 l2.1 -2.1 l2.1 2.1 l-2.1 2.1 Z" fill="#fff" stroke="#15151f" stroke-width="1"/>
<circle cx="502.5" cy="556.75" r="2.3" fill="#fff" stroke="#27252f" stroke-width="1.1"/><rect x="376.2" y="550.5" width="126.3" height="12.5" rx="2.4" fill="url(#gTrack)" stroke="#27252f" stroke-width="1.1"/><path d="M378.6 550.5 H425 V563 H378.6 Q376.2 563 376.2 560.6 V552.9 Q376.2 550.5 378.6 550.5 Z" fill="url(#gLbl)" stroke="#27252f" stroke-width="1.1"/><text x="400.9" y="559.85" text-anchor="middle" font-size="9.2" fill="#17172a" textLength="39.6" lengthAdjust="spacingAndGlyphs">Amplitude</text><path d="M431 557.05 H496.5" stroke="#b9b9bd" stroke-width="0.8"/><path d="M431 555.15 V557.15M437.55 555.15 V557.15M444.1 555.15 V557.15M450.65 555.15 V557.15M457.2 555.15 V557.15M463.75 555.15 V557.15M470.3 555.15 V557.15M476.85 555.15 V557.15M483.4 555.15 V557.15M489.95 555.15 V557.15M496.5 555.15 V557.15" stroke="#b9b9bd" stroke-width="0.7"/><text x="441" y="559.75" text-anchor="middle" font-size="8.6" fill="#2a2a3a" stroke="#e2e2e4" stroke-width="2" paint-order="stroke">4</text><path d="M432.5 556.95 l2.1 -2.1 l2.1 2.1 l-2.1 2.1 Z" fill="#fff" stroke="#15151f" stroke-width="1"/>
<circle cx="501.8" cy="623.25" r="2.3" fill="#fff" stroke="#27252f" stroke-width="1.1"/><rect x="375.2" y="617" width="126.6" height="12.5" rx="2.4" fill="url(#gTrack)" stroke="#27252f" stroke-width="1.1"/><path d="M377.6 617 H424.2 V629.5 H377.6 Q375.2 629.5 375.2 627.1 V619.4 Q375.2 617 377.6 617 Z" fill="url(#gLbl)" stroke="#27252f" stroke-width="1.1"/><text x="400" y="626.35" text-anchor="middle" font-size="9.2" fill="#17172a" textLength="39.6" lengthAdjust="spacingAndGlyphs">Amplitude</text><path d="M430.2 623.55 H495.8" stroke="#b9b9bd" stroke-width="0.8"/><path d="M430.2 621.65 V623.65M436.76 621.65 V623.65M443.32 621.65 V623.65M449.88 621.65 V623.65M456.44 621.65 V623.65M463 621.65 V623.65M469.56 621.65 V623.65M476.12 621.65 V623.65M482.68 621.65 V623.65M489.24 621.65 V623.65M495.8 621.65 V623.65" stroke="#b9b9bd" stroke-width="0.7"/><text x="474.2" y="626.25" text-anchor="middle" font-size="8.6" fill="#2a2a3a" stroke="#e2e2e4" stroke-width="2" paint-order="stroke">242</text><path d="M459.9 623.45 l2.1 -2.1 l2.1 2.1 l-2.1 2.1 Z" fill="#fff" stroke="#15151f" stroke-width="1"/>
<circle cx="656" cy="338.9" r="2.3" fill="#fff" stroke="#27252f" stroke-width="1.1"/><circle cx="656" cy="354.4" r="2.3" fill="#fff" stroke="#27252f" stroke-width="1.1"/><circle cx="700.7" cy="346.4" r="2.3" fill="#fff" stroke="#27252f" stroke-width="1.1"/><rect x="656" y="330.6" width="44.7" height="33.2" rx="2.2" fill="url(#gComp)" stroke="#27252f" stroke-width="1.1"/><rect x="657.5" y="331.4" width="41.7" height="1" fill="#fff" opacity="0.25"/><rect x="670.1" y="331.9" width="15.7" height="30.6" rx="2.2" fill="#3a3a3a" stroke="#1f1f1f" stroke-width="0.9"/><text transform="translate(681.86 347.2) rotate(-90)" text-anchor="middle" font-weight="bold" font-size="11" fill="#fff" textLength="23.4" lengthAdjust="spacingAndGlyphs">Amp</text><text transform="translate(663.2 342.28) scale(0.86 1)" text-anchor="middle" font-size="9.4" fill="#17172a">V</text><text transform="translate(663.2 357.78) scale(0.86 1)" text-anchor="middle" font-size="9.4" fill="#17172a">A</text><text transform="translate(690.6 349.78) scale(0.86 1)" text-anchor="middle" font-size="9.4" fill="#17172a">V</text>
<circle cx="656" cy="402.4" r="2.3" fill="#fff" stroke="#27252f" stroke-width="1.1"/><circle cx="656" cy="418.4" r="2.3" fill="#fff" stroke="#27252f" stroke-width="1.1"/><circle cx="700.7" cy="410" r="2.3" fill="#fff" stroke="#27252f" stroke-width="1.1"/><rect x="656" y="393.7" width="44.7" height="33.5" rx="2.2" fill="url(#gComp)" stroke="#27252f" stroke-width="1.1"/><rect x="657.5" y="394.5" width="41.7" height="1" fill="#fff" opacity="0.25"/><rect x="670.1" y="395" width="15.7" height="30.9" rx="2.2" fill="#3a3a3a" stroke="#1f1f1f" stroke-width="0.9"/><text transform="translate(681.86 410.45) rotate(-90)" text-anchor="middle" font-weight="bold" font-size="11" fill="#fff" textLength="23.4" lengthAdjust="spacingAndGlyphs">Amp</text><text transform="translate(663.2 405.78) scale(0.86 1)" text-anchor="middle" font-size="9.4" fill="#17172a">V</text><text transform="translate(663.2 421.78) scale(0.86 1)" text-anchor="middle" font-size="9.4" fill="#17172a">A</text><text transform="translate(690.6 413.38) scale(0.86 1)" text-anchor="middle" font-size="9.4" fill="#17172a">V</text>
<circle cx="656.6" cy="534.1" r="2.3" fill="#fff" stroke="#27252f" stroke-width="1.1"/><circle cx="656.6" cy="550" r="2.3" fill="#fff" stroke="#27252f" stroke-width="1.1"/><circle cx="701.6" cy="541.6" r="2.3" fill="#fff" stroke="#27252f" stroke-width="1.1"/><rect x="656.6" y="525.7" width="45" height="33.7" rx="2.2" fill="url(#gComp)" stroke="#27252f" stroke-width="1.1"/><rect x="658.1" y="526.5" width="42" height="1" fill="#fff" opacity="0.25"/><rect x="670.7" y="527" width="15.6" height="31.1" rx="2.2" fill="#3a3a3a" stroke="#1f1f1f" stroke-width="0.9"/><text transform="translate(682.4 542.55) rotate(-90)" text-anchor="middle" font-weight="bold" font-size="11" fill="#fff" textLength="23.4" lengthAdjust="spacingAndGlyphs">Amp</text><text transform="translate(663.8 537.48) scale(0.86 1)" text-anchor="middle" font-size="9.4" fill="#17172a">V</text><text transform="translate(663.8 553.38) scale(0.86 1)" text-anchor="middle" font-size="9.4" fill="#17172a">A</text><text transform="translate(691.4 544.98) scale(0.86 1)" text-anchor="middle" font-size="9.4" fill="#17172a">V</text>
<circle cx="657.3" cy="600" r="2.3" fill="#fff" stroke="#27252f" stroke-width="1.1"/><circle cx="657.3" cy="615.7" r="2.3" fill="#fff" stroke="#27252f" stroke-width="1.1"/><circle cx="702.5" cy="608.1" r="2.3" fill="#fff" stroke="#27252f" stroke-width="1.1"/><rect x="657.3" y="591.6" width="45.2" height="33.7" rx="2.2" fill="url(#gComp)" stroke="#27252f" stroke-width="1.1"/><rect x="658.8" y="592.4" width="42.2" height="1" fill="#fff" opacity="0.25"/><rect x="671.6" y="592.9" width="15.6" height="31.1" rx="2.2" fill="#3a3a3a" stroke="#1f1f1f" stroke-width="0.9"/><text transform="translate(683.31 608.45) rotate(-90)" text-anchor="middle" font-weight="bold" font-size="11" fill="#fff" textLength="23.4" lengthAdjust="spacingAndGlyphs">Amp</text><text transform="translate(664.6 603.38) scale(0.86 1)" text-anchor="middle" font-size="9.4" fill="#17172a">V</text><text transform="translate(664.6 619.08) scale(0.86 1)" text-anchor="middle" font-size="9.4" fill="#17172a">A</text><text transform="translate(692.2 611.48) scale(0.86 1)" text-anchor="middle" font-size="9.4" fill="#17172a">V</text>
<circle cx="755.3" cy="311.2" r="2.3" fill="#fff" stroke="#27252f" stroke-width="1.1"/><circle cx="755.3" cy="325.3" r="2.3" fill="#fff" stroke="#27252f" stroke-width="1.1"/><circle cx="800.1" cy="318.7" r="2.3" fill="#fff" stroke="#27252f" stroke-width="1.1"/><rect x="755.3" y="304.2" width="44.8" height="30.4" rx="2.2" fill="url(#gComp)" stroke="#27252f" stroke-width="1.1"/><rect x="756.8" y="305" width="41.8" height="1" fill="#fff" opacity="0.25"/><rect x="769.6" y="305.5" width="15.8" height="27.8" rx="2.2" fill="#3a3a3a" stroke="#1f1f1f" stroke-width="0.9"/><text transform="translate(781.4 319.4) rotate(-90)" text-anchor="middle" font-weight="bold" font-size="11" fill="#fff" textLength="21.6" lengthAdjust="spacingAndGlyphs">Extr</text><text transform="translate(762.6 314.58) scale(0.86 1)" text-anchor="middle" font-size="9.4" fill="#17172a">B</text><text transform="translate(762.6 328.68) scale(0.86 1)" text-anchor="middle" font-size="9.4" fill="#17172a">D</text><text transform="translate(790.4 322.08) scale(0.86 1)" text-anchor="middle" font-size="9.4" fill="#17172a">E</text>
<circle cx="752.1" cy="503.5" r="2.3" fill="#fff" stroke="#27252f" stroke-width="1.1"/><circle cx="752.1" cy="517.2" r="2.3" fill="#fff" stroke="#27252f" stroke-width="1.1"/><circle cx="796.7" cy="510.5" r="2.3" fill="#fff" stroke="#27252f" stroke-width="1.1"/><rect x="752.1" y="496.4" width="44.6" height="30.1" rx="2.2" fill="url(#gComp)" stroke="#27252f" stroke-width="1.1"/><rect x="753.6" y="497.2" width="41.6" height="1" fill="#fff" opacity="0.25"/><rect x="766.6" y="497.7" width="15.6" height="27.5" rx="2.2" fill="#3a3a3a" stroke="#1f1f1f" stroke-width="0.9"/><text transform="translate(778.31 511.45) rotate(-90)" text-anchor="middle" font-weight="bold" font-size="11" fill="#fff" textLength="21.6" lengthAdjust="spacingAndGlyphs">Extr</text><text transform="translate(759.6 506.88) scale(0.86 1)" text-anchor="middle" font-size="9.4" fill="#17172a">B</text><text transform="translate(759.6 520.58) scale(0.86 1)" text-anchor="middle" font-size="9.4" fill="#17172a">D</text><text transform="translate(787.2 513.88) scale(0.86 1)" text-anchor="middle" font-size="9.4" fill="#17172a">E</text>
<circle cx="890.6" cy="400.6" r="2.3" fill="#fff" stroke="#27252f" stroke-width="1.1"/><circle cx="890.6" cy="419" r="2.3" fill="#fff" stroke="#27252f" stroke-width="1.1"/><circle cx="937.1" cy="400.6" r="2.3" fill="#fff" stroke="#27252f" stroke-width="1.1"/><circle cx="937.1" cy="419" r="2.3" fill="#fff" stroke="#27252f" stroke-width="1.1"/><rect x="890.6" y="391.2" width="46.5" height="39" rx="2.2" fill="url(#gComp)" stroke="#27252f" stroke-width="1.1"/><rect x="892.1" y="392" width="43.5" height="1" fill="#fff" opacity="0.25"/><rect x="904.7" y="392.5" width="16" height="36.4" rx="2.2" fill="#3a3a3a" stroke="#1f1f1f" stroke-width="0.9"/><text transform="translate(916.61 410.7) rotate(-90)" text-anchor="middle" font-weight="bold" font-size="11" fill="#fff" textLength="30" lengthAdjust="spacingAndGlyphs">Move</text><text transform="translate(898 403.98) scale(0.86 1)" text-anchor="middle" font-size="9.4" fill="#17172a">G</text><text transform="translate(898 422.38) scale(0.86 1)" text-anchor="middle" font-size="9.4" fill="#17172a">T</text><text transform="translate(926.2 403.98) scale(0.86 1)" text-anchor="middle" font-size="9.4" fill="#17172a">G</text><text transform="translate(926.2 422.38) scale(0.86 1)" text-anchor="middle" font-size="9.4" fill="#17172a">X</text>
<circle cx="894.3" cy="568.9" r="2.3" fill="#fff" stroke="#27252f" stroke-width="1.1"/><circle cx="894.3" cy="587.7" r="2.3" fill="#fff" stroke="#27252f" stroke-width="1.1"/><circle cx="939.9" cy="568.9" r="2.3" fill="#fff" stroke="#27252f" stroke-width="1.1"/><circle cx="939.9" cy="587.7" r="2.3" fill="#fff" stroke="#27252f" stroke-width="1.1"/><rect x="894.3" y="559.5" width="45.6" height="39.5" rx="2.2" fill="url(#gComp)" stroke="#27252f" stroke-width="1.1"/><rect x="895.8" y="560.3" width="42.6" height="1" fill="#fff" opacity="0.25"/><rect x="907.6" y="560.8" width="16.3" height="36.9" rx="2.2" fill="#3a3a3a" stroke="#1f1f1f" stroke-width="0.9"/><text transform="translate(919.65 579.25) rotate(-90)" text-anchor="middle" font-weight="bold" font-size="11" fill="#fff" textLength="30" lengthAdjust="spacingAndGlyphs">Move</text><text transform="translate(901 572.28) scale(0.86 1)" text-anchor="middle" font-size="9.4" fill="#17172a">G</text><text transform="translate(901 591.08) scale(0.86 1)" text-anchor="middle" font-size="9.4" fill="#17172a">T</text><text transform="translate(929.4 572.28) scale(0.86 1)" text-anchor="middle" font-size="9.4" fill="#17172a">G</text><text transform="translate(929.4 591.08) scale(0.86 1)" text-anchor="middle" font-size="9.4" fill="#17172a">X</text>
<circle cx="1162.5" cy="462.6" r="2.3" fill="#fff" stroke="#27252f" stroke-width="1.1"/><circle cx="1207.2" cy="447.3" r="2.3" fill="#fff" stroke="#27252f" stroke-width="1.1"/><circle cx="1207.2" cy="462.6" r="2.3" fill="#fff" stroke="#27252f" stroke-width="1.1"/><circle cx="1207.2" cy="477.4" r="2.3" fill="#fff" stroke="#27252f" stroke-width="1.1"/><rect x="1162.5" y="439.1" width="44.7" height="48.5" rx="2.2" fill="url(#gComp)" stroke="#27252f" stroke-width="1.1"/><rect x="1164" y="439.9" width="41.7" height="1" fill="#fff" opacity="0.25"/><rect x="1176.1" y="440.4" width="15.6" height="45.9" rx="2.2" fill="#3a3a3a" stroke="#1f1f1f" stroke-width="0.9"/><text transform="translate(1187.81 463.35) rotate(-90)" text-anchor="middle" font-weight="bold" font-size="11" fill="#fff" textLength="38.6" lengthAdjust="spacingAndGlyphs">DeBrep</text><text transform="translate(1169.8 465.98) scale(0.86 1)" text-anchor="middle" font-size="9.4" fill="#17172a">B</text><text transform="translate(1196.8 450.68) scale(0.86 1)" text-anchor="middle" font-size="9.4" fill="#17172a">F</text><text transform="translate(1196.8 465.98) scale(0.86 1)" text-anchor="middle" font-size="9.4" fill="#17172a">E</text><text transform="translate(1196.8 480.78) scale(0.86 1)" text-anchor="middle" font-size="9.4" fill="#17172a">V</text>
<circle cx="1085.6" cy="799.75" r="2.3" fill="#fff" stroke="#27252f" stroke-width="1.1"/><rect x="975.6" y="793" width="110" height="13.5" rx="2.4" fill="url(#gTrack)" stroke="#27252f" stroke-width="1.1"/><path d="M978 793 H1008.5 V806.5 H978 Q975.6 806.5 975.6 804.1 V795.4 Q975.6 793 978 793 Z" fill="url(#gLbl)" stroke="#27252f" stroke-width="1.1"/><text x="992.35" y="802.85" text-anchor="middle" font-size="9.2" fill="#17172a" textLength="23.6" lengthAdjust="spacingAndGlyphs">Count</text><path d="M1014.5 800.05 H1079.6" stroke="#b9b9bd" stroke-width="0.8"/><path d="M1014.5 798.15 V800.15M1021.01 798.15 V800.15M1027.52 798.15 V800.15M1034.03 798.15 V800.15M1040.54 798.15 V800.15M1047.05 798.15 V800.15M1053.56 798.15 V800.15M1060.07 798.15 V800.15M1066.58 798.15 V800.15M1073.09 798.15 V800.15M1079.6 798.15 V800.15" stroke="#b9b9bd" stroke-width="0.7"/><text x="1063.8" y="802.75" text-anchor="middle" font-size="8.6" fill="#2a2a3a" stroke="#e2e2e4" stroke-width="2" paint-order="stroke">1128</text><path d="M1076.7 799.95 l2.1 -2.1 l2.1 2.1 l-2.1 2.1 Z" fill="#fff" stroke="#15151f" stroke-width="1"/>
<circle cx="1117.8" cy="772.9" r="2.3" fill="#fff" stroke="#27252f" stroke-width="1.1"/><circle cx="1117.8" cy="785.9" r="2.3" fill="#fff" stroke="#27252f" stroke-width="1.1"/><circle cx="1117.8" cy="799.2" r="2.3" fill="#fff" stroke="#27252f" stroke-width="1.1"/><circle cx="1163" cy="785.9" r="2.3" fill="#fff" stroke="#27252f" stroke-width="1.1"/><rect x="1117.8" y="765.3" width="45.2" height="41.2" rx="2.2" fill="url(#gComp)" stroke="#27252f" stroke-width="1.1"/><rect x="1119.3" y="766.1" width="42.2" height="1" fill="#fff" opacity="0.25"/><rect x="1132.9" y="766.6" width="15.5" height="38.6" rx="2.2" fill="#3a3a3a" stroke="#1f1f1f" stroke-width="0.9"/><text transform="translate(1144.56 785.9) rotate(-90)" text-anchor="middle" font-weight="bold" font-size="11" fill="#fff" textLength="30.8" lengthAdjust="spacingAndGlyphs">Series</text><text transform="translate(1125.4 776.28) scale(0.86 1)" text-anchor="middle" font-size="9.4" fill="#17172a">S</text><text transform="translate(1125.4 789.28) scale(0.86 1)" text-anchor="middle" font-size="9.4" fill="#17172a">N</text><text transform="translate(1125.4 802.58) scale(0.86 1)" text-anchor="middle" font-size="9.4" fill="#17172a">C</text><text transform="translate(1153.2 789.28) scale(0.86 1)" text-anchor="middle" font-size="9.4" fill="#17172a">S</text>
<circle cx="1211.3" cy="729.4" r="2.3" fill="#fff" stroke="#27252f" stroke-width="1.1"/><circle cx="1211.3" cy="742.5" r="2.3" fill="#fff" stroke="#27252f" stroke-width="1.1"/><circle cx="1211.3" cy="755.4" r="2.3" fill="#fff" stroke="#27252f" stroke-width="1.1"/><circle cx="1255.7" cy="742.5" r="2.3" fill="#fff" stroke="#27252f" stroke-width="1.1"/><rect x="1211.3" y="721.9" width="44.4" height="40.9" rx="2.2" fill="url(#gComp)" stroke="#27252f" stroke-width="1.1"/><rect x="1212.8" y="722.7" width="41.4" height="1" fill="#fff" opacity="0.25"/><rect x="1228.3" y="723.2" width="15.6" height="38.3" rx="2.2" fill="#3a3a3a" stroke="#1f1f1f" stroke-width="0.9"/><text transform="translate(1240 742.35) rotate(-90)" text-anchor="middle" font-weight="bold" font-size="11" fill="#fff" textLength="22.4" lengthAdjust="spacingAndGlyphs">Item</text><text transform="translate(1221 732.78) scale(0.86 1)" text-anchor="middle" font-size="9.4" fill="#17172a">L</text><text transform="translate(1221 745.88) scale(0.86 1)" text-anchor="middle" font-size="9.4" fill="#17172a">i</text><text transform="translate(1221 758.78) scale(0.86 1)" text-anchor="middle" font-size="9.4" fill="#17172a">W</text><text transform="translate(1247.8 745.88) scale(0.86 1)" text-anchor="middle" font-size="9.4" fill="#17172a">i</text>
<circle cx="1360" cy="545.2" r="2.3" fill="#fff" stroke="#27252f" stroke-width="1.1"/><circle cx="1405.6" cy="532.2" r="2.3" fill="#fff" stroke="#27252f" stroke-width="1.1"/><circle cx="1405.6" cy="545.2" r="2.3" fill="#fff" stroke="#27252f" stroke-width="1.1"/><circle cx="1405.6" cy="558" r="2.3" fill="#fff" stroke="#27252f" stroke-width="1.1"/><rect x="1360" y="524.6" width="45.6" height="55.2" rx="2.2" fill="url(#gComp)" stroke="#27252f" stroke-width="1.1"/><path d="M1360.3 567 H1405.3 V577.8 Q1405.3 579.6 1403.4 579.6 H1362.2 Q1360.3 579.6 1360.3 577.8 Z" fill="url(#gLock)" stroke="#1c1c1c" stroke-width="0.8"/><text x="1382.8" y="576.2" text-anchor="middle" font-size="8.6" fill="#f2f2f2" textLength="23.6" lengthAdjust="spacingAndGlyphs">Locked</text><rect x="1361.5" y="525.4" width="42.6" height="1" fill="#fff" opacity="0.25"/><rect x="1374.3" y="525.9" width="15.3" height="39.8" rx="2.2" fill="#3a3a3a" stroke="#1f1f1f" stroke-width="0.9"/><text transform="translate(1385.85 545.8) rotate(-90)" text-anchor="middle" font-weight="bold" font-size="11" fill="#fff" textLength="29.5" lengthAdjust="spacingAndGlyphs">SelPV</text><text transform="translate(1367.2 548.58) scale(0.86 1)" text-anchor="middle" font-size="9.4" fill="#17172a">G</text><text transform="translate(1395.8 535.58) scale(0.86 1)" text-anchor="middle" font-size="9.4" fill="#17172a">G</text><text transform="translate(1395.8 548.58) scale(0.86 1)" text-anchor="middle" font-size="9.4" fill="#17172a">P</text><text transform="translate(1395.8 561.38) scale(0.86 1)" text-anchor="middle" font-size="9.4" fill="#17172a">I</text>
<circle cx="1478.8" cy="535.3" r="2.3" fill="#fff" stroke="#27252f" stroke-width="1.1"/><circle cx="1510.6" cy="535.3" r="2.3" fill="#fff" stroke="#27252f" stroke-width="1.1"/><rect x="1478.8" y="528.8" width="31.8" height="13" rx="3" fill="url(#gLbl)" stroke="#27252f" stroke-width="1.1"/><text transform="translate(1494.7 538.74) scale(0.86 1)" text-anchor="middle" font-size="9" fill="#17172a">Pt</text>
<circle cx="1553.2" cy="513.4" r="2.3" fill="#fff" stroke="#27252f" stroke-width="1.1"/><circle cx="1553.2" cy="527.8" r="2.3" fill="#fff" stroke="#27252f" stroke-width="1.1"/><circle cx="1553.2" cy="542" r="2.3" fill="#fff" stroke="#27252f" stroke-width="1.1"/><circle cx="1598.4" cy="516.3" r="2.3" fill="#fff" stroke="#27252f" stroke-width="1.1"/><circle cx="1598.4" cy="538.5" r="2.3" fill="#fff" stroke="#27252f" stroke-width="1.1"/><rect x="1553.2" y="505.4" width="45.2" height="45.1" rx="2.2" fill="url(#gComp)" stroke="#27252f" stroke-width="1.1"/><rect x="1554.7" y="506.2" width="42.2" height="1" fill="#fff" opacity="0.25"/><rect x="1567.4" y="506.7" width="15.2" height="42.5" rx="2.2" fill="#3a3a3a" stroke="#1f1f1f" stroke-width="0.9"/><text transform="translate(1578.9 527.95) rotate(-90)" text-anchor="middle" font-weight="bold" font-size="11" fill="#fff" textLength="35" lengthAdjust="spacingAndGlyphs">Vec2Pt</text><text transform="translate(1560.7 516.78) scale(0.86 1)" text-anchor="middle" font-size="9.4" fill="#17172a">A</text><text transform="translate(1560.7 531.18) scale(0.86 1)" text-anchor="middle" font-size="9.4" fill="#17172a">B</text><text transform="translate(1560.7 545.38) scale(0.86 1)" text-anchor="middle" font-size="9.4" fill="#17172a">U</text><text transform="translate(1588.4 519.68) scale(0.86 1)" text-anchor="middle" font-size="9.4" fill="#17172a">V</text><text transform="translate(1588.4 541.88) scale(0.86 1)" text-anchor="middle" font-size="9.4" fill="#17172a">L</text>
<circle cx="1610.6" cy="428.8" r="2.3" fill="#fff" stroke="#27252f" stroke-width="1.1"/><circle cx="1610.6" cy="444.3" r="2.3" fill="#fff" stroke="#27252f" stroke-width="1.1"/><path d="M1612.6 419.7 H1640.6 L1643.6 422.11 L1640.6 424.53 L1643.6 426.94 L1640.6 429.36 L1643.6 431.77 L1640.6 434.19 L1643.6 436.6 L1640.6 439.01 L1643.6 441.43 L1640.6 443.84 L1643.6 446.26 L1640.6 448.67 L1643.6 451.09 L1640.6 453.5 H1612.6 Q1610.6 453.5 1610.6 451.5 V421.7 Q1610.6 419.7 1612.6 419.7 Z" fill="url(#gComp)" stroke="#27252f" stroke-width="1.1" stroke-linejoin="round"/><rect x="1612.1" y="420.5" width="30" height="1" fill="#fff" opacity="0.25"/><rect x="1624.4" y="421" width="16.6" height="31.2" rx="2.2" fill="#3a3a3a" stroke="#1f1f1f" stroke-width="0.9"/><text transform="translate(1636.6 436.6) rotate(-90)" text-anchor="middle" font-weight="bold" font-size="11" fill="#fff" textLength="22.8" lengthAdjust="spacingAndGlyphs">VDis</text><text transform="translate(1618.2 432.18) scale(0.86 1)" text-anchor="middle" font-size="9.4" fill="#17172a">A</text><text transform="translate(1618.2 447.68) scale(0.86 1)" text-anchor="middle" font-size="9.4" fill="#17172a">V</text>
<circle cx="1687.9" cy="484.5" r="2.3" fill="#fff" stroke="#27252f" stroke-width="1.1"/><circle cx="1687.9" cy="497.2" r="2.3" fill="#fff" stroke="#27252f" stroke-width="1.1"/><circle cx="1687.9" cy="510.4" r="2.3" fill="#fff" stroke="#27252f" stroke-width="1.1"/><circle cx="1741.9" cy="497.2" r="2.3" fill="#fff" stroke="#27252f" stroke-width="1.1"/><rect x="1687.9" y="476.9" width="54" height="41" rx="2.2" fill="url(#gComp)" stroke="#27252f" stroke-width="1.1"/><rect x="1689.4" y="477.7" width="51" height="1" fill="#fff" opacity="0.25"/><rect x="1712.5" y="478.2" width="15.5" height="38.4" rx="2.2" fill="#3a3a3a" stroke="#1f1f1f" stroke-width="0.9"/><text transform="translate(1724.15 497.4) rotate(-90)" text-anchor="middle" font-weight="bold" font-size="11" fill="#fff" textLength="21.2" lengthAdjust="spacingAndGlyphs">Line</text><text transform="translate(1706.7 487.88) scale(0.86 1)" text-anchor="middle" font-size="9.4" fill="#17172a">S</text><text transform="translate(1706.7 500.58) scale(0.86 1)" text-anchor="middle" font-size="9.4" fill="#17172a">D</text><text transform="translate(1706.7 513.78) scale(0.86 1)" text-anchor="middle" font-size="9.4" fill="#17172a">L</text><text transform="translate(1733.1 500.58) scale(0.86 1)" text-anchor="middle" font-size="9.4" fill="#17172a">L</text>
<rect x="1690.1" y="493.5" width="7.4" height="7.4" fill="#ecebe4" stroke="#55536a" stroke-width="0.7"/><path d="M1692 495.4 l3.6 3.6 m0 -3.6 l-3.6 3.6" stroke="#55536a" stroke-width="0.9"/>
<circle cx="1738.9" cy="544.9" r="2.3" fill="#fff" stroke="#27252f" stroke-width="1.1"/><rect x="1627.7" y="538.5" width="111.2" height="12.8" rx="2.4" fill="url(#gTrack)" stroke="#27252f" stroke-width="1.1"/><path d="M1630.1 538.5 H1661.6 V551.3 H1630.1 Q1627.7 551.3 1627.7 548.9 V540.9 Q1627.7 538.5 1630.1 538.5 Z" fill="url(#gLbl)" stroke="#27252f" stroke-width="1.1"/><text x="1644.95" y="548" text-anchor="middle" font-size="9.2" fill="#17172a" textLength="25.6" lengthAdjust="spacingAndGlyphs">Radius</text><path d="M1667.6 545.2 H1732.9" stroke="#b9b9bd" stroke-width="0.8"/><path d="M1667.6 543.3 V545.3M1674.13 543.3 V545.3M1680.66 543.3 V545.3M1687.19 543.3 V545.3M1693.72 543.3 V545.3M1700.25 543.3 V545.3M1706.78 543.3 V545.3M1713.31 543.3 V545.3M1719.84 543.3 V545.3M1726.37 543.3 V545.3M1732.9 543.3 V545.3" stroke="#b9b9bd" stroke-width="0.7"/><text x="1692" y="547.9" text-anchor="middle" font-size="8.6" fill="#2a2a3a" stroke="#e2e2e4" stroke-width="2" paint-order="stroke">3</text><path d="M1697.9 545.1 l2.1 -2.1 l2.1 2.1 l-2.1 2.1 Z" fill="#fff" stroke="#15151f" stroke-width="1"/>
<circle cx="1838.4" cy="518.4" r="2.3" fill="#fff" stroke="#27252f" stroke-width="1.1"/><circle cx="1838.4" cy="531.4" r="2.3" fill="#fff" stroke="#27252f" stroke-width="1.1"/><circle cx="1838.4" cy="544.2" r="2.3" fill="#fff" stroke="#27252f" stroke-width="1.1"/><circle cx="1882.7" cy="531.4" r="2.3" fill="#fff" stroke="#27252f" stroke-width="1.1"/><rect x="1838.4" y="510.9" width="44.3" height="40.4" rx="2.2" fill="url(#gComp)" stroke="#27252f" stroke-width="1.1"/><rect x="1839.9" y="511.7" width="41.3" height="1" fill="#fff" opacity="0.25"/><rect x="1851.8" y="512.2" width="15.5" height="37.8" rx="2.2" fill="#3a3a3a" stroke="#1f1f1f" stroke-width="0.9"/><text transform="translate(1863.46 531.1) rotate(-90)" text-anchor="middle" font-weight="bold" font-size="11" fill="#fff" textLength="22.8" lengthAdjust="spacingAndGlyphs">Pipe</text><text transform="translate(1845.2 521.78) scale(0.86 1)" text-anchor="middle" font-size="9.4" fill="#17172a">C</text><text transform="translate(1845.2 534.78) scale(0.86 1)" text-anchor="middle" font-size="9.4" fill="#17172a">R</text><text transform="translate(1845.2 547.58) scale(0.86 1)" text-anchor="middle" font-size="9.4" fill="#17172a">E</text><text transform="translate(1872 534.78) scale(0.86 1)" text-anchor="middle" font-size="9.4" fill="#17172a">P</text>
<circle cx="1357.9" cy="675.6" r="2.3" fill="#fff" stroke="#27252f" stroke-width="1.1"/><circle cx="1403.5" cy="662.6" r="2.3" fill="#fff" stroke="#27252f" stroke-width="1.1"/><circle cx="1403.5" cy="675.6" r="2.3" fill="#fff" stroke="#27252f" stroke-width="1.1"/><circle cx="1403.5" cy="688.4" r="2.3" fill="#fff" stroke="#27252f" stroke-width="1.1"/><rect x="1357.9" y="655" width="45.6" height="54.3" rx="2.2" fill="url(#gComp)" stroke="#27252f" stroke-width="1.1"/><path d="M1358.2 697.4 H1403.2 V707.3 Q1403.2 709.1 1401.3 709.1 H1360.1 Q1358.2 709.1 1358.2 707.3 Z" fill="url(#gLock)" stroke="#1c1c1c" stroke-width="0.8"/><text x="1380.7" y="705.7" text-anchor="middle" font-size="8.6" fill="#f2f2f2" textLength="23.6" lengthAdjust="spacingAndGlyphs">Locked</text><rect x="1359.4" y="655.8" width="42.6" height="1" fill="#fff" opacity="0.25"/><rect x="1372.2" y="656.3" width="15.3" height="39.8" rx="2.2" fill="#3a3a3a" stroke="#1f1f1f" stroke-width="0.9"/><text transform="translate(1383.75 676.2) rotate(-90)" text-anchor="middle" font-weight="bold" font-size="11" fill="#fff" textLength="29.5" lengthAdjust="spacingAndGlyphs">SelPV</text><text transform="translate(1365.1 678.98) scale(0.86 1)" text-anchor="middle" font-size="9.4" fill="#17172a">G</text><text transform="translate(1393.7 665.98) scale(0.86 1)" text-anchor="middle" font-size="9.4" fill="#17172a">G</text><text transform="translate(1393.7 678.98) scale(0.86 1)" text-anchor="middle" font-size="9.4" fill="#17172a">P</text><text transform="translate(1393.7 691.78) scale(0.86 1)" text-anchor="middle" font-size="9.4" fill="#17172a">I</text>
<circle cx="1479.1" cy="663.1" r="2.3" fill="#fff" stroke="#27252f" stroke-width="1.1"/><circle cx="1511.4" cy="663.1" r="2.3" fill="#fff" stroke="#27252f" stroke-width="1.1"/><rect x="1479.1" y="656.7" width="32.3" height="12.8" rx="3" fill="url(#gLbl)" stroke="#27252f" stroke-width="1.1"/><text transform="translate(1495.25 666.54) scale(0.86 1)" text-anchor="middle" font-size="9" fill="#17172a">Pt</text>
<circle cx="1552" cy="644.6" r="2.3" fill="#fff" stroke="#27252f" stroke-width="1.1"/><circle cx="1552" cy="659" r="2.3" fill="#fff" stroke="#27252f" stroke-width="1.1"/><circle cx="1552" cy="673.2" r="2.3" fill="#fff" stroke="#27252f" stroke-width="1.1"/><circle cx="1596.7" cy="647.5" r="2.3" fill="#fff" stroke="#27252f" stroke-width="1.1"/><circle cx="1596.7" cy="669.7" r="2.3" fill="#fff" stroke="#27252f" stroke-width="1.1"/><rect x="1552" y="636.6" width="44.7" height="45.1" rx="2.2" fill="url(#gComp)" stroke="#27252f" stroke-width="1.1"/><rect x="1553.5" y="637.4" width="41.7" height="1" fill="#fff" opacity="0.25"/><rect x="1566.2" y="637.9" width="15.2" height="42.5" rx="2.2" fill="#3a3a3a" stroke="#1f1f1f" stroke-width="0.9"/><text transform="translate(1577.71 659.15) rotate(-90)" text-anchor="middle" font-weight="bold" font-size="11" fill="#fff" textLength="35" lengthAdjust="spacingAndGlyphs">Vec2Pt</text><text transform="translate(1559.5 647.98) scale(0.86 1)" text-anchor="middle" font-size="9.4" fill="#17172a">A</text><text transform="translate(1559.5 662.38) scale(0.86 1)" text-anchor="middle" font-size="9.4" fill="#17172a">B</text><text transform="translate(1559.5 676.58) scale(0.86 1)" text-anchor="middle" font-size="9.4" fill="#17172a">U</text><text transform="translate(1587.2 650.88) scale(0.86 1)" text-anchor="middle" font-size="9.4" fill="#17172a">V</text><text transform="translate(1587.2 673.08) scale(0.86 1)" text-anchor="middle" font-size="9.4" fill="#17172a">L</text>
<circle cx="1610.5" cy="590.5" r="2.3" fill="#fff" stroke="#27252f" stroke-width="1.1"/><circle cx="1610.5" cy="606" r="2.3" fill="#fff" stroke="#27252f" stroke-width="1.1"/><path d="M1612.5 581.4 H1640.4 L1643.4 583.75 L1640.4 586.1 L1643.4 588.45 L1640.4 590.8 L1643.4 593.15 L1640.4 595.5 L1643.4 597.85 L1640.4 600.2 L1643.4 602.55 L1640.4 604.9 L1643.4 607.25 L1640.4 609.6 L1643.4 611.95 L1640.4 614.3 H1612.5 Q1610.5 614.3 1610.5 612.3 V583.4 Q1610.5 581.4 1612.5 581.4 Z" fill="url(#gComp)" stroke="#27252f" stroke-width="1.1" stroke-linejoin="round"/><rect x="1612" y="582.2" width="29.9" height="1" fill="#fff" opacity="0.25"/><rect x="1624.3" y="582.7" width="16.6" height="30.3" rx="2.2" fill="#3a3a3a" stroke="#1f1f1f" stroke-width="0.9"/><text transform="translate(1636.5 597.85) rotate(-90)" text-anchor="middle" font-weight="bold" font-size="11" fill="#fff" textLength="22.8" lengthAdjust="spacingAndGlyphs">VDis</text><text transform="translate(1618.1 593.88) scale(0.86 1)" text-anchor="middle" font-size="9.4" fill="#17172a">A</text><text transform="translate(1618.1 609.38) scale(0.86 1)" text-anchor="middle" font-size="9.4" fill="#17172a">V</text>
<circle cx="1685.7" cy="614.4" r="2.3" fill="#fff" stroke="#27252f" stroke-width="1.1"/><circle cx="1685.7" cy="627.1" r="2.3" fill="#fff" stroke="#27252f" stroke-width="1.1"/><circle cx="1685.7" cy="640.3" r="2.3" fill="#fff" stroke="#27252f" stroke-width="1.1"/><circle cx="1740.2" cy="627.1" r="2.3" fill="#fff" stroke="#27252f" stroke-width="1.1"/><rect x="1685.7" y="606.8" width="54.5" height="40.7" rx="2.2" fill="url(#gComp)" stroke="#27252f" stroke-width="1.1"/><rect x="1687.2" y="607.6" width="51.5" height="1" fill="#fff" opacity="0.25"/><rect x="1710.3" y="608.1" width="15.5" height="38.1" rx="2.2" fill="#3a3a3a" stroke="#1f1f1f" stroke-width="0.9"/><text transform="translate(1721.95 627.15) rotate(-90)" text-anchor="middle" font-weight="bold" font-size="11" fill="#fff" textLength="21.2" lengthAdjust="spacingAndGlyphs">Line</text><text transform="translate(1704.5 617.78) scale(0.86 1)" text-anchor="middle" font-size="9.4" fill="#17172a">S</text><text transform="translate(1704.5 630.48) scale(0.86 1)" text-anchor="middle" font-size="9.4" fill="#17172a">D</text><text transform="translate(1704.5 643.68) scale(0.86 1)" text-anchor="middle" font-size="9.4" fill="#17172a">L</text><text transform="translate(1730.9 630.48) scale(0.86 1)" text-anchor="middle" font-size="9.4" fill="#17172a">L</text>
<rect x="1687.9" y="623.4" width="7.4" height="7.4" fill="#ecebe4" stroke="#55536a" stroke-width="0.7"/><path d="M1689.8 625.3 l3.6 3.6 m0 -3.6 l-3.6 3.6" stroke="#55536a" stroke-width="0.9"/>
<circle cx="1736.4" cy="673.3" r="2.3" fill="#fff" stroke="#27252f" stroke-width="1.1"/><rect x="1624.3" y="667" width="112.1" height="12.6" rx="2.4" fill="url(#gTrack)" stroke="#27252f" stroke-width="1.1"/><path d="M1626.7 667 H1658.6 V679.6 H1626.7 Q1624.3 679.6 1624.3 677.2 V669.4 Q1624.3 667 1626.7 667 Z" fill="url(#gLbl)" stroke="#27252f" stroke-width="1.1"/><text x="1641.75" y="676.4" text-anchor="middle" font-size="9.2" fill="#17172a" textLength="25.6" lengthAdjust="spacingAndGlyphs">Radius</text><path d="M1664.6 673.6 H1730.4" stroke="#b9b9bd" stroke-width="0.8"/><path d="M1664.6 671.7 V673.7M1671.18 671.7 V673.7M1677.76 671.7 V673.7M1684.34 671.7 V673.7M1690.92 671.7 V673.7M1697.5 671.7 V673.7M1704.08 671.7 V673.7M1710.66 671.7 V673.7M1717.24 671.7 V673.7M1723.82 671.7 V673.7M1730.4 671.7 V673.7" stroke="#b9b9bd" stroke-width="0.7"/><text x="1688.7" y="676.3" text-anchor="middle" font-size="8.6" fill="#2a2a3a" stroke="#e2e2e4" stroke-width="2" paint-order="stroke">3</text><path d="M1695.3 673.5 l2.1 -2.1 l2.1 2.1 l-2.1 2.1 Z" fill="#fff" stroke="#15151f" stroke-width="1"/>
<circle cx="1838.4" cy="646.1" r="2.3" fill="#fff" stroke="#27252f" stroke-width="1.1"/><circle cx="1838.4" cy="659.1" r="2.3" fill="#fff" stroke="#27252f" stroke-width="1.1"/><circle cx="1838.4" cy="671.9" r="2.3" fill="#fff" stroke="#27252f" stroke-width="1.1"/><circle cx="1882.7" cy="659.1" r="2.3" fill="#fff" stroke="#27252f" stroke-width="1.1"/><rect x="1838.4" y="638.6" width="44.3" height="41" rx="2.2" fill="url(#gComp)" stroke="#27252f" stroke-width="1.1"/><rect x="1839.9" y="639.4" width="41.3" height="1" fill="#fff" opacity="0.25"/><rect x="1851.8" y="639.9" width="15.5" height="38.4" rx="2.2" fill="#3a3a3a" stroke="#1f1f1f" stroke-width="0.9"/><text transform="translate(1863.46 659.1) rotate(-90)" text-anchor="middle" font-weight="bold" font-size="11" fill="#fff" textLength="22.8" lengthAdjust="spacingAndGlyphs">Pipe</text><text transform="translate(1845.2 649.48) scale(0.86 1)" text-anchor="middle" font-size="9.4" fill="#17172a">C</text><text transform="translate(1845.2 662.48) scale(0.86 1)" text-anchor="middle" font-size="9.4" fill="#17172a">R</text><text transform="translate(1845.2 675.28) scale(0.86 1)" text-anchor="middle" font-size="9.4" fill="#17172a">E</text><text transform="translate(1872 662.48) scale(0.86 1)" text-anchor="middle" font-size="9.4" fill="#17172a">P</text>
<circle cx="1358.7" cy="795.3" r="2.3" fill="#fff" stroke="#27252f" stroke-width="1.1"/><circle cx="1404.1" cy="782.3" r="2.3" fill="#fff" stroke="#27252f" stroke-width="1.1"/><circle cx="1404.1" cy="795.3" r="2.3" fill="#fff" stroke="#27252f" stroke-width="1.1"/><circle cx="1404.1" cy="808.1" r="2.3" fill="#fff" stroke="#27252f" stroke-width="1.1"/><rect x="1358.7" y="774.7" width="45.4" height="54.4" rx="2.2" fill="url(#gComp)" stroke="#27252f" stroke-width="1.1"/><path d="M1359 817.1 H1403.8 V827.1 Q1403.8 828.9 1401.9 828.9 H1360.9 Q1359 828.9 1359 827.1 Z" fill="url(#gLock)" stroke="#1c1c1c" stroke-width="0.8"/><text x="1381.4" y="825.5" text-anchor="middle" font-size="8.6" fill="#f2f2f2" textLength="23.6" lengthAdjust="spacingAndGlyphs">Locked</text><rect x="1360.2" y="775.5" width="42.4" height="1" fill="#fff" opacity="0.25"/><rect x="1373" y="776" width="15.3" height="39.8" rx="2.2" fill="#3a3a3a" stroke="#1f1f1f" stroke-width="0.9"/><text transform="translate(1384.56 795.9) rotate(-90)" text-anchor="middle" font-weight="bold" font-size="11" fill="#fff" textLength="29.5" lengthAdjust="spacingAndGlyphs">SelPV</text><text transform="translate(1365.9 798.68) scale(0.86 1)" text-anchor="middle" font-size="9.4" fill="#17172a">G</text><text transform="translate(1394.5 785.68) scale(0.86 1)" text-anchor="middle" font-size="9.4" fill="#17172a">G</text><text transform="translate(1394.5 798.68) scale(0.86 1)" text-anchor="middle" font-size="9.4" fill="#17172a">P</text><text transform="translate(1394.5 811.48) scale(0.86 1)" text-anchor="middle" font-size="9.4" fill="#17172a">I</text>
<circle cx="1476.3" cy="819.2" r="2.3" fill="#fff" stroke="#27252f" stroke-width="1.1"/><circle cx="1508.6" cy="819.2" r="2.3" fill="#fff" stroke="#27252f" stroke-width="1.1"/><rect x="1476.3" y="812.9" width="32.3" height="12.6" rx="3" fill="url(#gLbl)" stroke="#27252f" stroke-width="1.1"/><text transform="translate(1492.45 822.64) scale(0.86 1)" text-anchor="middle" font-size="9" fill="#17172a">Pt</text>
<circle cx="1550.2" cy="799.7" r="2.3" fill="#fff" stroke="#27252f" stroke-width="1.1"/><circle cx="1550.2" cy="814.1" r="2.3" fill="#fff" stroke="#27252f" stroke-width="1.1"/><circle cx="1550.2" cy="828.3" r="2.3" fill="#fff" stroke="#27252f" stroke-width="1.1"/><circle cx="1594.7" cy="802.6" r="2.3" fill="#fff" stroke="#27252f" stroke-width="1.1"/><circle cx="1594.7" cy="824.8" r="2.3" fill="#fff" stroke="#27252f" stroke-width="1.1"/><rect x="1550.2" y="791.7" width="44.5" height="45.5" rx="2.2" fill="url(#gComp)" stroke="#27252f" stroke-width="1.1"/><rect x="1551.7" y="792.5" width="41.5" height="1" fill="#fff" opacity="0.25"/><rect x="1564.4" y="793" width="15.2" height="42.9" rx="2.2" fill="#3a3a3a" stroke="#1f1f1f" stroke-width="0.9"/><text transform="translate(1575.9 814.45) rotate(-90)" text-anchor="middle" font-weight="bold" font-size="11" fill="#fff" textLength="35" lengthAdjust="spacingAndGlyphs">Vec2Pt</text><text transform="translate(1557.7 803.08) scale(0.86 1)" text-anchor="middle" font-size="9.4" fill="#17172a">A</text><text transform="translate(1557.7 817.48) scale(0.86 1)" text-anchor="middle" font-size="9.4" fill="#17172a">B</text><text transform="translate(1557.7 831.68) scale(0.86 1)" text-anchor="middle" font-size="9.4" fill="#17172a">U</text><text transform="translate(1585.4 805.98) scale(0.86 1)" text-anchor="middle" font-size="9.4" fill="#17172a">V</text><text transform="translate(1585.4 828.18) scale(0.86 1)" text-anchor="middle" font-size="9.4" fill="#17172a">L</text>
<circle cx="1611.5" cy="719.1" r="2.3" fill="#fff" stroke="#27252f" stroke-width="1.1"/><circle cx="1611.5" cy="734.6" r="2.3" fill="#fff" stroke="#27252f" stroke-width="1.1"/><path d="M1613.5 710 H1641.4 L1644.4 712.37 L1641.4 714.74 L1644.4 717.11 L1641.4 719.49 L1644.4 721.86 L1641.4 724.23 L1644.4 726.6 L1641.4 728.97 L1644.4 731.34 L1641.4 733.71 L1644.4 736.09 L1641.4 738.46 L1644.4 740.83 L1641.4 743.2 H1613.5 Q1611.5 743.2 1611.5 741.2 V712 Q1611.5 710 1613.5 710 Z" fill="url(#gComp)" stroke="#27252f" stroke-width="1.1" stroke-linejoin="round"/><rect x="1613" y="710.8" width="29.9" height="1" fill="#fff" opacity="0.25"/><rect x="1625.3" y="711.3" width="16.6" height="30.6" rx="2.2" fill="#3a3a3a" stroke="#1f1f1f" stroke-width="0.9"/><text transform="translate(1637.5 726.6) rotate(-90)" text-anchor="middle" font-weight="bold" font-size="11" fill="#fff" textLength="22.8" lengthAdjust="spacingAndGlyphs">VDis</text><text transform="translate(1619.1 722.48) scale(0.86 1)" text-anchor="middle" font-size="9.4" fill="#17172a">A</text><text transform="translate(1619.1 737.98) scale(0.86 1)" text-anchor="middle" font-size="9.4" fill="#17172a">V</text>
<circle cx="1685" cy="742.4" r="2.3" fill="#fff" stroke="#27252f" stroke-width="1.1"/><circle cx="1685" cy="755.1" r="2.3" fill="#fff" stroke="#27252f" stroke-width="1.1"/><circle cx="1685" cy="768.3" r="2.3" fill="#fff" stroke="#27252f" stroke-width="1.1"/><circle cx="1739.7" cy="755.1" r="2.3" fill="#fff" stroke="#27252f" stroke-width="1.1"/><rect x="1685" y="734.8" width="54.7" height="40.8" rx="2.2" fill="url(#gComp)" stroke="#27252f" stroke-width="1.1"/><rect x="1686.5" y="735.6" width="51.7" height="1" fill="#fff" opacity="0.25"/><rect x="1709.6" y="736.1" width="15.5" height="38.2" rx="2.2" fill="#3a3a3a" stroke="#1f1f1f" stroke-width="0.9"/><text transform="translate(1721.25 755.2) rotate(-90)" text-anchor="middle" font-weight="bold" font-size="11" fill="#fff" textLength="21.2" lengthAdjust="spacingAndGlyphs">Line</text><text transform="translate(1703.8 745.78) scale(0.86 1)" text-anchor="middle" font-size="9.4" fill="#17172a">S</text><text transform="translate(1703.8 758.48) scale(0.86 1)" text-anchor="middle" font-size="9.4" fill="#17172a">D</text><text transform="translate(1703.8 771.68) scale(0.86 1)" text-anchor="middle" font-size="9.4" fill="#17172a">L</text><text transform="translate(1730.2 758.48) scale(0.86 1)" text-anchor="middle" font-size="9.4" fill="#17172a">L</text>
<rect x="1687.2" y="751.4" width="7.4" height="7.4" fill="#ecebe4" stroke="#55536a" stroke-width="0.7"/><path d="M1689.1 753.3 l3.6 3.6 m0 -3.6 l-3.6 3.6" stroke="#55536a" stroke-width="0.9"/>
<circle cx="1741.9" cy="815.85" r="2.3" fill="#fff" stroke="#27252f" stroke-width="1.1"/><rect x="1630.5" y="809.6" width="111.4" height="12.5" rx="2.4" fill="url(#gTrack)" stroke="#27252f" stroke-width="1.1"/><path d="M1632.9 809.6 H1664.4 V822.1 H1632.9 Q1630.5 822.1 1630.5 819.7 V812 Q1630.5 809.6 1632.9 809.6 Z" fill="url(#gLbl)" stroke="#27252f" stroke-width="1.1"/><text x="1647.75" y="818.95" text-anchor="middle" font-size="9.2" fill="#17172a" textLength="25.6" lengthAdjust="spacingAndGlyphs">Radius</text><path d="M1670.4 816.15 H1735.9" stroke="#b9b9bd" stroke-width="0.8"/><path d="M1670.4 814.25 V816.25M1676.95 814.25 V816.25M1683.5 814.25 V816.25M1690.05 814.25 V816.25M1696.6 814.25 V816.25M1703.15 814.25 V816.25M1709.7 814.25 V816.25M1716.25 814.25 V816.25M1722.8 814.25 V816.25M1729.35 814.25 V816.25M1735.9 814.25 V816.25" stroke="#b9b9bd" stroke-width="0.7"/><text x="1695" y="818.85" text-anchor="middle" font-size="8.6" fill="#2a2a3a" stroke="#e2e2e4" stroke-width="2" paint-order="stroke">3</text><path d="M1701.6 816.05 l2.1 -2.1 l2.1 2.1 l-2.1 2.1 Z" fill="#fff" stroke="#15151f" stroke-width="1"/>
<circle cx="1839.2" cy="777.4" r="2.3" fill="#fff" stroke="#27252f" stroke-width="1.1"/><circle cx="1839.2" cy="790.4" r="2.3" fill="#fff" stroke="#27252f" stroke-width="1.1"/><circle cx="1839.2" cy="803.2" r="2.3" fill="#fff" stroke="#27252f" stroke-width="1.1"/><circle cx="1883.9" cy="790.4" r="2.3" fill="#fff" stroke="#27252f" stroke-width="1.1"/><rect x="1839.2" y="769.9" width="44.7" height="40.8" rx="2.2" fill="url(#gComp)" stroke="#27252f" stroke-width="1.1"/><rect x="1840.7" y="770.7" width="41.7" height="1" fill="#fff" opacity="0.25"/><rect x="1852.6" y="771.2" width="15.5" height="38.2" rx="2.2" fill="#3a3a3a" stroke="#1f1f1f" stroke-width="0.9"/><text transform="translate(1864.26 790.3) rotate(-90)" text-anchor="middle" font-weight="bold" font-size="11" fill="#fff" textLength="22.8" lengthAdjust="spacingAndGlyphs">Pipe</text><text transform="translate(1846 780.78) scale(0.86 1)" text-anchor="middle" font-size="9.4" fill="#17172a">C</text><text transform="translate(1846 793.78) scale(0.86 1)" text-anchor="middle" font-size="9.4" fill="#17172a">R</text><text transform="translate(1846 806.58) scale(0.86 1)" text-anchor="middle" font-size="9.4" fill="#17172a">E</text><text transform="translate(1872.8 793.78) scale(0.86 1)" text-anchor="middle" font-size="9.4" fill="#17172a">P</text>
<circle cx="1357.9" cy="931.4" r="2.3" fill="#fff" stroke="#27252f" stroke-width="1.1"/><circle cx="1403.5" cy="918.4" r="2.3" fill="#fff" stroke="#27252f" stroke-width="1.1"/><circle cx="1403.5" cy="931.4" r="2.3" fill="#fff" stroke="#27252f" stroke-width="1.1"/><circle cx="1403.5" cy="944.2" r="2.3" fill="#fff" stroke="#27252f" stroke-width="1.1"/><rect x="1357.9" y="910.8" width="45.6" height="54.4" rx="2.2" fill="url(#gComp)" stroke="#27252f" stroke-width="1.1"/><path d="M1358.2 953.2 H1403.2 V963.2 Q1403.2 965 1401.3 965 H1360.1 Q1358.2 965 1358.2 963.2 Z" fill="url(#gLock)" stroke="#1c1c1c" stroke-width="0.8"/><text x="1380.7" y="961.6" text-anchor="middle" font-size="8.6" fill="#f2f2f2" textLength="23.6" lengthAdjust="spacingAndGlyphs">Locked</text><rect x="1359.4" y="911.6" width="42.6" height="1" fill="#fff" opacity="0.25"/><rect x="1372.2" y="912.1" width="15.3" height="39.8" rx="2.2" fill="#3a3a3a" stroke="#1f1f1f" stroke-width="0.9"/><text transform="translate(1383.75 932) rotate(-90)" text-anchor="middle" font-weight="bold" font-size="11" fill="#fff" textLength="29.5" lengthAdjust="spacingAndGlyphs">SelPV</text><text transform="translate(1365.1 934.78) scale(0.86 1)" text-anchor="middle" font-size="9.4" fill="#17172a">G</text><text transform="translate(1393.7 921.78) scale(0.86 1)" text-anchor="middle" font-size="9.4" fill="#17172a">G</text><text transform="translate(1393.7 934.78) scale(0.86 1)" text-anchor="middle" font-size="9.4" fill="#17172a">P</text><text transform="translate(1393.7 947.58) scale(0.86 1)" text-anchor="middle" font-size="9.4" fill="#17172a">I</text>
<circle cx="1472.1" cy="945.45" r="2.3" fill="#fff" stroke="#27252f" stroke-width="1.1"/><circle cx="1504.7" cy="945.45" r="2.3" fill="#fff" stroke="#27252f" stroke-width="1.1"/><rect x="1472.1" y="939.1" width="32.6" height="12.7" rx="3" fill="url(#gLbl)" stroke="#27252f" stroke-width="1.1"/><text transform="translate(1488.4 948.89) scale(0.86 1)" text-anchor="middle" font-size="9" fill="#17172a">Pt</text>
<circle cx="1550.7" cy="928.3" r="2.3" fill="#fff" stroke="#27252f" stroke-width="1.1"/><circle cx="1550.7" cy="942.7" r="2.3" fill="#fff" stroke="#27252f" stroke-width="1.1"/><circle cx="1550.7" cy="956.9" r="2.3" fill="#fff" stroke="#27252f" stroke-width="1.1"/><circle cx="1595.9" cy="931.2" r="2.3" fill="#fff" stroke="#27252f" stroke-width="1.1"/><circle cx="1595.9" cy="953.4" r="2.3" fill="#fff" stroke="#27252f" stroke-width="1.1"/><rect x="1550.7" y="920.3" width="45.2" height="45.5" rx="2.2" fill="url(#gComp)" stroke="#27252f" stroke-width="1.1"/><rect x="1552.2" y="921.1" width="42.2" height="1" fill="#fff" opacity="0.25"/><rect x="1564.9" y="921.6" width="15.2" height="42.9" rx="2.2" fill="#3a3a3a" stroke="#1f1f1f" stroke-width="0.9"/><text transform="translate(1576.4 943.05) rotate(-90)" text-anchor="middle" font-weight="bold" font-size="11" fill="#fff" textLength="35" lengthAdjust="spacingAndGlyphs">Vec2Pt</text><text transform="translate(1558.2 931.68) scale(0.86 1)" text-anchor="middle" font-size="9.4" fill="#17172a">A</text><text transform="translate(1558.2 946.08) scale(0.86 1)" text-anchor="middle" font-size="9.4" fill="#17172a">B</text><text transform="translate(1558.2 960.28) scale(0.86 1)" text-anchor="middle" font-size="9.4" fill="#17172a">U</text><text transform="translate(1585.9 934.58) scale(0.86 1)" text-anchor="middle" font-size="9.4" fill="#17172a">V</text><text transform="translate(1585.9 956.78) scale(0.86 1)" text-anchor="middle" font-size="9.4" fill="#17172a">L</text>
<circle cx="1610.5" cy="847.5" r="2.3" fill="#fff" stroke="#27252f" stroke-width="1.1"/><circle cx="1610.5" cy="863" r="2.3" fill="#fff" stroke="#27252f" stroke-width="1.1"/><path d="M1612.5 838.4 H1640.3 L1643.3 840.76 L1640.3 843.13 L1643.3 845.49 L1640.3 847.86 L1643.3 850.22 L1640.3 852.59 L1643.3 854.95 L1640.3 857.31 L1643.3 859.68 L1640.3 862.04 L1643.3 864.41 L1640.3 866.77 L1643.3 869.14 L1640.3 871.5 H1612.5 Q1610.5 871.5 1610.5 869.5 V840.4 Q1610.5 838.4 1612.5 838.4 Z" fill="url(#gComp)" stroke="#27252f" stroke-width="1.1" stroke-linejoin="round"/><rect x="1612" y="839.2" width="29.8" height="1" fill="#fff" opacity="0.25"/><rect x="1624.3" y="839.7" width="16.6" height="30.5" rx="2.2" fill="#3a3a3a" stroke="#1f1f1f" stroke-width="0.9"/><text transform="translate(1636.5 854.95) rotate(-90)" text-anchor="middle" font-weight="bold" font-size="11" fill="#fff" textLength="22.8" lengthAdjust="spacingAndGlyphs">VDis</text><text transform="translate(1618.1 850.88) scale(0.86 1)" text-anchor="middle" font-size="9.4" fill="#17172a">A</text><text transform="translate(1618.1 866.38) scale(0.86 1)" text-anchor="middle" font-size="9.4" fill="#17172a">V</text>
<circle cx="1685.4" cy="879.1" r="2.3" fill="#fff" stroke="#27252f" stroke-width="1.1"/><circle cx="1685.4" cy="891.8" r="2.3" fill="#fff" stroke="#27252f" stroke-width="1.1"/><circle cx="1685.4" cy="905" r="2.3" fill="#fff" stroke="#27252f" stroke-width="1.1"/><circle cx="1740.2" cy="891.8" r="2.3" fill="#fff" stroke="#27252f" stroke-width="1.1"/><rect x="1685.4" y="871.5" width="54.8" height="41" rx="2.2" fill="url(#gComp)" stroke="#27252f" stroke-width="1.1"/><rect x="1686.9" y="872.3" width="51.8" height="1" fill="#fff" opacity="0.25"/><rect x="1710" y="872.8" width="15.5" height="38.4" rx="2.2" fill="#3a3a3a" stroke="#1f1f1f" stroke-width="0.9"/><text transform="translate(1721.65 892) rotate(-90)" text-anchor="middle" font-weight="bold" font-size="11" fill="#fff" textLength="21.2" lengthAdjust="spacingAndGlyphs">Line</text><text transform="translate(1704.2 882.48) scale(0.86 1)" text-anchor="middle" font-size="9.4" fill="#17172a">S</text><text transform="translate(1704.2 895.18) scale(0.86 1)" text-anchor="middle" font-size="9.4" fill="#17172a">D</text><text transform="translate(1704.2 908.38) scale(0.86 1)" text-anchor="middle" font-size="9.4" fill="#17172a">L</text><text transform="translate(1730.6 895.18) scale(0.86 1)" text-anchor="middle" font-size="9.4" fill="#17172a">L</text>
<rect x="1687.6" y="888.1" width="7.4" height="7.4" fill="#ecebe4" stroke="#55536a" stroke-width="0.7"/><path d="M1689.5 890 l3.6 3.6 m0 -3.6 l-3.6 3.6" stroke="#55536a" stroke-width="0.9"/>
<circle cx="1738.9" cy="962.15" r="2.3" fill="#fff" stroke="#27252f" stroke-width="1.1"/><rect x="1627.7" y="955.8" width="111.2" height="12.7" rx="2.4" fill="url(#gTrack)" stroke="#27252f" stroke-width="1.1"/><path d="M1630.1 955.8 H1661.6 V968.5 H1630.1 Q1627.7 968.5 1627.7 966.1 V958.2 Q1627.7 955.8 1630.1 955.8 Z" fill="url(#gLbl)" stroke="#27252f" stroke-width="1.1"/><text x="1644.95" y="965.25" text-anchor="middle" font-size="9.2" fill="#17172a" textLength="25.6" lengthAdjust="spacingAndGlyphs">Radius</text><path d="M1667.6 962.45 H1732.9" stroke="#b9b9bd" stroke-width="0.8"/><path d="M1667.6 960.55 V962.55M1674.13 960.55 V962.55M1680.66 960.55 V962.55M1687.19 960.55 V962.55M1693.72 960.55 V962.55M1700.25 960.55 V962.55M1706.78 960.55 V962.55M1713.31 960.55 V962.55M1719.84 960.55 V962.55M1726.37 960.55 V962.55M1732.9 960.55 V962.55" stroke="#b9b9bd" stroke-width="0.7"/><text x="1691.7" y="965.15" text-anchor="middle" font-size="8.6" fill="#2a2a3a" stroke="#e2e2e4" stroke-width="2" paint-order="stroke">3</text><path d="M1697.9 962.35 l2.1 -2.1 l2.1 2.1 l-2.1 2.1 Z" fill="#fff" stroke="#15151f" stroke-width="1"/>
<circle cx="1841.2" cy="906.9" r="2.3" fill="#fff" stroke="#27252f" stroke-width="1.1"/><circle cx="1841.2" cy="919.9" r="2.3" fill="#fff" stroke="#27252f" stroke-width="1.1"/><circle cx="1841.2" cy="932.7" r="2.3" fill="#fff" stroke="#27252f" stroke-width="1.1"/><circle cx="1886.5" cy="919.9" r="2.3" fill="#fff" stroke="#27252f" stroke-width="1.1"/><rect x="1841.2" y="899.4" width="45.3" height="41" rx="2.2" fill="url(#gComp)" stroke="#27252f" stroke-width="1.1"/><rect x="1842.7" y="900.2" width="42.3" height="1" fill="#fff" opacity="0.25"/><rect x="1854.6" y="900.7" width="15.5" height="38.4" rx="2.2" fill="#3a3a3a" stroke="#1f1f1f" stroke-width="0.9"/><text transform="translate(1866.26 919.9) rotate(-90)" text-anchor="middle" font-weight="bold" font-size="11" fill="#fff" textLength="22.8" lengthAdjust="spacingAndGlyphs">Pipe</text><text transform="translate(1848 910.28) scale(0.86 1)" text-anchor="middle" font-size="9.4" fill="#17172a">C</text><text transform="translate(1848 923.28) scale(0.86 1)" text-anchor="middle" font-size="9.4" fill="#17172a">R</text><text transform="translate(1848 936.08) scale(0.86 1)" text-anchor="middle" font-size="9.4" fill="#17172a">E</text><text transform="translate(1874.8 923.28) scale(0.86 1)" text-anchor="middle" font-size="9.4" fill="#17172a">P</text>
<text x="25" y="226.6" font-size="16.7" fill="#0a0a0a" stroke="#0a0a0a" stroke-width="0.4" textLength="150.6" lengthAdjust="spacingAndGlyphs">Izabrane perforacije</text>
<text x="305" y="285" font-size="16.7" fill="#0a0a0a" stroke="#0a0a0a" stroke-width="0.4" textLength="134.5" lengthAdjust="spacingAndGlyphs">Krov ( pleksiglas )</text>
<text x="304" y="475.8" font-size="16.7" fill="#0a0a0a" stroke="#0a0a0a" stroke-width="0.4" textLength="175" lengthAdjust="spacingAndGlyphs">Potkonstrukcija ( čelik )</text>
<text x="1156.5" y="389.4" font-size="16.7" fill="#0a0a0a" stroke="#0a0a0a" stroke-width="0.4" textLength="176.1" lengthAdjust="spacingAndGlyphs">Stubovi ( čelična užad )</text>
<path d="M1867.21 979.55 A21.6 21.6 0 0 1 1891.06 957.32" fill="none" stroke="#0c0c0c" stroke-width="3.6"/>
<path d="M1859.8 965.2 L1867.4 964.6 L1868.6 971.2 L1864.2 971.4 Z" fill="#0c0c0c"/>
<circle cx="1888.8" cy="978.8" r="20.2" fill="#111"/>
<circle cx="1888.8" cy="978.8" r="19.4" fill="#fff"/>
<circle cx="1888.8" cy="978.8" r="17.9" fill="url(#gCompass)"/>
<path d="M1904.47 989.11 L1906.57 984.8 L1900.84 984.67 Z" fill="#fff" opacity="0.95"/>
<path d="M1878.49 994.47 L1882.8 996.57 L1882.93 990.84 Z" fill="#fff" opacity="0.95"/>
<path d="M1873.13 968.49 L1871.03 972.8 L1876.76 972.93 Z" fill="#fff" opacity="0.95"/>
<path d="M1899.11 963.13 L1894.8 961.03 L1894.67 966.76 Z" fill="#fff" opacity="0.95"/>
<rect x="2.6" y="980" width="5.8" height="28" fill="#8a8a8a" stroke="#161616" stroke-width="1.2"/>
</g>
<rect x="0" y="161" width="1" height="847" fill="#f0f0f0"/>
<rect x="1" y="161" width="1.4" height="847" fill="#6a6a6a"/>
<rect x="1918.4" y="160" width="1.6" height="848" fill="#ebebeb"/>
<rect x="0" y="1008" width="1920" height="24" fill="url(#gMenu)"/>
<rect x="0" y="1008" width="1920" height="2" fill="#fbfbfb"/>
<text x="1840.5" y="1026.3" font-size="12" fill="#5f5f5f" text-anchor="start" font-weight="normal" textLength="55.3" lengthAdjust="spacingAndGlyphs" >0.9.0076</text>
<rect x="6.2" y="1024.6" width="1.6" height="1.6" fill="#222"/>
<rect x="8.8" y="1024.6" width="1.6" height="1.6" fill="#222"/>
<rect x="11.4" y="1024.6" width="1.6" height="1.6" fill="#222"/>
<rect x="0" y="1031.6" width="1920" height="3.4" fill="#545b58"/>
<rect x="0" y="1031.6" width="420" height="3.4" fill="#6b6d6c"/>
<rect x="62" y="1032.6" width="69" height="2.4" fill="#9a9c9b"/>
<rect x="208" y="1032.6" width="62" height="2.4" fill="#9a9c9b"/>
<rect x="281" y="1032.6" width="69" height="2.4" fill="#9a9c9b"/>
<rect x="354" y="1032.6" width="69" height="2.4" fill="#9a9c9b"/>
<rect x="354" y="1032.6" width="69" height="2.4" fill="#c9cbca"/>
</g>
</svg>
</body></html>
